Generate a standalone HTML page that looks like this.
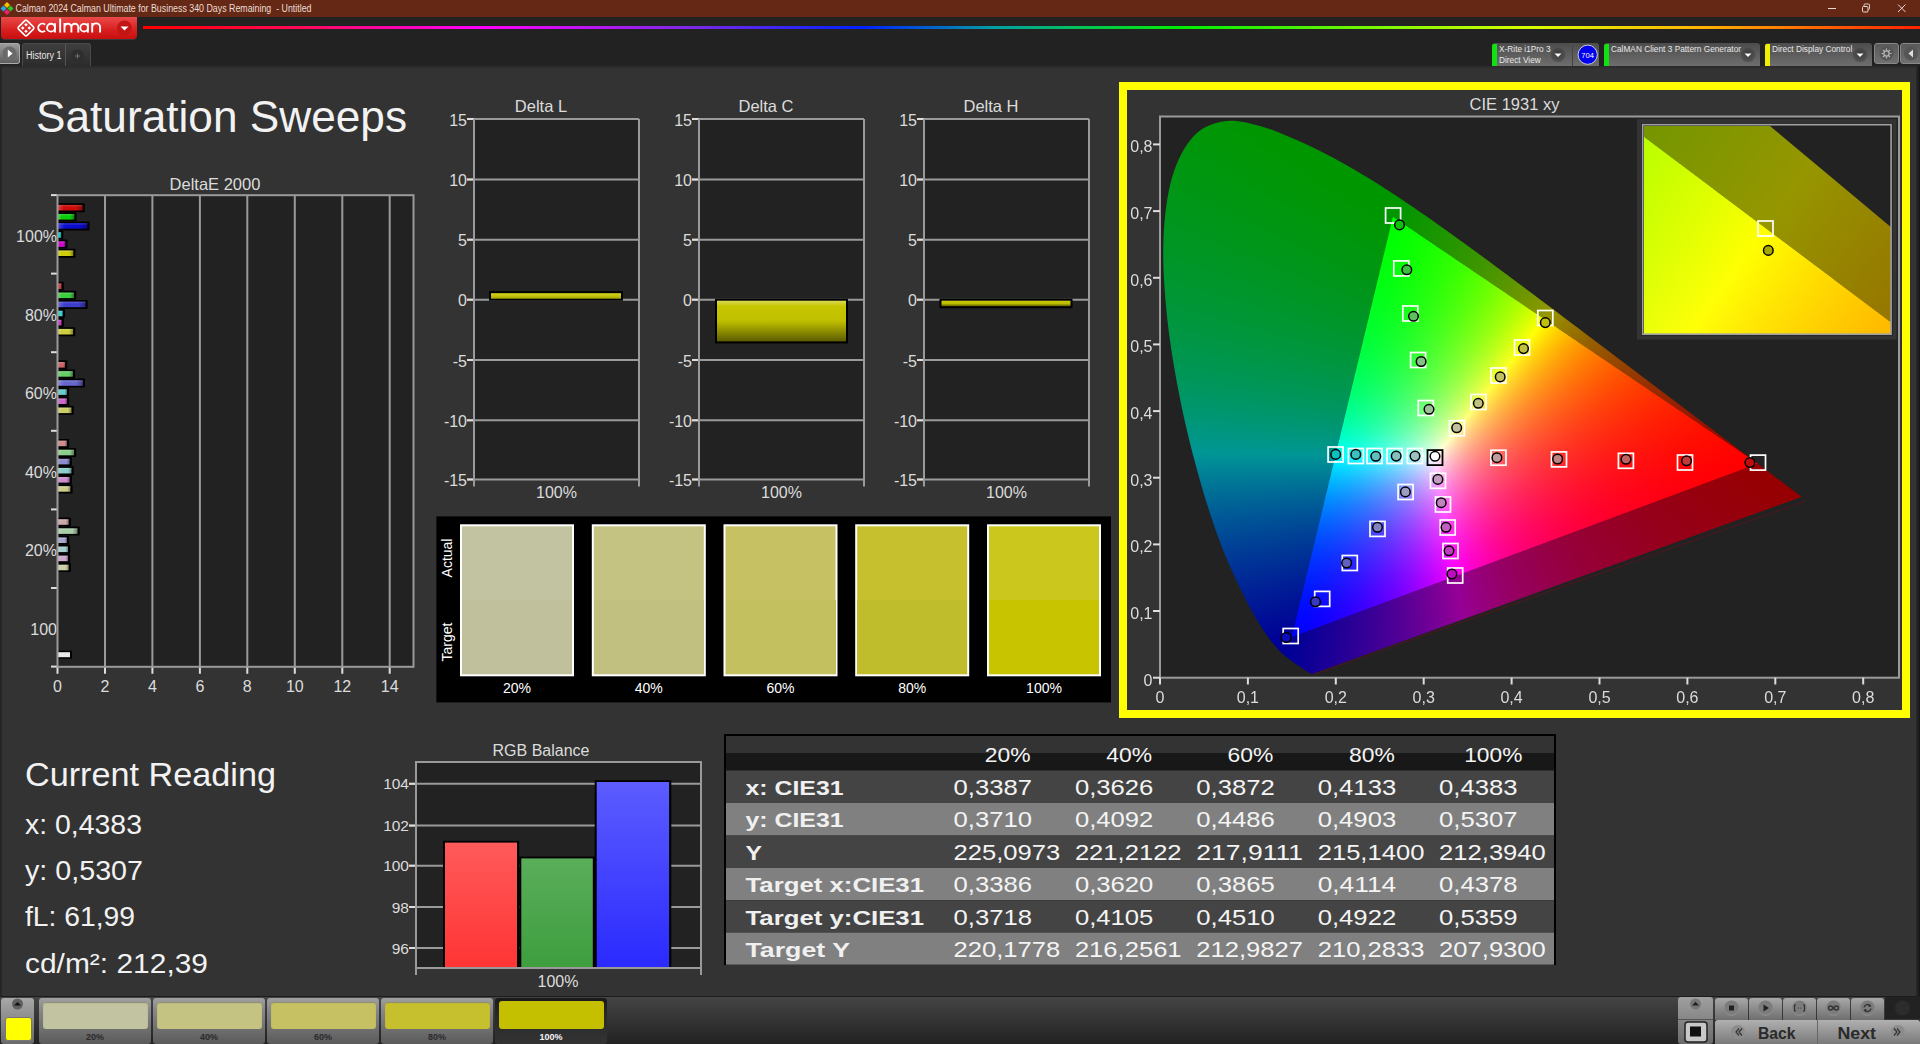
<!DOCTYPE html>
<html><head><meta charset="utf-8"><title>Calman</title>
<style>
html,body{margin:0;padding:0;width:1920px;height:1044px;overflow:hidden;background:#333;font-family:"Liberation Sans", sans-serif;}
.a{position:absolute;box-sizing:border-box;}
svg text{font-family:"Liberation Sans", sans-serif;}
</style></head><body>

<div class="a" style="left:0;top:0;width:1920px;height:17px;background:#652814;"></div>
<svg class="a" style="left:0;top:0" width="16" height="17" viewBox="0 0 16 17">
<g transform="translate(7,8.5) rotate(45)">
<rect x="-4.6" y="-4.6" width="4.2" height="4.2" fill="#f5c400"/>
<rect x="0.4" y="-4.6" width="4.2" height="4.2" fill="#22cc22"/>
<rect x="-4.6" y="0.4" width="4.2" height="4.2" fill="#22aaee"/>
<rect x="0.4" y="0.4" width="4.2" height="4.2" fill="#ee2266"/>
</g></svg>
<svg class="a" style="left:0;top:0" width="400" height="17"><text x="15.5" y="12.2" font-size="10.2" fill="#eadcd6" text-anchor="start" font-weight="normal" textLength="296" lengthAdjust="spacingAndGlyphs" >Calman 2024 Calman Ultimate for Business 340 Days Remaining &#160;- Untitled</text></svg>
<svg class="a" style="left:1800px;top:0" width="120" height="17">
<line x1="1828" y1="8.5" x2="1836" y2="8.5" stroke="#e8d8d0" stroke-width="1" transform="translate(-1800,0)"/>
<rect x="62.5" y="6.5" width="5.5" height="5.5" rx="1" fill="none" stroke="#e8d8d0" stroke-width="1"/>
<path d="M64 6.5 V5 Q64 4 65 4 H68.5 Q69.5 4 69.5 5 V8.5 Q69.5 9.5 68.5 9.5" fill="none" stroke="#e8d8d0" stroke-width="0.9"/>
<path d="M98 4.5 L105.5 12 M105.5 4.5 L98 12" stroke="#e8d8d0" stroke-width="1"/>
</svg>
<div class="a" style="left:0;top:17px;width:1920px;height:49px;background:#222;"></div>
<div class="a" style="left:1px;top:17px;width:136px;height:22px;border-radius:0 0 4px 4px;background:linear-gradient(#ea4a4a,#d81e1e 60%,#c80f0f);box-shadow:0 1px 0 #3a3a3a;"></div>
<svg class="a" style="left:0;top:17px" width="140" height="23">
<g transform="translate(26,11) rotate(45)" fill="none" stroke="#fff" stroke-width="1.6">
<rect x="-6" y="-6" width="12" height="12" rx="1.5"/>
</g>
<g transform="translate(26,11) rotate(45)" fill="#fff">
<rect x="-3.6" y="-3.6" width="2.6" height="2.6"/><rect x="1" y="-3.6" width="2.6" height="2.6"/>
<rect x="-3.6" y="1" width="2.6" height="2.6"/><rect x="1" y="1" width="2.6" height="2.6"/>
</g>
<g fill="none" stroke="#fff" stroke-width="1.9" stroke-linecap="butt" transform="translate(0,-17)">
<path d="M45.1 24.7 A4.05 4.05 0 1 0 45.1 30.6"/>
<circle cx="51.0" cy="27.65" r="3.95"/><path d="M54.95 23.2 V32.6"/>
<path d="M60.15 18.6 V32.6"/>
<path d="M64.5 32.6 V27.2 A3.45 3.45 0 0 1 71.4 27.2 V32.6 M71.4 27.2 A3.45 3.45 0 0 1 78.3 27.2 V32.6 M64.5 27.5 V23"/>
<circle cx="84.1" cy="27.65" r="3.8"/><path d="M87.9 23.2 V32.6"/>
<path d="M92.2 32.6 V27.3 A3.95 3.95 0 0 1 100.1 27.3 V32.6 M92.2 27.5 V23"/>
</g>
<circle cx="124.5" cy="11" r="7.5" fill="#c41515"/>
<path d="M120.5 9.5 L128.5 9.5 L124.5 13.5 Z" fill="#fff"/>
</svg>
<div class="a" style="left:143px;top:26px;width:1777px;height:3px;background:linear-gradient(90deg,#ff0000 0%,#ff0a5a 9%,#ff00ff 19%,#7a2ae6 31%,#0022ff 40.5%,#00a0a0 48%,#00ee00 58.5%,#d8ff00 78%,#ffb000 88%,#ff2200 100%);"></div>
<div class="a" style="left:0;top:43px;width:20px;height:21px;border-radius:0 3px 3px 0;background:linear-gradient(#9a9a9a,#5e5e5e);border:1px solid #aaa;border-left:none;"></div>
<svg class="a" style="left:0;top:43px" width="22" height="22">
<circle cx="9.5" cy="10.5" r="7" fill="#6a6a6a"/>
<path d="M7.8 6.5 L12.5 10.5 L7.8 14.5 Z" fill="#fff"/>
</svg>
<div class="a" style="left:22px;top:43px;width:69px;height:23px;border-radius:3px 3px 0 0;background:linear-gradient(#3e3e3e,#2c2c2c);border:1px solid #4a4a4a;border-bottom:none;"></div>
<div class="a" style="left:65px;top:44px;width:1px;height:22px;background:#555;"></div>
<svg class="a" style="left:0;top:43px" width="70" height="23"><text x="26" y="16.2" font-size="10" fill="#e6e6e6" text-anchor="start" font-weight="normal" textLength="35.5" lengthAdjust="spacingAndGlyphs" >History 1</text></svg>
<svg class="a" style="left:66px;top:43px" width="26" height="23">
<circle cx="11.5" cy="13" r="6.5" fill="#2e2e2e"/>
<path d="M11.5 10.5 V15.5 M9 13 H14" stroke="#777" stroke-width="0.9"/>
</svg>
<div class="a" style="left:1492px;top:43px;width:107px;height:23px;border-radius:3px 3px 0 0;background:linear-gradient(#4c4c4c,#6e6e6e);"></div><div class="a" style="left:1492px;top:44px;width:5px;height:22px;border-radius:2px 0 0 0;background:#11e011;"></div><div class="a" style="left:1499px;top:44px;font-size:8.3px;line-height:11px;color:#e8e8e8;white-space:pre;">X-Rite i1Pro 3<br>Direct View</div><svg class="a" style="left:1549px;top:44px" width="18" height="22"><defs><radialGradient id="dg1492" cx="50%" cy="40%" r="60%"><stop offset="0" stop-color="#3a3a3a"/><stop offset="0.8" stop-color="#505050"/><stop offset="1" stop-color="#5e5e5e"/></radialGradient></defs>
<circle cx="9" cy="11" r="7.5" fill="url(#dg1492)"/><path d="M5.5 9.5 L12.5 9.5 L9 13 Z" fill="#fff"/></svg>
<div class="a" style="left:1572px;top:45px;width:1px;height:21px;background:#444;"></div>
<svg class="a" style="left:1576px;top:43px" width="24" height="24"><circle cx="11.7" cy="11.7" r="9.6" fill="#0000ee" stroke="#ddd" stroke-width="0.9"/>
<text x="11.7" y="14.6" font-size="7.6" fill="#fff" text-anchor="middle">704</text></svg>
<div class="a" style="left:1604px;top:43px;width:156px;height:23px;border-radius:3px 3px 0 0;background:linear-gradient(#4c4c4c,#6e6e6e);"></div><div class="a" style="left:1604px;top:44px;width:5px;height:22px;border-radius:2px 0 0 0;background:#11e011;"></div><div class="a" style="left:1611px;top:44px;font-size:8.3px;line-height:11px;color:#e8e8e8;white-space:pre;">CalMAN Client 3 Pattern Generator</div><svg class="a" style="left:1739px;top:44px" width="18" height="22"><defs><radialGradient id="dg1604" cx="50%" cy="40%" r="60%"><stop offset="0" stop-color="#3a3a3a"/><stop offset="0.8" stop-color="#505050"/><stop offset="1" stop-color="#5e5e5e"/></radialGradient></defs>
<circle cx="9" cy="11" r="7.5" fill="url(#dg1604)"/><path d="M5.5 9.5 L12.5 9.5 L9 13 Z" fill="#fff"/></svg>
<div class="a" style="left:1765px;top:43px;width:107px;height:23px;border-radius:3px 3px 0 0;background:linear-gradient(#4c4c4c,#6e6e6e);"></div><div class="a" style="left:1765px;top:44px;width:5px;height:22px;border-radius:2px 0 0 0;background:#f0f000;"></div><div class="a" style="left:1772px;top:44px;font-size:8.3px;line-height:11px;color:#e8e8e8;white-space:pre;">Direct Display Control</div><svg class="a" style="left:1851px;top:44px" width="18" height="22"><defs><radialGradient id="dg1765" cx="50%" cy="40%" r="60%"><stop offset="0" stop-color="#3a3a3a"/><stop offset="0.8" stop-color="#505050"/><stop offset="1" stop-color="#5e5e5e"/></radialGradient></defs>
<circle cx="9" cy="11" r="7.5" fill="url(#dg1765)"/><path d="M5.5 9.5 L12.5 9.5 L9 13 Z" fill="#fff"/></svg>
<div class="a" style="left:1874px;top:43px;width:25px;height:21px;border-radius:3px;background:linear-gradient(#5a5a5a,#707070);border:1px solid #888;"></div>
<svg class="a" style="left:1874px;top:43px" width="26" height="22"><circle cx="12.5" cy="10.5" r="7" fill="#555"/>
<g fill="none" stroke="#bbb" stroke-width="1.2"><circle cx="12.5" cy="10.5" r="2.6"/>
<path d="M12.5 5.5 V7.2 M12.5 13.8 V15.5 M7.5 10.5 H9.2 M15.8 10.5 H17.5 M9 7 L10.2 8.2 M14.8 12.8 L16 14 M16 7 L14.8 8.2 M10.2 12.8 L9 14"/></g></svg>
<div class="a" style="left:1900px;top:43px;width:22px;height:21px;border-radius:3px 0 0 3px;background:linear-gradient(#5a5a5a,#707070);border:1px solid #888;"></div>
<svg class="a" style="left:1900px;top:43px" width="20" height="22"><circle cx="11" cy="10.5" r="7" fill="#555"/><path d="M13 6.5 L8.5 10.5 L13 14.5 Z" fill="#ddd"/></svg>
<div class="a" style="left:0;top:66px;width:1920px;height:3px;background:linear-gradient(#2a2a2a,#333);"></div>
<div class="a" style="left:0;top:66px;width:2px;height:930px;background:#262626;"></div>
<div class="a" style="left:1916px;top:66px;width:4px;height:930px;background:linear-gradient(90deg,#2a2a2a,#141414);"></div>
<svg class="a" style="left:0;top:0" width="1920" height="1044"><text x="36" y="131.5" font-size="44" fill="#f2f2f2" text-anchor="start" font-weight="normal" textLength="371" lengthAdjust="spacingAndGlyphs" >Saturation Sweeps</text><text x="215" y="189.5" font-size="16.5" fill="#dcdcdc" text-anchor="middle" font-weight="normal" >DeltaE 2000</text><rect x="57.5" y="195.2" width="356.0" height="471.59999999999997" fill="#222"/><line x1="105.0" y1="195.2" x2="105.0" y2="666.8" stroke="#9a9a9a" stroke-width="2"/><line x1="105.0" y1="666.8" x2="105.0" y2="673.8" stroke="#ddd" stroke-width="2"/><line x1="152.4" y1="195.2" x2="152.4" y2="666.8" stroke="#9a9a9a" stroke-width="2"/><line x1="152.4" y1="666.8" x2="152.4" y2="673.8" stroke="#ddd" stroke-width="2"/><line x1="199.9" y1="195.2" x2="199.9" y2="666.8" stroke="#9a9a9a" stroke-width="2"/><line x1="199.9" y1="666.8" x2="199.9" y2="673.8" stroke="#ddd" stroke-width="2"/><line x1="247.3" y1="195.2" x2="247.3" y2="666.8" stroke="#9a9a9a" stroke-width="2"/><line x1="247.3" y1="666.8" x2="247.3" y2="673.8" stroke="#ddd" stroke-width="2"/><line x1="294.8" y1="195.2" x2="294.8" y2="666.8" stroke="#9a9a9a" stroke-width="2"/><line x1="294.8" y1="666.8" x2="294.8" y2="673.8" stroke="#ddd" stroke-width="2"/><line x1="342.3" y1="195.2" x2="342.3" y2="666.8" stroke="#9a9a9a" stroke-width="2"/><line x1="342.3" y1="666.8" x2="342.3" y2="673.8" stroke="#ddd" stroke-width="2"/><line x1="389.7" y1="195.2" x2="389.7" y2="666.8" stroke="#9a9a9a" stroke-width="2"/><line x1="389.7" y1="666.8" x2="389.7" y2="673.8" stroke="#ddd" stroke-width="2"/><line x1="57.5" y1="666.8" x2="57.5" y2="673.8" stroke="#ddd" stroke-width="2"/><text x="57.5" y="691.5" font-size="16" fill="#dcdcdc" text-anchor="middle" font-weight="normal" >0</text><text x="105.0" y="691.5" font-size="16" fill="#dcdcdc" text-anchor="middle" font-weight="normal" >2</text><text x="152.4" y="691.5" font-size="16" fill="#dcdcdc" text-anchor="middle" font-weight="normal" >4</text><text x="199.9" y="691.5" font-size="16" fill="#dcdcdc" text-anchor="middle" font-weight="normal" >6</text><text x="247.3" y="691.5" font-size="16" fill="#dcdcdc" text-anchor="middle" font-weight="normal" >8</text><text x="294.8" y="691.5" font-size="16" fill="#dcdcdc" text-anchor="middle" font-weight="normal" >10</text><text x="342.3" y="691.5" font-size="16" fill="#dcdcdc" text-anchor="middle" font-weight="normal" >12</text><text x="389.7" y="691.5" font-size="16" fill="#dcdcdc" text-anchor="middle" font-weight="normal" >14</text><line x1="51" y1="195.1" x2="57.5" y2="195.1" stroke="#ddd" stroke-width="2"/><line x1="51" y1="273.6" x2="57.5" y2="273.6" stroke="#ddd" stroke-width="2"/><line x1="51" y1="352.2" x2="57.5" y2="352.2" stroke="#ddd" stroke-width="2"/><line x1="51" y1="430.8" x2="57.5" y2="430.8" stroke="#ddd" stroke-width="2"/><line x1="51" y1="509.4" x2="57.5" y2="509.4" stroke="#ddd" stroke-width="2"/><line x1="51" y1="588.0" x2="57.5" y2="588.0" stroke="#ddd" stroke-width="2"/><line x1="51" y1="666.6" x2="57.5" y2="666.6" stroke="#ddd" stroke-width="2"/><text x="57" y="242.0" font-size="16" fill="#dcdcdc" text-anchor="end" font-weight="normal" >100%</text><text x="57" y="320.5" font-size="16" fill="#dcdcdc" text-anchor="end" font-weight="normal" >80%</text><text x="57" y="399.1" font-size="16" fill="#dcdcdc" text-anchor="end" font-weight="normal" >60%</text><text x="57" y="477.7" font-size="16" fill="#dcdcdc" text-anchor="end" font-weight="normal" >40%</text><text x="57" y="556.3" font-size="16" fill="#dcdcdc" text-anchor="end" font-weight="normal" >20%</text><text x="57" y="634.9" font-size="16" fill="#dcdcdc" text-anchor="end" font-weight="normal" >100</text><rect x="57.5" y="203.2" width="27.3" height="9" rx="1" fill="#000"/><defs><linearGradient id="db00" x1="0" y1="0" x2="1" y2="0"><stop offset="0" stop-color="#d94949"/><stop offset="0.25" stop-color="#cd0c0c"/><stop offset="0.75" stop-color="#cd0c0c"/><stop offset="1" stop-color="#7f0707"/></linearGradient></defs><rect x="57.5" y="204.9" width="25.1" height="5.6" fill="url(#db00)"/><rect x="57.5" y="204.9" width="25.1" height="1.6" fill="#fff" opacity="0.12"/><rect x="57.5" y="212.3" width="19.1" height="9" rx="1" fill="#000"/><defs><linearGradient id="db01" x1="0" y1="0" x2="1" y2="0"><stop offset="0" stop-color="#49d949"/><stop offset="0.25" stop-color="#0ccd0c"/><stop offset="0.75" stop-color="#0ccd0c"/><stop offset="1" stop-color="#077f07"/></linearGradient></defs><rect x="57.5" y="214.0" width="16.9" height="5.6" fill="url(#db01)"/><rect x="57.5" y="214.0" width="16.9" height="1.6" fill="#fff" opacity="0.12"/><rect x="57.5" y="221.4" width="32.1" height="9" rx="1" fill="#000"/><defs><linearGradient id="db02" x1="0" y1="0" x2="1" y2="0"><stop offset="0" stop-color="#4949d9"/><stop offset="0.25" stop-color="#0c0ccd"/><stop offset="0.75" stop-color="#0c0ccd"/><stop offset="1" stop-color="#07077f"/></linearGradient></defs><rect x="57.5" y="223.1" width="29.9" height="5.6" fill="url(#db02)"/><rect x="57.5" y="223.1" width="29.9" height="1.6" fill="#fff" opacity="0.12"/><rect x="57.5" y="230.5" width="5.8" height="9" rx="1" fill="#000"/><defs><linearGradient id="db03" x1="0" y1="0" x2="1" y2="0"><stop offset="0" stop-color="#49d9d9"/><stop offset="0.25" stop-color="#0ccdcd"/><stop offset="0.75" stop-color="#0ccdcd"/><stop offset="1" stop-color="#077f7f"/></linearGradient></defs><rect x="57.5" y="232.2" width="3.6" height="5.6" fill="url(#db03)"/><rect x="57.5" y="232.2" width="3.6" height="1.6" fill="#fff" opacity="0.12"/><rect x="57.5" y="239.6" width="10.0" height="9" rx="1" fill="#000"/><defs><linearGradient id="db04" x1="0" y1="0" x2="1" y2="0"><stop offset="0" stop-color="#d949d9"/><stop offset="0.25" stop-color="#cd0ccd"/><stop offset="0.75" stop-color="#cd0ccd"/><stop offset="1" stop-color="#7f077f"/></linearGradient></defs><rect x="57.5" y="241.3" width="7.8" height="5.6" fill="url(#db04)"/><rect x="57.5" y="241.3" width="7.8" height="1.6" fill="#fff" opacity="0.12"/><rect x="57.5" y="248.7" width="18.0" height="9" rx="1" fill="#000"/><defs><linearGradient id="db05" x1="0" y1="0" x2="1" y2="0"><stop offset="0" stop-color="#d9d949"/><stop offset="0.25" stop-color="#cdcd0c"/><stop offset="0.75" stop-color="#cdcd0c"/><stop offset="1" stop-color="#7f7f07"/></linearGradient></defs><rect x="57.5" y="250.4" width="15.8" height="5.6" fill="url(#db05)"/><rect x="57.5" y="250.4" width="15.8" height="1.6" fill="#fff" opacity="0.12"/><rect x="57.5" y="281.7" width="6.3" height="9" rx="1" fill="#000"/><defs><linearGradient id="db10" x1="0" y1="0" x2="1" y2="0"><stop offset="0" stop-color="#d96e6e"/><stop offset="0.25" stop-color="#cd3e3e"/><stop offset="0.75" stop-color="#cd3e3e"/><stop offset="1" stop-color="#7f2626"/></linearGradient></defs><rect x="57.5" y="283.4" width="4.1" height="5.6" fill="url(#db10)"/><rect x="57.5" y="283.4" width="4.1" height="1.6" fill="#fff" opacity="0.12"/><rect x="57.5" y="290.8" width="18.7" height="9" rx="1" fill="#000"/><defs><linearGradient id="db11" x1="0" y1="0" x2="1" y2="0"><stop offset="0" stop-color="#6ed96e"/><stop offset="0.25" stop-color="#3ecd3e"/><stop offset="0.75" stop-color="#3ecd3e"/><stop offset="1" stop-color="#267f26"/></linearGradient></defs><rect x="57.5" y="292.5" width="16.5" height="5.6" fill="url(#db11)"/><rect x="57.5" y="292.5" width="16.5" height="1.6" fill="#fff" opacity="0.12"/><rect x="57.5" y="299.9" width="30.2" height="9" rx="1" fill="#000"/><defs><linearGradient id="db12" x1="0" y1="0" x2="1" y2="0"><stop offset="0" stop-color="#6e6ed9"/><stop offset="0.25" stop-color="#3e3ecd"/><stop offset="0.75" stop-color="#3e3ecd"/><stop offset="1" stop-color="#26267f"/></linearGradient></defs><rect x="57.5" y="301.6" width="28.0" height="5.6" fill="url(#db12)"/><rect x="57.5" y="301.6" width="28.0" height="1.6" fill="#fff" opacity="0.12"/><rect x="57.5" y="309.0" width="7.5" height="9" rx="1" fill="#000"/><defs><linearGradient id="db13" x1="0" y1="0" x2="1" y2="0"><stop offset="0" stop-color="#6ed9d9"/><stop offset="0.25" stop-color="#3ecdcd"/><stop offset="0.75" stop-color="#3ecdcd"/><stop offset="1" stop-color="#267f7f"/></linearGradient></defs><rect x="57.5" y="310.7" width="5.3" height="5.6" fill="url(#db13)"/><rect x="57.5" y="310.7" width="5.3" height="1.6" fill="#fff" opacity="0.12"/><rect x="57.5" y="318.1" width="6.3" height="9" rx="1" fill="#000"/><defs><linearGradient id="db14" x1="0" y1="0" x2="1" y2="0"><stop offset="0" stop-color="#d96ed9"/><stop offset="0.25" stop-color="#cd3ecd"/><stop offset="0.75" stop-color="#cd3ecd"/><stop offset="1" stop-color="#7f267f"/></linearGradient></defs><rect x="57.5" y="319.8" width="4.1" height="5.6" fill="url(#db14)"/><rect x="57.5" y="319.8" width="4.1" height="1.6" fill="#fff" opacity="0.12"/><rect x="57.5" y="327.2" width="17.8" height="9" rx="1" fill="#000"/><defs><linearGradient id="db15" x1="0" y1="0" x2="1" y2="0"><stop offset="0" stop-color="#d9d96e"/><stop offset="0.25" stop-color="#cdcd3e"/><stop offset="0.75" stop-color="#cdcd3e"/><stop offset="1" stop-color="#7f7f26"/></linearGradient></defs><rect x="57.5" y="328.9" width="15.6" height="5.6" fill="url(#db15)"/><rect x="57.5" y="328.9" width="15.6" height="1.6" fill="#fff" opacity="0.12"/><rect x="57.5" y="360.3" width="9.8" height="9" rx="1" fill="#000"/><defs><linearGradient id="db20" x1="0" y1="0" x2="1" y2="0"><stop offset="0" stop-color="#d98c8c"/><stop offset="0.25" stop-color="#cd6666"/><stop offset="0.75" stop-color="#cd6666"/><stop offset="1" stop-color="#7f3f3f"/></linearGradient></defs><rect x="57.5" y="362.0" width="7.6" height="5.6" fill="url(#db20)"/><rect x="57.5" y="362.0" width="7.6" height="1.6" fill="#fff" opacity="0.12"/><rect x="57.5" y="369.4" width="17.6" height="9" rx="1" fill="#000"/><defs><linearGradient id="db21" x1="0" y1="0" x2="1" y2="0"><stop offset="0" stop-color="#8cd98c"/><stop offset="0.25" stop-color="#66cd66"/><stop offset="0.75" stop-color="#66cd66"/><stop offset="1" stop-color="#3f7f3f"/></linearGradient></defs><rect x="57.5" y="371.1" width="15.4" height="5.6" fill="url(#db21)"/><rect x="57.5" y="371.1" width="15.4" height="1.6" fill="#fff" opacity="0.12"/><rect x="57.5" y="378.5" width="27.5" height="9" rx="1" fill="#000"/><defs><linearGradient id="db22" x1="0" y1="0" x2="1" y2="0"><stop offset="0" stop-color="#8c8cd9"/><stop offset="0.25" stop-color="#6666cd"/><stop offset="0.75" stop-color="#6666cd"/><stop offset="1" stop-color="#3f3f7f"/></linearGradient></defs><rect x="57.5" y="380.2" width="25.3" height="5.6" fill="url(#db22)"/><rect x="57.5" y="380.2" width="25.3" height="1.6" fill="#fff" opacity="0.12"/><rect x="57.5" y="387.6" width="11.6" height="9" rx="1" fill="#000"/><defs><linearGradient id="db23" x1="0" y1="0" x2="1" y2="0"><stop offset="0" stop-color="#8cd9d9"/><stop offset="0.25" stop-color="#66cdcd"/><stop offset="0.75" stop-color="#66cdcd"/><stop offset="1" stop-color="#3f7f7f"/></linearGradient></defs><rect x="57.5" y="389.3" width="9.4" height="5.6" fill="url(#db23)"/><rect x="57.5" y="389.3" width="9.4" height="1.6" fill="#fff" opacity="0.12"/><rect x="57.5" y="396.7" width="11.6" height="9" rx="1" fill="#000"/><defs><linearGradient id="db24" x1="0" y1="0" x2="1" y2="0"><stop offset="0" stop-color="#d98cd9"/><stop offset="0.25" stop-color="#cd66cd"/><stop offset="0.75" stop-color="#cd66cd"/><stop offset="1" stop-color="#7f3f7f"/></linearGradient></defs><rect x="57.5" y="398.4" width="9.4" height="5.6" fill="url(#db24)"/><rect x="57.5" y="398.4" width="9.4" height="1.6" fill="#fff" opacity="0.12"/><rect x="57.5" y="405.8" width="16.2" height="9" rx="1" fill="#000"/><defs><linearGradient id="db25" x1="0" y1="0" x2="1" y2="0"><stop offset="0" stop-color="#d9d98c"/><stop offset="0.25" stop-color="#cdcd66"/><stop offset="0.75" stop-color="#cdcd66"/><stop offset="1" stop-color="#7f7f3f"/></linearGradient></defs><rect x="57.5" y="407.5" width="14.0" height="5.6" fill="url(#db25)"/><rect x="57.5" y="407.5" width="14.0" height="1.6" fill="#fff" opacity="0.12"/><rect x="57.5" y="438.9" width="11.6" height="9" rx="1" fill="#000"/><defs><linearGradient id="db30" x1="0" y1="0" x2="1" y2="0"><stop offset="0" stop-color="#d9a8a8"/><stop offset="0.25" stop-color="#cd8b8b"/><stop offset="0.75" stop-color="#cd8b8b"/><stop offset="1" stop-color="#7f5656"/></linearGradient></defs><rect x="57.5" y="440.6" width="9.4" height="5.6" fill="url(#db30)"/><rect x="57.5" y="440.6" width="9.4" height="1.6" fill="#fff" opacity="0.12"/><rect x="57.5" y="448.0" width="18.7" height="9" rx="1" fill="#000"/><defs><linearGradient id="db31" x1="0" y1="0" x2="1" y2="0"><stop offset="0" stop-color="#a8d9a8"/><stop offset="0.25" stop-color="#8bcd8b"/><stop offset="0.75" stop-color="#8bcd8b"/><stop offset="1" stop-color="#567f56"/></linearGradient></defs><rect x="57.5" y="449.7" width="16.5" height="5.6" fill="url(#db31)"/><rect x="57.5" y="449.7" width="16.5" height="1.6" fill="#fff" opacity="0.12"/><rect x="57.5" y="457.1" width="14.4" height="9" rx="1" fill="#000"/><defs><linearGradient id="db32" x1="0" y1="0" x2="1" y2="0"><stop offset="0" stop-color="#a8a8d9"/><stop offset="0.25" stop-color="#8b8bcd"/><stop offset="0.75" stop-color="#8b8bcd"/><stop offset="1" stop-color="#56567f"/></linearGradient></defs><rect x="57.5" y="458.8" width="12.2" height="5.6" fill="url(#db32)"/><rect x="57.5" y="458.8" width="12.2" height="1.6" fill="#fff" opacity="0.12"/><rect x="57.5" y="466.2" width="16.2" height="9" rx="1" fill="#000"/><defs><linearGradient id="db33" x1="0" y1="0" x2="1" y2="0"><stop offset="0" stop-color="#a8d9d9"/><stop offset="0.25" stop-color="#8bcdcd"/><stop offset="0.75" stop-color="#8bcdcd"/><stop offset="1" stop-color="#567f7f"/></linearGradient></defs><rect x="57.5" y="467.9" width="14.0" height="5.6" fill="url(#db33)"/><rect x="57.5" y="467.9" width="14.0" height="1.6" fill="#fff" opacity="0.12"/><rect x="57.5" y="475.3" width="14.4" height="9" rx="1" fill="#000"/><defs><linearGradient id="db34" x1="0" y1="0" x2="1" y2="0"><stop offset="0" stop-color="#d9a8d9"/><stop offset="0.25" stop-color="#cd8bcd"/><stop offset="0.75" stop-color="#cd8bcd"/><stop offset="1" stop-color="#7f567f"/></linearGradient></defs><rect x="57.5" y="477.0" width="12.2" height="5.6" fill="url(#db34)"/><rect x="57.5" y="477.0" width="12.2" height="1.6" fill="#fff" opacity="0.12"/><rect x="57.5" y="484.4" width="15.1" height="9" rx="1" fill="#000"/><defs><linearGradient id="db35" x1="0" y1="0" x2="1" y2="0"><stop offset="0" stop-color="#d9d9a8"/><stop offset="0.25" stop-color="#cdcd8b"/><stop offset="0.75" stop-color="#cdcd8b"/><stop offset="1" stop-color="#7f7f56"/></linearGradient></defs><rect x="57.5" y="486.1" width="12.9" height="5.6" fill="url(#db35)"/><rect x="57.5" y="486.1" width="12.9" height="1.6" fill="#fff" opacity="0.12"/><rect x="57.5" y="517.5" width="13.4" height="9" rx="1" fill="#000"/><defs><linearGradient id="db40" x1="0" y1="0" x2="1" y2="0"><stop offset="0" stop-color="#d9bebe"/><stop offset="0.25" stop-color="#cda8a8"/><stop offset="0.75" stop-color="#cda8a8"/><stop offset="1" stop-color="#7f6868"/></linearGradient></defs><rect x="57.5" y="519.2" width="11.2" height="5.6" fill="url(#db40)"/><rect x="57.5" y="519.2" width="11.2" height="1.6" fill="#fff" opacity="0.12"/><rect x="57.5" y="526.6" width="22.2" height="9" rx="1" fill="#000"/><defs><linearGradient id="db41" x1="0" y1="0" x2="1" y2="0"><stop offset="0" stop-color="#bed9be"/><stop offset="0.25" stop-color="#a8cda8"/><stop offset="0.75" stop-color="#a8cda8"/><stop offset="1" stop-color="#687f68"/></linearGradient></defs><rect x="57.5" y="528.3" width="20.0" height="5.6" fill="url(#db41)"/><rect x="57.5" y="528.3" width="20.0" height="1.6" fill="#fff" opacity="0.12"/><rect x="57.5" y="535.7" width="11.6" height="9" rx="1" fill="#000"/><defs><linearGradient id="db42" x1="0" y1="0" x2="1" y2="0"><stop offset="0" stop-color="#bebed9"/><stop offset="0.25" stop-color="#a8a8cd"/><stop offset="0.75" stop-color="#a8a8cd"/><stop offset="1" stop-color="#68687f"/></linearGradient></defs><rect x="57.5" y="537.4" width="9.4" height="5.6" fill="url(#db42)"/><rect x="57.5" y="537.4" width="9.4" height="1.6" fill="#fff" opacity="0.12"/><rect x="57.5" y="544.8" width="12.7" height="9" rx="1" fill="#000"/><defs><linearGradient id="db43" x1="0" y1="0" x2="1" y2="0"><stop offset="0" stop-color="#bed9d9"/><stop offset="0.25" stop-color="#a8cdcd"/><stop offset="0.75" stop-color="#a8cdcd"/><stop offset="1" stop-color="#687f7f"/></linearGradient></defs><rect x="57.5" y="546.5" width="10.5" height="5.6" fill="url(#db43)"/><rect x="57.5" y="546.5" width="10.5" height="1.6" fill="#fff" opacity="0.12"/><rect x="57.5" y="553.9" width="12.7" height="9" rx="1" fill="#000"/><defs><linearGradient id="db44" x1="0" y1="0" x2="1" y2="0"><stop offset="0" stop-color="#d9bed9"/><stop offset="0.25" stop-color="#cda8cd"/><stop offset="0.75" stop-color="#cda8cd"/><stop offset="1" stop-color="#7f687f"/></linearGradient></defs><rect x="57.5" y="555.6" width="10.5" height="5.6" fill="url(#db44)"/><rect x="57.5" y="555.6" width="10.5" height="1.6" fill="#fff" opacity="0.12"/><rect x="57.5" y="563.0" width="13.4" height="9" rx="1" fill="#000"/><defs><linearGradient id="db45" x1="0" y1="0" x2="1" y2="0"><stop offset="0" stop-color="#d9d9be"/><stop offset="0.25" stop-color="#cdcda8"/><stop offset="0.75" stop-color="#cdcda8"/><stop offset="1" stop-color="#7f7f68"/></linearGradient></defs><rect x="57.5" y="564.7" width="11.2" height="5.6" fill="url(#db45)"/><rect x="57.5" y="564.7" width="11.2" height="1.6" fill="#fff" opacity="0.12"/><rect x="57.5" y="650.7" width="14.5" height="8" fill="#000"/><rect x="57.5" y="652.2" width="12.5" height="5" fill="#e8e8e8"/><rect x="57.5" y="195.2" width="356.0" height="471.59999999999997" fill="none" stroke="#9a9a9a" stroke-width="2"/><text x="541" y="111.5" font-size="16.5" fill="#dcdcdc" text-anchor="middle" font-weight="normal" >Delta L</text><rect x="474" y="119.0" width="165" height="360.5" fill="#222"/><line x1="467" y1="119.0" x2="639" y2="119.0" stroke="#9a9a9a" stroke-width="2"/><line x1="467" y1="119.0" x2="474" y2="119.0" stroke="#ddd" stroke-width="2"/><text x="467" y="125.5" font-size="16" fill="#dcdcdc" text-anchor="end" font-weight="normal" >15</text><line x1="467" y1="179.5" x2="639" y2="179.5" stroke="#9a9a9a" stroke-width="2"/><line x1="467" y1="179.5" x2="474" y2="179.5" stroke="#ddd" stroke-width="2"/><text x="467" y="186.0" font-size="16" fill="#dcdcdc" text-anchor="end" font-weight="normal" >10</text><line x1="467" y1="239.7" x2="639" y2="239.7" stroke="#9a9a9a" stroke-width="2"/><line x1="467" y1="239.7" x2="474" y2="239.7" stroke="#ddd" stroke-width="2"/><text x="467" y="246.2" font-size="16" fill="#dcdcdc" text-anchor="end" font-weight="normal" >5</text><line x1="467" y1="299.7" x2="639" y2="299.7" stroke="#9a9a9a" stroke-width="2"/><line x1="467" y1="299.7" x2="474" y2="299.7" stroke="#ddd" stroke-width="2"/><text x="467" y="306.2" font-size="16" fill="#dcdcdc" text-anchor="end" font-weight="normal" >0</text><line x1="467" y1="360.0" x2="639" y2="360.0" stroke="#9a9a9a" stroke-width="2"/><line x1="467" y1="360.0" x2="474" y2="360.0" stroke="#ddd" stroke-width="2"/><text x="467" y="366.5" font-size="16" fill="#dcdcdc" text-anchor="end" font-weight="normal" >-5</text><line x1="467" y1="420.3" x2="639" y2="420.3" stroke="#9a9a9a" stroke-width="2"/><line x1="467" y1="420.3" x2="474" y2="420.3" stroke="#ddd" stroke-width="2"/><text x="467" y="426.8" font-size="16" fill="#dcdcdc" text-anchor="end" font-weight="normal" >-10</text><line x1="467" y1="479.5" x2="639" y2="479.5" stroke="#9a9a9a" stroke-width="2"/><line x1="467" y1="479.5" x2="474" y2="479.5" stroke="#ddd" stroke-width="2"/><text x="467" y="486.0" font-size="16" fill="#dcdcdc" text-anchor="end" font-weight="normal" >-15</text><line x1="474" y1="119.0" x2="474" y2="486.5" stroke="#9a9a9a" stroke-width="2"/><line x1="639" y1="119.0" x2="639" y2="486.5" stroke="#9a9a9a" stroke-width="2"/><text x="556.5" y="497.5" font-size="16" fill="#dcdcdc" text-anchor="middle" font-weight="normal" >100%</text><rect x="489" y="291.2" width="134" height="9.5" fill="#000"/><defs><linearGradient id="gL" x1="0" y1="0" x2="0" y2="1"><stop offset="0" stop-color="#d8d820"/><stop offset="1" stop-color="#a8a800"/></linearGradient></defs><rect x="491" y="293.2" width="130" height="5.5" fill="url(#gL)"/><text x="766" y="111.5" font-size="16.5" fill="#dcdcdc" text-anchor="middle" font-weight="normal" >Delta C</text><rect x="699" y="119.0" width="165" height="360.5" fill="#222"/><line x1="692" y1="119.0" x2="864" y2="119.0" stroke="#9a9a9a" stroke-width="2"/><line x1="692" y1="119.0" x2="699" y2="119.0" stroke="#ddd" stroke-width="2"/><text x="692" y="125.5" font-size="16" fill="#dcdcdc" text-anchor="end" font-weight="normal" >15</text><line x1="692" y1="179.5" x2="864" y2="179.5" stroke="#9a9a9a" stroke-width="2"/><line x1="692" y1="179.5" x2="699" y2="179.5" stroke="#ddd" stroke-width="2"/><text x="692" y="186.0" font-size="16" fill="#dcdcdc" text-anchor="end" font-weight="normal" >10</text><line x1="692" y1="239.7" x2="864" y2="239.7" stroke="#9a9a9a" stroke-width="2"/><line x1="692" y1="239.7" x2="699" y2="239.7" stroke="#ddd" stroke-width="2"/><text x="692" y="246.2" font-size="16" fill="#dcdcdc" text-anchor="end" font-weight="normal" >5</text><line x1="692" y1="299.7" x2="864" y2="299.7" stroke="#9a9a9a" stroke-width="2"/><line x1="692" y1="299.7" x2="699" y2="299.7" stroke="#ddd" stroke-width="2"/><text x="692" y="306.2" font-size="16" fill="#dcdcdc" text-anchor="end" font-weight="normal" >0</text><line x1="692" y1="360.0" x2="864" y2="360.0" stroke="#9a9a9a" stroke-width="2"/><line x1="692" y1="360.0" x2="699" y2="360.0" stroke="#ddd" stroke-width="2"/><text x="692" y="366.5" font-size="16" fill="#dcdcdc" text-anchor="end" font-weight="normal" >-5</text><line x1="692" y1="420.3" x2="864" y2="420.3" stroke="#9a9a9a" stroke-width="2"/><line x1="692" y1="420.3" x2="699" y2="420.3" stroke="#ddd" stroke-width="2"/><text x="692" y="426.8" font-size="16" fill="#dcdcdc" text-anchor="end" font-weight="normal" >-10</text><line x1="692" y1="479.5" x2="864" y2="479.5" stroke="#9a9a9a" stroke-width="2"/><line x1="692" y1="479.5" x2="699" y2="479.5" stroke="#ddd" stroke-width="2"/><text x="692" y="486.0" font-size="16" fill="#dcdcdc" text-anchor="end" font-weight="normal" >-15</text><line x1="699" y1="119.0" x2="699" y2="486.5" stroke="#9a9a9a" stroke-width="2"/><line x1="864" y1="119.0" x2="864" y2="486.5" stroke="#9a9a9a" stroke-width="2"/><text x="781.5" y="497.5" font-size="16" fill="#dcdcdc" text-anchor="middle" font-weight="normal" >100%</text><rect x="715" y="298.7" width="133" height="44.7" fill="#000"/><defs><linearGradient id="gC" x1="0" y1="0" x2="0" y2="1"><stop offset="0" stop-color="#dada55"/><stop offset="0.14" stop-color="#c6c600"/><stop offset="0.5" stop-color="#bfbf00"/><stop offset="1" stop-color="#5c5c00"/></linearGradient></defs><rect x="717" y="300.7" width="129" height="40.7" fill="url(#gC)"/><text x="991" y="111.5" font-size="16.5" fill="#dcdcdc" text-anchor="middle" font-weight="normal" >Delta H</text><rect x="924" y="119.0" width="165" height="360.5" fill="#222"/><line x1="917" y1="119.0" x2="1089" y2="119.0" stroke="#9a9a9a" stroke-width="2"/><line x1="917" y1="119.0" x2="924" y2="119.0" stroke="#ddd" stroke-width="2"/><text x="917" y="125.5" font-size="16" fill="#dcdcdc" text-anchor="end" font-weight="normal" >15</text><line x1="917" y1="179.5" x2="1089" y2="179.5" stroke="#9a9a9a" stroke-width="2"/><line x1="917" y1="179.5" x2="924" y2="179.5" stroke="#ddd" stroke-width="2"/><text x="917" y="186.0" font-size="16" fill="#dcdcdc" text-anchor="end" font-weight="normal" >10</text><line x1="917" y1="239.7" x2="1089" y2="239.7" stroke="#9a9a9a" stroke-width="2"/><line x1="917" y1="239.7" x2="924" y2="239.7" stroke="#ddd" stroke-width="2"/><text x="917" y="246.2" font-size="16" fill="#dcdcdc" text-anchor="end" font-weight="normal" >5</text><line x1="917" y1="299.7" x2="1089" y2="299.7" stroke="#9a9a9a" stroke-width="2"/><line x1="917" y1="299.7" x2="924" y2="299.7" stroke="#ddd" stroke-width="2"/><text x="917" y="306.2" font-size="16" fill="#dcdcdc" text-anchor="end" font-weight="normal" >0</text><line x1="917" y1="360.0" x2="1089" y2="360.0" stroke="#9a9a9a" stroke-width="2"/><line x1="917" y1="360.0" x2="924" y2="360.0" stroke="#ddd" stroke-width="2"/><text x="917" y="366.5" font-size="16" fill="#dcdcdc" text-anchor="end" font-weight="normal" >-5</text><line x1="917" y1="420.3" x2="1089" y2="420.3" stroke="#9a9a9a" stroke-width="2"/><line x1="917" y1="420.3" x2="924" y2="420.3" stroke="#ddd" stroke-width="2"/><text x="917" y="426.8" font-size="16" fill="#dcdcdc" text-anchor="end" font-weight="normal" >-10</text><line x1="917" y1="479.5" x2="1089" y2="479.5" stroke="#9a9a9a" stroke-width="2"/><line x1="917" y1="479.5" x2="924" y2="479.5" stroke="#ddd" stroke-width="2"/><text x="917" y="486.0" font-size="16" fill="#dcdcdc" text-anchor="end" font-weight="normal" >-15</text><line x1="924" y1="119.0" x2="924" y2="486.5" stroke="#9a9a9a" stroke-width="2"/><line x1="1089" y1="119.0" x2="1089" y2="486.5" stroke="#9a9a9a" stroke-width="2"/><text x="1006.5" y="497.5" font-size="16" fill="#dcdcdc" text-anchor="middle" font-weight="normal" >100%</text><rect x="939.5" y="298.7" width="133.0" height="9.5" fill="#000"/><defs><linearGradient id="gH" x1="0" y1="0" x2="0" y2="1"><stop offset="0" stop-color="#dada55"/><stop offset="0.14" stop-color="#c6c600"/><stop offset="0.5" stop-color="#bfbf00"/><stop offset="1" stop-color="#5c5c00"/></linearGradient></defs><rect x="941.5" y="300.7" width="129.0" height="5.5" fill="url(#gH)"/><rect x="436.4" y="516.4" width="674.6" height="186" fill="#000"/><text transform="translate(451.5,558) rotate(-90)" x="0" y="0" font-size="14" fill="#fff" text-anchor="middle">Actual</text><text transform="translate(451.5,642) rotate(-90)" x="0" y="0" font-size="14" fill="#fff" text-anchor="middle">Target</text><rect x="460.0" y="524.3" width="114" height="152" fill="#fff"/><rect x="462.0" y="526.3" width="110" height="148" fill="#c2c3a0"/><rect x="462.0" y="600" width="110" height="74.3" fill="#c0c09c" shape-rendering="crispEdges"/><text x="517.0" y="693" font-size="14" fill="#fff" text-anchor="middle" font-weight="normal" >20%</text><rect x="591.8" y="524.3" width="114" height="152" fill="#fff"/><rect x="593.8" y="526.3" width="110" height="148" fill="#c4c382"/><rect x="593.8" y="600" width="110" height="74.3" fill="#c2c080" shape-rendering="crispEdges"/><text x="648.8" y="693" font-size="14" fill="#fff" text-anchor="middle" font-weight="normal" >40%</text><rect x="723.5" y="524.3" width="114" height="152" fill="#fff"/><rect x="725.5" y="526.3" width="110" height="148" fill="#c6c263"/><rect x="725.5" y="600" width="110" height="74.3" fill="#c3c05f" shape-rendering="crispEdges"/><text x="780.5" y="693" font-size="14" fill="#fff" text-anchor="middle" font-weight="normal" >60%</text><rect x="855.2" y="524.3" width="114" height="152" fill="#fff"/><rect x="857.2" y="526.3" width="110" height="148" fill="#c6bf2e"/><rect x="857.2" y="600" width="110" height="74.3" fill="#c0bd2c" shape-rendering="crispEdges"/><text x="912.2" y="693" font-size="14" fill="#fff" text-anchor="middle" font-weight="normal" >80%</text><rect x="987.0" y="524.3" width="114" height="152" fill="#fff"/><rect x="989.0" y="526.3" width="110" height="148" fill="#cbc71c"/><rect x="989.0" y="600" width="110" height="74.3" fill="#c8c400" shape-rendering="crispEdges"/><text x="1044.0" y="693" font-size="14" fill="#fff" text-anchor="middle" font-weight="normal" >100%</text><text x="25" y="786.4" font-size="33.5" fill="#f2f2f2" text-anchor="start" font-weight="normal" textLength="251" lengthAdjust="spacingAndGlyphs" >Current Reading</text><text x="25" y="833.5" font-size="27" fill="#f2f2f2" text-anchor="start" font-weight="normal" textLength="117" lengthAdjust="spacingAndGlyphs" >x: 0,4383</text><text x="25" y="879.9" font-size="27" fill="#f2f2f2" text-anchor="start" font-weight="normal" textLength="118" lengthAdjust="spacingAndGlyphs" >y: 0,5307</text><text x="25" y="926.2" font-size="27" fill="#f2f2f2" text-anchor="start" font-weight="normal" textLength="110" lengthAdjust="spacingAndGlyphs" >fL: 61,99</text><text x="25" y="972.5" font-size="27" fill="#f2f2f2" text-anchor="start" font-weight="normal" textLength="183" lengthAdjust="spacingAndGlyphs" >cd/m²: 212,39</text><text x="541" y="755.5" font-size="16" fill="#dcdcdc" text-anchor="middle" font-weight="normal" >RGB Balance</text><rect x="416" y="762" width="285" height="206" fill="#222"/><line x1="409" y1="783.8" x2="701" y2="783.8" stroke="#9a9a9a" stroke-width="2"/><line x1="409" y1="783.8" x2="416" y2="783.8" stroke="#ddd" stroke-width="2"/><text x="409" y="789.3" font-size="15.5" fill="#dcdcdc" text-anchor="end" font-weight="normal" >104</text><line x1="409" y1="825.6" x2="701" y2="825.6" stroke="#9a9a9a" stroke-width="2"/><line x1="409" y1="825.6" x2="416" y2="825.6" stroke="#ddd" stroke-width="2"/><text x="409" y="831.1" font-size="15.5" fill="#dcdcdc" text-anchor="end" font-weight="normal" >102</text><line x1="409" y1="865.7" x2="701" y2="865.7" stroke="#9a9a9a" stroke-width="2"/><line x1="409" y1="865.7" x2="416" y2="865.7" stroke="#ddd" stroke-width="2"/><text x="409" y="871.2" font-size="15.5" fill="#dcdcdc" text-anchor="end" font-weight="normal" >100</text><line x1="409" y1="907" x2="701" y2="907" stroke="#9a9a9a" stroke-width="2"/><line x1="409" y1="907" x2="416" y2="907" stroke="#ddd" stroke-width="2"/><text x="409" y="912.5" font-size="15.5" fill="#dcdcdc" text-anchor="end" font-weight="normal" >98</text><line x1="409" y1="948" x2="701" y2="948" stroke="#9a9a9a" stroke-width="2"/><line x1="409" y1="948" x2="416" y2="948" stroke="#ddd" stroke-width="2"/><text x="409" y="953.5" font-size="15.5" fill="#dcdcdc" text-anchor="end" font-weight="normal" >96</text><defs><linearGradient id="rgR" x1="0" y1="0" x2="0" y2="1"><stop offset="0" stop-color="#ff5a5a"/><stop offset="1" stop-color="#ff3434"/></linearGradient><linearGradient id="rgG" x1="0" y1="0" x2="0" y2="1"><stop offset="0" stop-color="#5aae5a"/><stop offset="1" stop-color="#3e9e3e"/></linearGradient><linearGradient id="rgB" x1="0" y1="0" x2="0" y2="1"><stop offset="0" stop-color="#5c5cff"/><stop offset="1" stop-color="#2a2aff"/></linearGradient></defs><rect x="443.0" y="840.8" width="76.2" height="127.2" fill="#000"/><rect x="445.0" y="842.6" width="72.0" height="125.4" fill="url(#rgR)"/><rect x="519.3" y="856.6" width="75.7" height="111.4" fill="#000"/><rect x="521.3" y="858.4" width="71.5" height="109.6" fill="url(#rgG)"/><rect x="594.7" y="780.2" width="76.6" height="187.8" fill="#000"/><rect x="596.7" y="782.0" width="72.4" height="186.0" fill="url(#rgB)"/><rect x="416" y="762" width="285" height="206" fill="none" stroke="#9a9a9a" stroke-width="2"/><line x1="416" y1="968" x2="416" y2="975" stroke="#9a9a9a" stroke-width="2"/><line x1="701" y1="968" x2="701" y2="975" stroke="#9a9a9a" stroke-width="2"/><text x="558" y="986.5" font-size="16" fill="#dcdcdc" text-anchor="middle" font-weight="normal" >100%</text></svg>
<div class="a" style="left:724px;top:734px;width:832px;height:231px;background:#000;"></div>
<div class="a" style="left:726px;top:736px;width:828px;height:17px;background:#333;"></div>
<div class="a" style="left:726px;top:753px;width:828px;height:17.5px;background:#181818;"></div>
<svg class="a" style="left:0;top:0" width="1920" height="1044"><rect x="726" y="770.5" width="828" height="32.5" fill="#444"/><text x="745.5" y="794.7" font-size="21" fill="#f0f0f0" text-anchor="start" font-weight="bold" textLength="98" lengthAdjust="spacingAndGlyphs" >x: CIE31</text><text x="953.5" y="794.7" font-size="21.2" fill="#f4f4f4" text-anchor="start" font-weight="normal" textLength="78.5" lengthAdjust="spacingAndGlyphs" >0,3387</text><text x="1074.9" y="794.7" font-size="21.2" fill="#f4f4f4" text-anchor="start" font-weight="normal" textLength="78.5" lengthAdjust="spacingAndGlyphs" >0,3626</text><text x="1196.3" y="794.7" font-size="21.2" fill="#f4f4f4" text-anchor="start" font-weight="normal" textLength="78.5" lengthAdjust="spacingAndGlyphs" >0,3872</text><text x="1317.7" y="794.7" font-size="21.2" fill="#f4f4f4" text-anchor="start" font-weight="normal" textLength="78.5" lengthAdjust="spacingAndGlyphs" >0,4133</text><text x="1439.1" y="794.7" font-size="21.2" fill="#f4f4f4" text-anchor="start" font-weight="normal" textLength="78.5" lengthAdjust="spacingAndGlyphs" >0,4383</text><rect x="726" y="803.0" width="828" height="32.6" fill="#808080"/><text x="745.5" y="827.2" font-size="21" fill="#f0f0f0" text-anchor="start" font-weight="bold" textLength="98" lengthAdjust="spacingAndGlyphs" >y: CIE31</text><text x="953.5" y="827.2" font-size="21.2" fill="#f4f4f4" text-anchor="start" font-weight="normal" textLength="78.5" lengthAdjust="spacingAndGlyphs" >0,3710</text><text x="1074.9" y="827.2" font-size="21.2" fill="#f4f4f4" text-anchor="start" font-weight="normal" textLength="78.5" lengthAdjust="spacingAndGlyphs" >0,4092</text><text x="1196.3" y="827.2" font-size="21.2" fill="#f4f4f4" text-anchor="start" font-weight="normal" textLength="78.5" lengthAdjust="spacingAndGlyphs" >0,4486</text><text x="1317.7" y="827.2" font-size="21.2" fill="#f4f4f4" text-anchor="start" font-weight="normal" textLength="78.5" lengthAdjust="spacingAndGlyphs" >0,4903</text><text x="1439.1" y="827.2" font-size="21.2" fill="#f4f4f4" text-anchor="start" font-weight="normal" textLength="78.5" lengthAdjust="spacingAndGlyphs" >0,5307</text><rect x="726" y="835.6" width="828" height="32.4" fill="#444"/><text x="745.5" y="859.8" font-size="21" fill="#f0f0f0" text-anchor="start" font-weight="bold" textLength="16.5" lengthAdjust="spacingAndGlyphs" >Y</text><text x="953.5" y="859.8" font-size="21.2" fill="#f4f4f4" text-anchor="start" font-weight="normal" textLength="106.7" lengthAdjust="spacingAndGlyphs" >225,0973</text><text x="1074.9" y="859.8" font-size="21.2" fill="#f4f4f4" text-anchor="start" font-weight="normal" textLength="106.7" lengthAdjust="spacingAndGlyphs" >221,2122</text><text x="1196.3" y="859.8" font-size="21.2" fill="#f4f4f4" text-anchor="start" font-weight="normal" textLength="106.7" lengthAdjust="spacingAndGlyphs" >217,9111</text><text x="1317.7" y="859.8" font-size="21.2" fill="#f4f4f4" text-anchor="start" font-weight="normal" textLength="106.7" lengthAdjust="spacingAndGlyphs" >215,1400</text><text x="1439.1" y="859.8" font-size="21.2" fill="#f4f4f4" text-anchor="start" font-weight="normal" textLength="106.7" lengthAdjust="spacingAndGlyphs" >212,3940</text><rect x="726" y="868.0" width="828" height="32.3" fill="#808080"/><text x="745.5" y="892.2" font-size="21" fill="#f0f0f0" text-anchor="start" font-weight="bold" textLength="178.5" lengthAdjust="spacingAndGlyphs" >Target x:CIE31</text><text x="953.5" y="892.2" font-size="21.2" fill="#f4f4f4" text-anchor="start" font-weight="normal" textLength="78.5" lengthAdjust="spacingAndGlyphs" >0,3386</text><text x="1074.9" y="892.2" font-size="21.2" fill="#f4f4f4" text-anchor="start" font-weight="normal" textLength="78.5" lengthAdjust="spacingAndGlyphs" >0,3620</text><text x="1196.3" y="892.2" font-size="21.2" fill="#f4f4f4" text-anchor="start" font-weight="normal" textLength="78.5" lengthAdjust="spacingAndGlyphs" >0,3865</text><text x="1317.7" y="892.2" font-size="21.2" fill="#f4f4f4" text-anchor="start" font-weight="normal" textLength="78.5" lengthAdjust="spacingAndGlyphs" >0,4114</text><text x="1439.1" y="892.2" font-size="21.2" fill="#f4f4f4" text-anchor="start" font-weight="normal" textLength="78.5" lengthAdjust="spacingAndGlyphs" >0,4378</text><rect x="726" y="900.3" width="828" height="32.2" fill="#444"/><text x="745.5" y="924.5" font-size="21" fill="#f0f0f0" text-anchor="start" font-weight="bold" textLength="178.5" lengthAdjust="spacingAndGlyphs" >Target y:CIE31</text><text x="953.5" y="924.5" font-size="21.2" fill="#f4f4f4" text-anchor="start" font-weight="normal" textLength="78.5" lengthAdjust="spacingAndGlyphs" >0,3718</text><text x="1074.9" y="924.5" font-size="21.2" fill="#f4f4f4" text-anchor="start" font-weight="normal" textLength="78.5" lengthAdjust="spacingAndGlyphs" >0,4105</text><text x="1196.3" y="924.5" font-size="21.2" fill="#f4f4f4" text-anchor="start" font-weight="normal" textLength="78.5" lengthAdjust="spacingAndGlyphs" >0,4510</text><text x="1317.7" y="924.5" font-size="21.2" fill="#f4f4f4" text-anchor="start" font-weight="normal" textLength="78.5" lengthAdjust="spacingAndGlyphs" >0,4922</text><text x="1439.1" y="924.5" font-size="21.2" fill="#f4f4f4" text-anchor="start" font-weight="normal" textLength="78.5" lengthAdjust="spacingAndGlyphs" >0,5359</text><rect x="726" y="932.5" width="828" height="32.2" fill="#808080"/><text x="745.5" y="956.7" font-size="21" fill="#f0f0f0" text-anchor="start" font-weight="bold" textLength="104.5" lengthAdjust="spacingAndGlyphs" >Target Y</text><text x="953.5" y="956.7" font-size="21.2" fill="#f4f4f4" text-anchor="start" font-weight="normal" textLength="106.7" lengthAdjust="spacingAndGlyphs" >220,1778</text><text x="1074.9" y="956.7" font-size="21.2" fill="#f4f4f4" text-anchor="start" font-weight="normal" textLength="106.7" lengthAdjust="spacingAndGlyphs" >216,2561</text><text x="1196.3" y="956.7" font-size="21.2" fill="#f4f4f4" text-anchor="start" font-weight="normal" textLength="106.7" lengthAdjust="spacingAndGlyphs" >212,9827</text><text x="1317.7" y="956.7" font-size="21.2" fill="#f4f4f4" text-anchor="start" font-weight="normal" textLength="106.7" lengthAdjust="spacingAndGlyphs" >210,2833</text><text x="1439.1" y="956.7" font-size="21.2" fill="#f4f4f4" text-anchor="start" font-weight="normal" textLength="106.7" lengthAdjust="spacingAndGlyphs" >207,9300</text><text x="1007.7" y="761.6" font-size="19.3" fill="#f4f4f4" text-anchor="middle" font-weight="normal" textLength="45.8" lengthAdjust="spacingAndGlyphs" >20%</text><text x="1129.1" y="761.6" font-size="19.3" fill="#f4f4f4" text-anchor="middle" font-weight="normal" textLength="45.8" lengthAdjust="spacingAndGlyphs" >40%</text><text x="1250.5" y="761.6" font-size="19.3" fill="#f4f4f4" text-anchor="middle" font-weight="normal" textLength="45.8" lengthAdjust="spacingAndGlyphs" >60%</text><text x="1371.9" y="761.6" font-size="19.3" fill="#f4f4f4" text-anchor="middle" font-weight="normal" textLength="45.8" lengthAdjust="spacingAndGlyphs" >80%</text><text x="1493.3" y="761.6" font-size="19.3" fill="#f4f4f4" text-anchor="middle" font-weight="normal" textLength="58.2" lengthAdjust="spacingAndGlyphs" >100%</text></svg>
<div class="a" style="left:0;top:996px;width:1920px;height:48px;background:linear-gradient(#454545,#222 100%);"></div>
<div class="a" style="left:0;top:996px;width:1920px;height:1px;background:#1c1c1c;"></div>
<div class="a" style="left:1px;top:997.5px;width:33px;height:46px;border-radius:3px;background:linear-gradient(#a8a8a8,#6a6a6a);"></div>
<svg class="a" style="left:1px;top:997px" width="34" height="47"><circle cx="16.5" cy="7" r="5.5" fill="#606060"/>
<path d="M13 8.5 L16.5 5 L20 8.5 Z" fill="#111"/></svg>
<div class="a" style="left:4.5px;top:1017px;width:27px;height:24px;border-radius:3px;background:#ffff00;border:1px solid #777;"></div>
<div class="a" style="left:39px;top:997.5px;width:112px;height:46px;border-radius:3px;background:linear-gradient(#a0a0a0,#888 25%,#6e6e6e 70%,#5a5a5a);"></div>
<div class="a" style="left:43px;top:1001.5px;width:105px;height:27px;border-radius:3px;background:#c2c3a0;box-shadow:inset 0 1px 1px #8a8a70;"></div>
<div class="a" style="left:39px;top:1031px;width:112px;text-align:center;font-size:9px;font-weight:bold;color:#2a2a2a;line-height:12px;">20%</div>
<div class="a" style="left:153px;top:997.5px;width:112px;height:46px;border-radius:3px;background:linear-gradient(#a0a0a0,#888 25%,#6e6e6e 70%,#5a5a5a);"></div>
<div class="a" style="left:157px;top:1001.5px;width:105px;height:27px;border-radius:3px;background:#c4c382;box-shadow:inset 0 1px 1px #8a8a70;"></div>
<div class="a" style="left:153px;top:1031px;width:112px;text-align:center;font-size:9px;font-weight:bold;color:#2a2a2a;line-height:12px;">40%</div>
<div class="a" style="left:267px;top:997.5px;width:112px;height:46px;border-radius:3px;background:linear-gradient(#a0a0a0,#888 25%,#6e6e6e 70%,#5a5a5a);"></div>
<div class="a" style="left:271px;top:1001.5px;width:105px;height:27px;border-radius:3px;background:#c6c263;box-shadow:inset 0 1px 1px #8a8a70;"></div>
<div class="a" style="left:267px;top:1031px;width:112px;text-align:center;font-size:9px;font-weight:bold;color:#2a2a2a;line-height:12px;">60%</div>
<div class="a" style="left:381px;top:997.5px;width:112px;height:46px;border-radius:3px;background:linear-gradient(#a0a0a0,#888 25%,#6e6e6e 70%,#5a5a5a);"></div>
<div class="a" style="left:385px;top:1001.5px;width:105px;height:27px;border-radius:3px;background:#c6bf2e;box-shadow:inset 0 1px 1px #8a8a70;"></div>
<div class="a" style="left:381px;top:1031px;width:112px;text-align:center;font-size:9px;font-weight:bold;color:#2a2a2a;line-height:12px;">80%</div>
<div class="a" style="left:495px;top:997.5px;width:112px;height:46px;border-radius:3px;background:linear-gradient(#1a1a1a,#2a2a2a 40%,#333);"></div>
<div class="a" style="left:499px;top:1001px;width:105px;height:27.5px;border-radius:3px;background:#c4c000;"></div>
<div class="a" style="left:495px;top:1031px;width:112px;text-align:center;font-size:9px;font-weight:bold;color:#f4f4f4;line-height:12px;">100%</div>
<div class="a" style="left:1678px;top:997px;width:35px;height:47px;border-radius:3px;background:linear-gradient(#a0a0a0,#6a6a6a);"></div>
<div class="a" style="left:1678px;top:1018.5px;width:35px;height:1px;background:#555;"></div>
<svg class="a" style="left:1678px;top:997px" width="36" height="47"><circle cx="17.5" cy="7" r="5.5" fill="#777"/>
<path d="M14 8.5 L17.5 4.8 L21 8.5 Z" fill="#222"/>
<rect x="7" y="25" width="22" height="20" rx="3" fill="#c8c8c8" stroke="#222" stroke-width="1.5"/>
<rect x="12" y="29.5" width="11" height="10" fill="#111"/></svg>
<div class="a" style="left:1715px;top:997.5px;width:33px;height:22px;border-radius:3px 3px 0 0;background:linear-gradient(#a8a8a8,#6e6e6e);"></div>
<div class="a" style="left:1749px;top:997.5px;width:33px;height:22px;border-radius:3px 3px 0 0;background:linear-gradient(#a8a8a8,#6e6e6e);"></div>
<div class="a" style="left:1783px;top:997.5px;width:33px;height:22px;border-radius:3px 3px 0 0;background:linear-gradient(#a8a8a8,#6e6e6e);"></div>
<div class="a" style="left:1817px;top:997.5px;width:33px;height:22px;border-radius:3px 3px 0 0;background:linear-gradient(#a8a8a8,#6e6e6e);"></div>
<div class="a" style="left:1851px;top:997.5px;width:33px;height:22px;border-radius:3px 3px 0 0;background:linear-gradient(#a8a8a8,#6e6e6e);"></div>
<svg class="a" style="left:1715px;top:997px" width="170" height="24"><circle cx="16.5" cy="11.5" r="7.5" fill="#8a8a8a"/><circle cx="16.5" cy="10.5" r="7" fill="#7c7c7c"/><g transform="translate(16.5,11)"><rect x="-2.5" y="-2.5" width="5" height="5" fill="#222"/></g><circle cx="50.5" cy="11.5" r="7.5" fill="#8a8a8a"/><circle cx="50.5" cy="10.5" r="7" fill="#7c7c7c"/><g transform="translate(50.5,11)"><path d="M-2 -3.5 L3.5 0 L-2 3.5 Z" fill="#222"/></g><circle cx="84.5" cy="11.5" r="7.5" fill="#8a8a8a"/><circle cx="84.5" cy="10.5" r="7" fill="#7c7c7c"/><g transform="translate(84.5,11)"><path d="M-3.5 -3 H-5 V3 H-3.5 M3.5 -3 H5 V3 H3.5" fill="none" stroke="#333" stroke-width="1.2"/><circle cx="-1.3" cy="0" r="0.6" fill="#333"/><circle cx="1.3" cy="0" r="0.6" fill="#333"/></g><circle cx="118.5" cy="11.5" r="7.5" fill="#8a8a8a"/><circle cx="118.5" cy="10.5" r="7" fill="#7c7c7c"/><g transform="translate(118.5,11)"><path d="M0 0 C-2 -3 -5 -2.5 -5 0 C-5 2.5 -2 3 0 0 C2 -3 5 -2.5 5 0 C5 2.5 2 3 0 0" fill="none" stroke="#333" stroke-width="1.4"/></g><circle cx="152.5" cy="11.5" r="7.5" fill="#8a8a8a"/><circle cx="152.5" cy="10.5" r="7" fill="#7c7c7c"/><g transform="translate(152.5,11)"><path d="M-3.5 -0.5 A3.6 3.6 0 0 1 3 -2 M3.5 0.5 A3.6 3.6 0 0 1 -3 2" fill="none" stroke="#333" stroke-width="1.4"/><path d="M1.5 -4 L4 -1.5 L1 -1 Z M-1.5 4 L-4 1.5 L-1 1 Z" fill="#333"/></g></svg>
<div class="a" style="left:1885px;top:997px;width:35px;height:22px;background:#222;"></div>
<svg class="a" style="left:1885px;top:997px" width="35" height="22"><circle cx="17.5" cy="11" r="7.5" fill="#2c2c2c"/></svg>
<div class="a" style="left:1715px;top:1020px;width:102px;height:24px;border-radius:3px 0 0 0;background:linear-gradient(#b0b0b0,#7a7a7a);"></div>
<div class="a" style="left:1817px;top:1020px;width:103px;height:24px;border-radius:0 3px 0 0;background:linear-gradient(#b0b0b0,#7a7a7a);border-left:1px solid #666;"></div>
<svg class="a" style="left:1715px;top:1020px" width="205" height="24">
<circle cx="23" cy="12" r="7" fill="#8c8c8c"/><path d="M24 8.5 L21 12 L24 15.5 M27 8.5 L24 12 L27 15.5" fill="none" stroke="#333" stroke-width="1.2"/>
<text x="43" y="18.6" font-size="16" font-weight="bold" fill="#2a2a2a" textLength="37.5" lengthAdjust="spacingAndGlyphs">Back</text>
<text x="122.5" y="18.6" font-size="16" font-weight="bold" fill="#2a2a2a" textLength="38.5" lengthAdjust="spacingAndGlyphs">Next</text>
<circle cx="183" cy="12" r="7" fill="#8c8c8c"/><path d="M179 8.5 L182 12 L179 15.5 M182 8.5 L185 12 L182 15.5" fill="none" stroke="#333" stroke-width="1.2"/>
</svg>
<div class="a" style="left:1119px;top:82px;width:791.4px;height:635.7px;border:8px solid #ffff00;background:#333;"></div>
<svg class="a" style="left:0;top:0" width="1920" height="1044"><text x="1514.5" y="110" font-size="16.5" fill="#dcdcdc" text-anchor="middle" font-weight="normal" >CIE 1931 xy</text><rect x="1160" y="116.5" width="739" height="561.2" fill="#222"/></svg>
<svg id="fallback" class="a" style="left:0;top:0" width="1920" height="1044"><defs><clipPath id="lc"><path d="M1313.0 673.6 L1313.0 673.6 L1312.9 673.6 L1312.9 673.6 L1312.8 673.6 L1312.7 673.6 L1312.6 673.7 L1312.5 673.7 L1312.4 673.7 L1312.2 673.7 L1312.1 673.7 L1311.9 673.7 L1311.7 673.7 L1311.5 673.7 L1311.2 673.6 L1310.9 673.6 L1310.7 673.5 L1310.4 673.4 L1310.2 673.3 L1310.0 673.2 L1309.7 673.0 L1309.4 672.9 L1309.1 672.7 L1308.8 672.5 L1308.4 672.3 L1308.1 672.1 L1307.6 671.8 L1307.2 671.5 L1306.7 671.2 L1306.2 670.9 L1305.7 670.5 L1305.1 670.1 L1304.5 669.7 L1303.9 669.2 L1303.2 668.8 L1302.4 668.3 L1301.6 667.7 L1300.7 667.1 L1299.8 666.5 L1298.8 665.8 L1297.7 665.1 L1296.5 664.3 L1295.3 663.5 L1294.1 662.7 L1292.7 661.7 L1291.3 660.7 L1289.8 659.6 L1288.2 658.4 L1286.5 657.1 L1284.8 655.7 L1283.1 654.2 L1281.2 652.4 L1279.1 650.3 L1276.8 647.9 L1274.4 645.1 L1271.9 642.0 L1269.1 638.4 L1266.2 634.3 L1263.1 629.9 L1259.8 624.8 L1256.3 619.0 L1252.6 612.5 L1248.7 605.4 L1244.6 597.4 L1240.2 588.4 L1235.6 578.6 L1230.6 567.8 L1225.5 556.0 L1220.4 543.1 L1215.3 529.0 L1210.1 513.8 L1205.0 497.5 L1199.9 480.3 L1194.9 461.9 L1189.8 442.4 L1185.0 422.2 L1180.6 401.8 L1176.6 381.1 L1172.9 359.9 L1169.7 338.6 L1167.2 318.0 L1165.3 297.8 L1163.9 277.9 L1163.2 258.7 L1163.4 240.4 L1164.4 223.0 L1166.2 206.4 L1168.8 190.8 L1172.2 176.8 L1176.5 164.3 L1181.8 153.2 L1187.7 143.5 L1194.1 135.6 L1201.2 129.7 L1208.9 125.5 L1217.0 122.7 L1225.3 121.1 L1233.8 120.8 L1242.5 121.9 L1251.5 123.9 L1260.3 126.2 L1269.3 128.9 L1278.3 132.3 L1287.2 136.0 L1296.0 139.7 L1304.6 143.5 L1313.0 147.5 L1321.3 151.6 L1329.5 155.9 L1337.7 160.3 L1345.8 164.7 L1353.8 169.4 L1361.8 174.1 L1369.8 178.9 L1377.8 183.9 L1385.7 189.0 L1393.6 194.1 L1401.5 199.3 L1409.4 204.6 L1417.2 210.0 L1425.1 215.4 L1433.0 220.9 L1440.8 226.5 L1448.7 232.1 L1456.5 237.7 L1464.4 243.4 L1472.3 249.1 L1480.1 254.9 L1488.0 260.7 L1495.8 266.4 L1503.6 272.3 L1511.5 278.1 L1519.3 283.9 L1527.1 289.7 L1534.9 295.5 L1542.6 301.3 L1550.3 307.1 L1558.0 312.9 L1565.7 318.7 L1573.3 324.4 L1580.8 330.2 L1588.3 335.8 L1595.8 341.4 L1603.2 347.0 L1610.5 352.6 L1617.7 358.0 L1624.9 363.4 L1631.9 368.7 L1638.9 374.0 L1645.7 379.2 L1652.5 384.2 L1659.1 389.2 L1665.6 394.1 L1671.9 398.9 L1678.1 403.6 L1684.2 408.2 L1690.0 412.6 L1695.6 416.8 L1700.9 420.9 L1706.1 424.8 L1711.2 428.6 L1716.1 432.3 L1720.8 435.9 L1725.4 439.4 L1729.8 442.7 L1733.9 445.8 L1737.9 448.8 L1741.6 451.6 L1745.2 454.3 L1748.6 456.8 L1751.8 459.3 L1754.9 461.6 L1757.8 463.8 L1760.5 465.8 L1763.1 467.8 L1765.5 469.6 L1767.8 471.4 L1770.0 473.0 L1772.1 474.6 L1774.0 476.0 L1775.8 477.4 L1777.6 478.7 L1779.2 479.9 L1780.8 481.1 L1782.3 482.2 L1783.7 483.3 L1785.1 484.4 L1786.4 485.4 L1787.6 486.3 L1788.8 487.2 L1789.9 488.1 L1791.0 488.9 L1792.0 489.6 L1793.0 490.4 L1793.9 491.1 L1794.7 491.7 L1795.5 492.3 L1796.3 492.8 L1796.9 493.3 L1797.6 493.8 L1798.1 494.3 L1798.7 494.7 L1799.2 495.1 L1799.7 495.4 L1800.1 495.8 L1800.6 496.1 L1801.0 496.4 L1801.4 496.7 L1801.6 496.9Z"/></clipPath><clipPath id="tc"><path d="M1757.7 463.6 L1392.9 217.0 L1291.8 636.9Z"/></clipPath><clipPath id="bx"><rect x="1643.5" y="125.5" width="246.8" height="207.9"/></clipPath><clipPath id="ilc"><path d="M437.4 2481.1 L437.1 2481.1 L436.7 2481.2 L436.3 2481.2 L435.8 2481.3 L435.3 2481.4 L434.8 2481.5 L434.2 2481.7 L433.5 2481.8 L432.7 2481.8 L431.8 2481.9 L430.8 2481.9 L429.7 2481.8 L428.3 2481.6 L426.8 2481.3 L425.3 2481.0 L423.8 2480.5 L422.4 2479.9 L421.0 2479.3 L419.7 2478.5 L418.2 2477.6 L416.6 2476.6 L414.9 2475.5 L413.0 2474.3 L411.0 2472.9 L408.8 2471.3 L406.4 2469.7 L403.8 2467.8 L401.0 2465.8 L398.2 2463.6 L395.2 2461.3 L392.0 2458.8 L388.5 2456.1 L384.8 2453.2 L380.8 2450.3 L376.5 2447.1 L371.8 2443.6 L366.8 2439.9 L361.3 2435.9 L355.5 2431.6 L349.4 2427.0 L342.8 2422.2 L336.0 2417.2 L328.7 2411.7 L320.9 2405.7 L312.7 2399.2 L304.1 2392.3 L295.0 2384.7 L285.5 2376.1 L275.7 2367.1 L265.6 2357.4 L254.8 2346.4 L242.9 2332.9 L230.0 2317.3 L216.1 2299.9 L201.4 2280.0 L185.6 2256.9 L168.8 2231.1 L151.2 2202.7 L132.4 2170.6 L112.4 2133.7 L91.2 2092.3 L68.8 2046.7 L45.2 1996.0 L20.2 1939.1 L-6.6 1876.2 L-35.1 1807.7 L-64.3 1732.7 L-93.5 1650.5 L-122.8 1560.7 L-152.4 1463.7 L-182.0 1360.2 L-211.0 1250.6 L-239.9 1133.5 L-268.7 1009.2 L-296.3 880.7 L-321.4 751.1 L-344.3 619.2 L-365.5 484.1 L-383.9 349.1 L-398.4 217.7 L-409.4 89.4 L-417.3 -37.3 L-421.1 -159.9 L-420.1 -276.2 L-414.4 -386.9 L-404.2 -493.0 L-389.3 -591.7 L-369.7 -680.8 L-344.8 -760.4 L-314.8 -831.5 L-280.8 -892.8 L-243.9 -943.1 L-203.5 -981.1 L-159.3 -1007.8 L-112.8 -1025.2 L-65.4 -1035.5 L-16.8 -1037.5 L33.4 -1030.6 L84.5 -1018.1 L135.4 -1003.3 L186.5 -986.0 L238.1 -964.6 L289.4 -941.0 L339.7 -917.0 L388.8 -892.8 L437.0 -867.4 L484.6 -841.2 L531.9 -814.2 L578.7 -786.4 L625.1 -757.8 L671.1 -728.4 L717.0 -698.4 L762.7 -667.5 L808.3 -636.0 L853.7 -603.7 L899.1 -571.0 L944.3 -537.8 L989.4 -504.0 L1034.5 -469.8 L1079.5 -435.2 L1124.5 -400.3 L1169.6 -364.9 L1214.6 -329.2 L1259.6 -293.3 L1304.6 -257.1 L1349.7 -220.6 L1394.7 -184.0 L1439.6 -147.3 L1484.6 -110.5 L1529.5 -73.5 L1574.4 -36.5 L1619.1 0.5 L1663.8 37.6 L1708.4 74.6 L1752.8 111.7 L1797.0 148.6 L1841.1 185.4 L1884.9 222.1 L1928.6 258.7 L1971.9 295.0 L2014.8 331.1 L2057.5 366.9 L2099.9 402.5 L2141.7 437.6 L2183.1 472.4 L2224.1 506.7 L2264.6 540.7 L2304.4 574.1 L2343.6 606.9 L2382.3 639.3 L2420.2 671.1 L2457.3 702.2 L2493.6 732.7 L2529.2 762.7 L2563.8 791.8 L2597.2 819.9 L2629.2 846.7 L2660.0 872.5 L2689.8 897.5 L2718.7 921.7 L2746.8 945.3 L2774.1 968.2 L2800.3 990.3 L2825.4 1011.2 L2849.1 1031.1 L2871.7 1049.9 L2893.2 1067.9 L2913.7 1085.0 L2933.2 1101.3 L2951.7 1116.8 L2969.2 1131.5 L2985.8 1145.5 L3001.5 1158.7 L3016.2 1171.1 L3030.1 1182.8 L3043.3 1193.9 L3055.8 1204.4 L3067.6 1214.2 L3078.6 1223.4 L3089.2 1232.3 L3099.2 1240.6 L3108.6 1248.5 L3117.5 1255.9 L3126.0 1263.1 L3134.3 1270.0 L3142.1 1276.6 L3149.6 1283.0 L3156.8 1289.0 L3163.6 1294.7 L3170.1 1300.2 L3176.2 1305.3 L3182.0 1310.2 L3187.5 1314.8 L3192.7 1319.2 L3197.6 1323.3 L3202.1 1327.1 L3206.3 1330.6 L3210.1 1333.8 L3213.7 1336.7 L3217.0 1339.6 L3220.2 1342.2 L3223.2 1344.7 L3225.9 1347.1 L3228.5 1349.2 L3231.1 1351.4 L3233.5 1353.4 L3235.6 1355.2 L3237.1 1356.4Z"/></clipPath><clipPath id="itc"><path d="M2985.4 1144.4 L895.2 -425.4 L315.9 2247.6Z"/></clipPath><linearGradient id="fb0" gradientUnits="userSpaceOnUse" x1="1200.8" y1="0" x2="1263.9" y2="0"><stop offset="0.000" stop-color="#009606"/><stop offset="1.000" stop-color="#009600"/></linearGradient><linearGradient id="fb1" gradientUnits="userSpaceOnUse" x1="1186.2" y1="0" x2="1287.5" y2="0"><stop offset="0.000" stop-color="#009609"/><stop offset="0.500" stop-color="#009603"/><stop offset="1.000" stop-color="#009600"/></linearGradient><linearGradient id="fb2" gradientUnits="userSpaceOnUse" x1="1178.6" y1="0" x2="1304.8" y2="0"><stop offset="0.000" stop-color="#00960b"/><stop offset="0.500" stop-color="#009604"/><stop offset="1.000" stop-color="#009600"/></linearGradient><linearGradient id="fb3" gradientUnits="userSpaceOnUse" x1="1173.1" y1="0" x2="1320.6" y2="0"><stop offset="0.000" stop-color="#00960d"/><stop offset="0.500" stop-color="#009605"/><stop offset="1.000" stop-color="#009600"/></linearGradient><linearGradient id="fb4" gradientUnits="userSpaceOnUse" x1="1168.8" y1="0" x2="1335.0" y2="0"><stop offset="0.000" stop-color="#00960e"/><stop offset="0.333" stop-color="#009608"/><stop offset="0.667" stop-color="#009602"/><stop offset="1.000" stop-color="#009600"/></linearGradient><linearGradient id="fb5" gradientUnits="userSpaceOnUse" x1="1165.3" y1="0" x2="1348.4" y2="0"><stop offset="0.000" stop-color="#009610"/><stop offset="0.333" stop-color="#00960a"/><stop offset="0.667" stop-color="#009602"/><stop offset="1.000" stop-color="#009600"/></linearGradient><linearGradient id="fb6" gradientUnits="userSpaceOnUse" x1="1162.1" y1="0" x2="1361.1" y2="0"><stop offset="0.000" stop-color="#009612"/><stop offset="0.333" stop-color="#00960b"/><stop offset="0.667" stop-color="#009603"/><stop offset="1.000" stop-color="#009600"/></linearGradient><linearGradient id="fb7" gradientUnits="userSpaceOnUse" x1="1159.7" y1="0" x2="1373.1" y2="0"><stop offset="0.000" stop-color="#009614"/><stop offset="0.250" stop-color="#00960e"/><stop offset="0.500" stop-color="#009608"/><stop offset="0.750" stop-color="#009601"/><stop offset="1.000" stop-color="#009600"/></linearGradient><linearGradient id="fb8" gradientUnits="userSpaceOnUse" x1="1157.5" y1="0" x2="1384.7" y2="0"><stop offset="0.000" stop-color="#009615"/><stop offset="0.250" stop-color="#00960f"/><stop offset="0.500" stop-color="#009609"/><stop offset="0.750" stop-color="#009601"/><stop offset="1.000" stop-color="#009600"/></linearGradient><linearGradient id="fb9" gradientUnits="userSpaceOnUse" x1="1155.8" y1="0" x2="1395.9" y2="0"><stop offset="0.000" stop-color="#009617"/><stop offset="0.250" stop-color="#009611"/><stop offset="0.500" stop-color="#00960a"/><stop offset="0.750" stop-color="#009602"/><stop offset="1.000" stop-color="#009600"/></linearGradient><linearGradient id="fb10" gradientUnits="userSpaceOnUse" x1="1154.3" y1="0" x2="1406.7" y2="0"><stop offset="0.000" stop-color="#009619"/><stop offset="0.250" stop-color="#009612"/><stop offset="0.500" stop-color="#00960a"/><stop offset="0.750" stop-color="#009602"/><stop offset="1.000" stop-color="#049600"/></linearGradient><linearGradient id="fb11" gradientUnits="userSpaceOnUse" x1="1153.2" y1="0" x2="1417.3" y2="0"><stop offset="0.000" stop-color="#00961b"/><stop offset="0.250" stop-color="#009613"/><stop offset="0.500" stop-color="#00960b"/><stop offset="0.750" stop-color="#009603"/><stop offset="1.000" stop-color="#0a9600"/></linearGradient><linearGradient id="fb12" gradientUnits="userSpaceOnUse" x1="1152.1" y1="0" x2="1427.6" y2="0"><stop offset="0.000" stop-color="#00961c"/><stop offset="0.200" stop-color="#009616"/><stop offset="0.400" stop-color="#009610"/><stop offset="0.600" stop-color="#009609"/><stop offset="0.800" stop-color="#009601"/><stop offset="1.000" stop-color="#109600"/></linearGradient><linearGradient id="fb13" gradientUnits="userSpaceOnUse" x1="1151.3" y1="0" x2="1437.8" y2="0"><stop offset="0.000" stop-color="#00961e"/><stop offset="0.200" stop-color="#009618"/><stop offset="0.400" stop-color="#009611"/><stop offset="0.600" stop-color="#00960a"/><stop offset="0.800" stop-color="#009601"/><stop offset="1.000" stop-color="#179600"/></linearGradient><linearGradient id="fb14" gradientUnits="userSpaceOnUse" x1="1150.6" y1="0" x2="1447.8" y2="0"><stop offset="0.000" stop-color="#009620"/><stop offset="0.200" stop-color="#00961a"/><stop offset="0.400" stop-color="#009613"/><stop offset="0.600" stop-color="#00960b"/><stop offset="0.800" stop-color="#009602"/><stop offset="1.000" stop-color="#1e9600"/></linearGradient><linearGradient id="fb15" gradientUnits="userSpaceOnUse" x1="1150.1" y1="0" x2="1457.7" y2="0"><stop offset="0.000" stop-color="#009622"/><stop offset="0.200" stop-color="#00961b"/><stop offset="0.400" stop-color="#009614"/><stop offset="0.600" stop-color="#00960c"/><stop offset="0.800" stop-color="#039602"/><stop offset="1.000" stop-color="#259600"/></linearGradient><linearGradient id="fb16" gradientUnits="userSpaceOnUse" x1="1149.7" y1="0" x2="1467.4" y2="0"><stop offset="0.000" stop-color="#009624"/><stop offset="0.200" stop-color="#00961d"/><stop offset="0.400" stop-color="#009615"/><stop offset="0.600" stop-color="#00960d"/><stop offset="0.800" stop-color="#089603"/><stop offset="1.000" stop-color="#2d9600"/></linearGradient><linearGradient id="fb17" gradientUnits="userSpaceOnUse" x1="1149.4" y1="0" x2="1477.1" y2="0"><stop offset="0.000" stop-color="#009626"/><stop offset="0.200" stop-color="#00961f"/><stop offset="0.400" stop-color="#009617"/><stop offset="0.600" stop-color="#00960e"/><stop offset="0.800" stop-color="#0d9603"/><stop offset="1.000" stop-color="#359600"/></linearGradient><linearGradient id="fb18" gradientUnits="userSpaceOnUse" x1="1149.3" y1="0" x2="1486.7" y2="0"><stop offset="0.000" stop-color="#009628"/><stop offset="0.167" stop-color="#009622"/><stop offset="0.333" stop-color="#00961b"/><stop offset="0.500" stop-color="#009614"/><stop offset="0.667" stop-color="#00960b"/><stop offset="0.833" stop-color="#1a9602"/><stop offset="1.000" stop-color="#3d9600"/></linearGradient><linearGradient id="fb19" gradientUnits="userSpaceOnUse" x1="1149.2" y1="0" x2="1496.3" y2="0"><stop offset="0.000" stop-color="#00962a"/><stop offset="0.167" stop-color="#009624"/><stop offset="0.333" stop-color="#00961d"/><stop offset="0.500" stop-color="#009615"/><stop offset="0.667" stop-color="#00960c"/><stop offset="0.833" stop-color="#209602"/><stop offset="1.000" stop-color="#469600"/></linearGradient><linearGradient id="fb20" gradientUnits="userSpaceOnUse" x1="1149.4" y1="0" x2="1505.8" y2="0"><stop offset="0.000" stop-color="#00962c"/><stop offset="0.167" stop-color="#009626"/><stop offset="0.333" stop-color="#00961f"/><stop offset="0.500" stop-color="#009616"/><stop offset="0.667" stop-color="#03960d"/><stop offset="0.833" stop-color="#279603"/><stop offset="1.000" stop-color="#509600"/></linearGradient><linearGradient id="fb21" gradientUnits="userSpaceOnUse" x1="1149.6" y1="0" x2="1515.3" y2="0"><stop offset="0.000" stop-color="#00962e"/><stop offset="0.167" stop-color="#009628"/><stop offset="0.333" stop-color="#009620"/><stop offset="0.500" stop-color="#009618"/><stop offset="0.667" stop-color="#08960e"/><stop offset="0.833" stop-color="#2e9604"/><stop offset="1.000" stop-color="#5a9600"/></linearGradient><linearGradient id="fb22" gradientUnits="userSpaceOnUse" x1="1149.9" y1="0" x2="1524.7" y2="0"><stop offset="0.000" stop-color="#009631"/><stop offset="0.167" stop-color="#00962a"/><stop offset="0.333" stop-color="#009622"/><stop offset="0.500" stop-color="#00961a"/><stop offset="0.667" stop-color="#0d9610"/><stop offset="0.833" stop-color="#369604"/><stop offset="1.000" stop-color="#669600"/></linearGradient><linearGradient id="fb23" gradientUnits="userSpaceOnUse" x1="1150.3" y1="0" x2="1534.1" y2="0"><stop offset="0.000" stop-color="#009633"/><stop offset="0.167" stop-color="#00962c"/><stop offset="0.333" stop-color="#009624"/><stop offset="0.500" stop-color="#00961b"/><stop offset="0.667" stop-color="#129611"/><stop offset="0.833" stop-color="#3e9605"/><stop offset="1.000" stop-color="#729600"/></linearGradient><linearGradient id="fb24" gradientUnits="userSpaceOnUse" x1="1150.8" y1="0" x2="1543.5" y2="0"><stop offset="0.000" stop-color="#009635"/><stop offset="0.143" stop-color="#00962f"/><stop offset="0.286" stop-color="#009629"/><stop offset="0.429" stop-color="#009621"/><stop offset="0.571" stop-color="#009619"/><stop offset="0.714" stop-color="#24960f"/><stop offset="0.857" stop-color="#4e9603"/><stop offset="1.000" stop-color="#7f9600"/></linearGradient><linearGradient id="fb25" gradientUnits="userSpaceOnUse" x1="1151.3" y1="0" x2="1552.8" y2="0"><stop offset="0.000" stop-color="#009638"/><stop offset="0.143" stop-color="#009632"/><stop offset="0.286" stop-color="#00962b"/><stop offset="0.429" stop-color="#009623"/><stop offset="0.571" stop-color="#05961a"/><stop offset="0.714" stop-color="#2b9610"/><stop offset="0.857" stop-color="#589604"/><stop offset="1.000" stop-color="#8d9600"/></linearGradient><linearGradient id="fb26" gradientUnits="userSpaceOnUse" x1="1152.0" y1="0" x2="1562.1" y2="0"><stop offset="0.000" stop-color="#00963a"/><stop offset="0.143" stop-color="#009634"/><stop offset="0.286" stop-color="#00962d"/><stop offset="0.429" stop-color="#009625"/><stop offset="0.571" stop-color="#09961c"/><stop offset="0.714" stop-color="#339611"/><stop offset="0.857" stop-color="#639605"/><stop offset="1.000" stop-color="#969000"/></linearGradient><linearGradient id="fb27" gradientUnits="userSpaceOnUse" x1="1152.7" y1="0" x2="1571.4" y2="0"><stop offset="0.000" stop-color="#00963d"/><stop offset="0.143" stop-color="#009637"/><stop offset="0.286" stop-color="#009630"/><stop offset="0.429" stop-color="#009627"/><stop offset="0.571" stop-color="#0f961e"/><stop offset="0.714" stop-color="#3b9613"/><stop offset="0.857" stop-color="#6f9606"/><stop offset="1.000" stop-color="#968200"/></linearGradient><linearGradient id="fb28" gradientUnits="userSpaceOnUse" x1="1153.4" y1="0" x2="1580.7" y2="0"><stop offset="0.000" stop-color="#009640"/><stop offset="0.143" stop-color="#009639"/><stop offset="0.286" stop-color="#009632"/><stop offset="0.429" stop-color="#00962a"/><stop offset="0.571" stop-color="#149620"/><stop offset="0.714" stop-color="#439614"/><stop offset="0.857" stop-color="#7b9606"/><stop offset="1.000" stop-color="#967500"/></linearGradient><linearGradient id="fb29" gradientUnits="userSpaceOnUse" x1="1154.2" y1="0" x2="1590.0" y2="0"><stop offset="0.000" stop-color="#009643"/><stop offset="0.143" stop-color="#00963c"/><stop offset="0.286" stop-color="#009635"/><stop offset="0.429" stop-color="#00962c"/><stop offset="0.571" stop-color="#1a9622"/><stop offset="0.714" stop-color="#4c9616"/><stop offset="0.857" stop-color="#899607"/><stop offset="1.000" stop-color="#966a00"/></linearGradient><linearGradient id="fb30" gradientUnits="userSpaceOnUse" x1="1155.1" y1="0" x2="1599.3" y2="0"><stop offset="0.000" stop-color="#009646"/><stop offset="0.143" stop-color="#00963f"/><stop offset="0.286" stop-color="#009638"/><stop offset="0.429" stop-color="#00962f"/><stop offset="0.571" stop-color="#209624"/><stop offset="0.714" stop-color="#569618"/><stop offset="0.857" stop-color="#969408"/><stop offset="1.000" stop-color="#966000"/></linearGradient><linearGradient id="fb31" gradientUnits="userSpaceOnUse" x1="1156.0" y1="0" x2="1608.5" y2="0"><stop offset="0.000" stop-color="#009649"/><stop offset="0.125" stop-color="#009643"/><stop offset="0.250" stop-color="#00963d"/><stop offset="0.375" stop-color="#009635"/><stop offset="0.500" stop-color="#0e962c"/><stop offset="0.625" stop-color="#3b9622"/><stop offset="0.750" stop-color="#719616"/><stop offset="0.875" stop-color="#967e06"/><stop offset="1.000" stop-color="#965600"/></linearGradient><linearGradient id="fb32" gradientUnits="userSpaceOnUse" x1="1157.1" y1="0" x2="1617.8" y2="0"><stop offset="0.000" stop-color="#00964c"/><stop offset="0.125" stop-color="#009646"/><stop offset="0.250" stop-color="#009640"/><stop offset="0.375" stop-color="#009638"/><stop offset="0.500" stop-color="#13962f"/><stop offset="0.625" stop-color="#449625"/><stop offset="0.750" stop-color="#7f9618"/><stop offset="0.875" stop-color="#967106"/><stop offset="1.000" stop-color="#964e00"/></linearGradient><linearGradient id="fb33" gradientUnits="userSpaceOnUse" x1="1158.1" y1="0" x2="1627.1" y2="0"><stop offset="0.000" stop-color="#00964f"/><stop offset="0.125" stop-color="#00964a"/><stop offset="0.250" stop-color="#009643"/><stop offset="0.375" stop-color="#00963b"/><stop offset="0.500" stop-color="#199632"/><stop offset="0.625" stop-color="#4e9627"/><stop offset="0.750" stop-color="#8d961a"/><stop offset="0.875" stop-color="#966606"/><stop offset="1.000" stop-color="#964600"/></linearGradient><linearGradient id="fb34" gradientUnits="userSpaceOnUse" x1="1159.2" y1="0" x2="1636.3" y2="0"><stop offset="0.000" stop-color="#009653"/><stop offset="0.125" stop-color="#00964d"/><stop offset="0.250" stop-color="#009647"/><stop offset="0.375" stop-color="#00963f"/><stop offset="0.500" stop-color="#209635"/><stop offset="0.625" stop-color="#58962a"/><stop offset="0.750" stop-color="#968f1b"/><stop offset="0.875" stop-color="#965c07"/><stop offset="1.000" stop-color="#963f00"/></linearGradient><linearGradient id="fb35" gradientUnits="userSpaceOnUse" x1="1160.4" y1="0" x2="1645.6" y2="0"><stop offset="0.000" stop-color="#009657"/><stop offset="0.125" stop-color="#009651"/><stop offset="0.250" stop-color="#00964a"/><stop offset="0.375" stop-color="#009642"/><stop offset="0.500" stop-color="#279639"/><stop offset="0.625" stop-color="#63962d"/><stop offset="0.750" stop-color="#96811a"/><stop offset="0.875" stop-color="#965307"/><stop offset="1.000" stop-color="#963800"/></linearGradient><linearGradient id="fb36" gradientUnits="userSpaceOnUse" x1="1161.7" y1="0" x2="1654.9" y2="0"><stop offset="0.000" stop-color="#00965b"/><stop offset="0.125" stop-color="#009655"/><stop offset="0.250" stop-color="#00964e"/><stop offset="0.375" stop-color="#009646"/><stop offset="0.500" stop-color="#2e963d"/><stop offset="0.625" stop-color="#709631"/><stop offset="0.750" stop-color="#96741a"/><stop offset="0.875" stop-color="#964a07"/><stop offset="1.000" stop-color="#963200"/></linearGradient><linearGradient id="fb37" gradientUnits="userSpaceOnUse" x1="1162.9" y1="0" x2="1664.2" y2="0"><stop offset="0.000" stop-color="#00965f"/><stop offset="0.125" stop-color="#009659"/><stop offset="0.250" stop-color="#009652"/><stop offset="0.375" stop-color="#00964a"/><stop offset="0.500" stop-color="#379641"/><stop offset="0.625" stop-color="#7d9634"/><stop offset="0.750" stop-color="#966819"/><stop offset="0.875" stop-color="#964307"/><stop offset="1.000" stop-color="#962c00"/></linearGradient><linearGradient id="fb38" gradientUnits="userSpaceOnUse" x1="1164.2" y1="0" x2="1673.4" y2="0"><stop offset="0.000" stop-color="#009663"/><stop offset="0.125" stop-color="#00965d"/><stop offset="0.250" stop-color="#009657"/><stop offset="0.375" stop-color="#03964f"/><stop offset="0.500" stop-color="#409645"/><stop offset="0.625" stop-color="#8d9639"/><stop offset="0.750" stop-color="#965d19"/><stop offset="0.875" stop-color="#963b07"/><stop offset="1.000" stop-color="#962700"/></linearGradient><linearGradient id="fb39" gradientUnits="userSpaceOnUse" x1="1165.6" y1="0" x2="1682.7" y2="0"><stop offset="0.000" stop-color="#009667"/><stop offset="0.111" stop-color="#009663"/><stop offset="0.222" stop-color="#00965d"/><stop offset="0.333" stop-color="#009656"/><stop offset="0.444" stop-color="#2b964f"/><stop offset="0.556" stop-color="#6c9645"/><stop offset="0.667" stop-color="#96762c"/><stop offset="0.778" stop-color="#964b14"/><stop offset="0.889" stop-color="#963206"/><stop offset="1.000" stop-color="#962200"/></linearGradient><linearGradient id="fb40" gradientUnits="userSpaceOnUse" x1="1167.0" y1="0" x2="1691.9" y2="0"><stop offset="0.000" stop-color="#00966c"/><stop offset="0.111" stop-color="#009668"/><stop offset="0.222" stop-color="#009662"/><stop offset="0.333" stop-color="#00965c"/><stop offset="0.444" stop-color="#339654"/><stop offset="0.556" stop-color="#7a964a"/><stop offset="0.667" stop-color="#96692b"/><stop offset="0.778" stop-color="#964314"/><stop offset="0.889" stop-color="#962c06"/><stop offset="1.000" stop-color="#961d00"/></linearGradient><linearGradient id="fb41" gradientUnits="userSpaceOnUse" x1="1168.5" y1="0" x2="1701.2" y2="0"><stop offset="0.000" stop-color="#009671"/><stop offset="0.111" stop-color="#00966d"/><stop offset="0.222" stop-color="#009668"/><stop offset="0.333" stop-color="#009661"/><stop offset="0.444" stop-color="#3d965a"/><stop offset="0.556" stop-color="#8a9650"/><stop offset="0.667" stop-color="#965e2a"/><stop offset="0.778" stop-color="#963b13"/><stop offset="0.889" stop-color="#962706"/><stop offset="1.000" stop-color="#961900"/></linearGradient><linearGradient id="fb42" gradientUnits="userSpaceOnUse" x1="1170.0" y1="0" x2="1710.5" y2="0"><stop offset="0.000" stop-color="#009676"/><stop offset="0.111" stop-color="#009672"/><stop offset="0.222" stop-color="#00966d"/><stop offset="0.333" stop-color="#059667"/><stop offset="0.444" stop-color="#479660"/><stop offset="0.556" stop-color="#969153"/><stop offset="0.667" stop-color="#965429"/><stop offset="0.778" stop-color="#963413"/><stop offset="0.889" stop-color="#962106"/><stop offset="1.000" stop-color="#961500"/></linearGradient><linearGradient id="fb43" gradientUnits="userSpaceOnUse" x1="1171.6" y1="0" x2="1719.7" y2="0"><stop offset="0.000" stop-color="#00967c"/><stop offset="0.111" stop-color="#009678"/><stop offset="0.222" stop-color="#009674"/><stop offset="0.333" stop-color="#0b966e"/><stop offset="0.444" stop-color="#529667"/><stop offset="0.556" stop-color="#968050"/><stop offset="0.667" stop-color="#964a28"/><stop offset="0.778" stop-color="#962e13"/><stop offset="0.889" stop-color="#961d06"/><stop offset="1.000" stop-color="#961100"/></linearGradient><linearGradient id="fb44" gradientUnits="userSpaceOnUse" x1="1173.2" y1="0" x2="1729.0" y2="0"><stop offset="0.000" stop-color="#009682"/><stop offset="0.111" stop-color="#00967e"/><stop offset="0.222" stop-color="#00967a"/><stop offset="0.333" stop-color="#129675"/><stop offset="0.444" stop-color="#5f966f"/><stop offset="0.556" stop-color="#96724d"/><stop offset="0.667" stop-color="#964227"/><stop offset="0.778" stop-color="#962813"/><stop offset="0.889" stop-color="#961806"/><stop offset="1.000" stop-color="#960d00"/></linearGradient><linearGradient id="fb45" gradientUnits="userSpaceOnUse" x1="1174.9" y1="0" x2="1738.3" y2="0"><stop offset="0.000" stop-color="#009688"/><stop offset="0.111" stop-color="#009685"/><stop offset="0.222" stop-color="#009682"/><stop offset="0.333" stop-color="#19967d"/><stop offset="0.444" stop-color="#6d9678"/><stop offset="0.556" stop-color="#96654b"/><stop offset="0.667" stop-color="#963a26"/><stop offset="0.778" stop-color="#962213"/><stop offset="0.889" stop-color="#961406"/><stop offset="1.000" stop-color="#960a00"/></linearGradient><linearGradient id="fb46" gradientUnits="userSpaceOnUse" x1="1176.6" y1="0" x2="1747.5" y2="0"><stop offset="0.000" stop-color="#00968f"/><stop offset="0.100" stop-color="#00968d"/><stop offset="0.200" stop-color="#00968a"/><stop offset="0.300" stop-color="#0b9687"/><stop offset="0.400" stop-color="#559684"/><stop offset="0.500" stop-color="#967b67"/><stop offset="0.600" stop-color="#964638"/><stop offset="0.700" stop-color="#962b1f"/><stop offset="0.800" stop-color="#961a10"/><stop offset="0.900" stop-color="#960f05"/><stop offset="1.000" stop-color="#960600"/></linearGradient><linearGradient id="fb47" gradientUnits="userSpaceOnUse" x1="1178.4" y1="0" x2="1756.9" y2="0"><stop offset="0.000" stop-color="#009696"/><stop offset="0.100" stop-color="#009694"/><stop offset="0.200" stop-color="#009693"/><stop offset="0.300" stop-color="#129691"/><stop offset="0.400" stop-color="#63968e"/><stop offset="0.500" stop-color="#966c63"/><stop offset="0.600" stop-color="#963d36"/><stop offset="0.700" stop-color="#96251e"/><stop offset="0.800" stop-color="#961510"/><stop offset="0.900" stop-color="#960b06"/><stop offset="1.000" stop-color="#960300"/></linearGradient><linearGradient id="fb48" gradientUnits="userSpaceOnUse" x1="1180.2" y1="0" x2="1766.1" y2="0"><stop offset="0.000" stop-color="#008f96"/><stop offset="0.100" stop-color="#009096"/><stop offset="0.200" stop-color="#009096"/><stop offset="0.300" stop-color="#1a9196"/><stop offset="0.400" stop-color="#709296"/><stop offset="0.500" stop-color="#965e60"/><stop offset="0.600" stop-color="#963535"/><stop offset="0.700" stop-color="#961f1e"/><stop offset="0.800" stop-color="#961110"/><stop offset="0.900" stop-color="#960706"/><stop offset="1.000" stop-color="#960000"/></linearGradient><linearGradient id="fb49" gradientUnits="userSpaceOnUse" x1="1182.1" y1="0" x2="1775.4" y2="0"><stop offset="0.000" stop-color="#008896"/><stop offset="0.100" stop-color="#008896"/><stop offset="0.200" stop-color="#008796"/><stop offset="0.300" stop-color="#208796"/><stop offset="0.400" stop-color="#778696"/><stop offset="0.500" stop-color="#96525d"/><stop offset="0.600" stop-color="#962e34"/><stop offset="0.700" stop-color="#96191e"/><stop offset="0.800" stop-color="#960d10"/><stop offset="0.900" stop-color="#960406"/><stop offset="1.000" stop-color="#960000"/></linearGradient><linearGradient id="fb50" gradientUnits="userSpaceOnUse" x1="1184.0" y1="0" x2="1784.7" y2="0"><stop offset="0.000" stop-color="#008196"/><stop offset="0.100" stop-color="#008096"/><stop offset="0.200" stop-color="#007f96"/><stop offset="0.300" stop-color="#267d96"/><stop offset="0.400" stop-color="#7e7a96"/><stop offset="0.500" stop-color="#96475a"/><stop offset="0.600" stop-color="#962733"/><stop offset="0.700" stop-color="#96141d"/><stop offset="0.800" stop-color="#96090f"/><stop offset="0.900" stop-color="#960106"/><stop offset="1.000" stop-color="#960000"/></linearGradient><linearGradient id="fb51" gradientUnits="userSpaceOnUse" x1="1186.0" y1="0" x2="1794.0" y2="0"><stop offset="0.000" stop-color="#007b96"/><stop offset="0.100" stop-color="#007996"/><stop offset="0.200" stop-color="#007696"/><stop offset="0.300" stop-color="#2c7396"/><stop offset="0.400" stop-color="#856f96"/><stop offset="0.500" stop-color="#963d57"/><stop offset="0.600" stop-color="#962032"/><stop offset="0.700" stop-color="#96101d"/><stop offset="0.800" stop-color="#96050f"/><stop offset="0.900" stop-color="#960006"/><stop offset="1.000" stop-color="#960000"/></linearGradient><linearGradient id="fb52" gradientUnits="userSpaceOnUse" x1="1188.0" y1="0" x2="1803.2" y2="0"><stop offset="0.000" stop-color="#007496"/><stop offset="0.100" stop-color="#007196"/><stop offset="0.200" stop-color="#006e96"/><stop offset="0.300" stop-color="#326a96"/><stop offset="0.400" stop-color="#8c6496"/><stop offset="0.500" stop-color="#963455"/><stop offset="0.600" stop-color="#961a31"/><stop offset="0.700" stop-color="#960b1d"/><stop offset="0.800" stop-color="#96020f"/><stop offset="0.900" stop-color="#960006"/><stop offset="1.000" stop-color="#960000"/></linearGradient><linearGradient id="fb53" gradientUnits="userSpaceOnUse" x1="1190.1" y1="0" x2="1812.5" y2="0"><stop offset="0.000" stop-color="#006e96"/><stop offset="0.100" stop-color="#006a96"/><stop offset="0.200" stop-color="#006696"/><stop offset="0.300" stop-color="#386196"/><stop offset="0.400" stop-color="#925a96"/><stop offset="0.500" stop-color="#962c52"/><stop offset="0.600" stop-color="#961530"/><stop offset="0.700" stop-color="#96071c"/><stop offset="0.800" stop-color="#96000f"/><stop offset="0.900" stop-color="#960006"/><stop offset="1.000" stop-color="#960000"/></linearGradient><linearGradient id="fb54" gradientUnits="userSpaceOnUse" x1="1192.2" y1="0" x2="1802.9" y2="0"><stop offset="0.000" stop-color="#006896"/><stop offset="0.100" stop-color="#006496"/><stop offset="0.200" stop-color="#005f96"/><stop offset="0.300" stop-color="#375996"/><stop offset="0.400" stop-color="#8c5196"/><stop offset="0.500" stop-color="#962857"/><stop offset="0.600" stop-color="#961234"/><stop offset="0.700" stop-color="#96051f"/><stop offset="0.800" stop-color="#960012"/><stop offset="0.900" stop-color="#960008"/><stop offset="1.000" stop-color="#960001"/></linearGradient><linearGradient id="fb55" gradientUnits="userSpaceOnUse" x1="1194.4" y1="0" x2="1783.6" y2="0"><stop offset="0.000" stop-color="#006296"/><stop offset="0.100" stop-color="#005d96"/><stop offset="0.200" stop-color="#005896"/><stop offset="0.300" stop-color="#325296"/><stop offset="0.400" stop-color="#804996"/><stop offset="0.500" stop-color="#962760"/><stop offset="0.600" stop-color="#96113b"/><stop offset="0.700" stop-color="#960524"/><stop offset="0.800" stop-color="#960016"/><stop offset="0.900" stop-color="#96000c"/><stop offset="1.000" stop-color="#960004"/></linearGradient><linearGradient id="fb56" gradientUnits="userSpaceOnUse" x1="1196.7" y1="0" x2="1764.2" y2="0"><stop offset="0.000" stop-color="#005c96"/><stop offset="0.111" stop-color="#005796"/><stop offset="0.222" stop-color="#025096"/><stop offset="0.333" stop-color="#444896"/><stop offset="0.444" stop-color="#963a90"/><stop offset="0.556" stop-color="#961951"/><stop offset="0.667" stop-color="#960831"/><stop offset="0.778" stop-color="#96001e"/><stop offset="0.889" stop-color="#960011"/><stop offset="1.000" stop-color="#960008"/></linearGradient><linearGradient id="fb57" gradientUnits="userSpaceOnUse" x1="1199.1" y1="0" x2="1744.9" y2="0"><stop offset="0.000" stop-color="#005696"/><stop offset="0.111" stop-color="#005196"/><stop offset="0.222" stop-color="#014a96"/><stop offset="0.333" stop-color="#3f4196"/><stop offset="0.444" stop-color="#8f3696"/><stop offset="0.556" stop-color="#961759"/><stop offset="0.667" stop-color="#960737"/><stop offset="0.778" stop-color="#960023"/><stop offset="0.889" stop-color="#960015"/><stop offset="1.000" stop-color="#96000b"/></linearGradient><linearGradient id="fb58" gradientUnits="userSpaceOnUse" x1="1201.5" y1="0" x2="1725.5" y2="0"><stop offset="0.000" stop-color="#005196"/><stop offset="0.111" stop-color="#004b96"/><stop offset="0.222" stop-color="#004496"/><stop offset="0.333" stop-color="#3a3b96"/><stop offset="0.444" stop-color="#833096"/><stop offset="0.556" stop-color="#961663"/><stop offset="0.667" stop-color="#96063e"/><stop offset="0.778" stop-color="#960028"/><stop offset="0.889" stop-color="#96001a"/><stop offset="1.000" stop-color="#96000f"/></linearGradient><linearGradient id="fb59" gradientUnits="userSpaceOnUse" x1="1204.0" y1="0" x2="1706.2" y2="0"><stop offset="0.000" stop-color="#004b96"/><stop offset="0.125" stop-color="#004496"/><stop offset="0.250" stop-color="#0c3c96"/><stop offset="0.375" stop-color="#4c3296"/><stop offset="0.500" stop-color="#96228d"/><stop offset="0.625" stop-color="#960a52"/><stop offset="0.750" stop-color="#960033"/><stop offset="0.875" stop-color="#960020"/><stop offset="1.000" stop-color="#960013"/></linearGradient><linearGradient id="fb60" gradientUnits="userSpaceOnUse" x1="1206.6" y1="0" x2="1686.8" y2="0"><stop offset="0.000" stop-color="#004696"/><stop offset="0.125" stop-color="#003f96"/><stop offset="0.250" stop-color="#0b3796"/><stop offset="0.375" stop-color="#462c96"/><stop offset="0.500" stop-color="#911f96"/><stop offset="0.625" stop-color="#96085c"/><stop offset="0.750" stop-color="#96003a"/><stop offset="0.875" stop-color="#960026"/><stop offset="1.000" stop-color="#960018"/></linearGradient><linearGradient id="fb61" gradientUnits="userSpaceOnUse" x1="1209.3" y1="0" x2="1667.4" y2="0"><stop offset="0.000" stop-color="#004196"/><stop offset="0.125" stop-color="#003a96"/><stop offset="0.250" stop-color="#093196"/><stop offset="0.375" stop-color="#402796"/><stop offset="0.500" stop-color="#841b96"/><stop offset="0.625" stop-color="#960766"/><stop offset="0.750" stop-color="#960042"/><stop offset="0.875" stop-color="#96002c"/><stop offset="1.000" stop-color="#96001d"/></linearGradient><linearGradient id="fb62" gradientUnits="userSpaceOnUse" x1="1212.1" y1="0" x2="1648.1" y2="0"><stop offset="0.000" stop-color="#003c96"/><stop offset="0.143" stop-color="#003496"/><stop offset="0.286" stop-color="#162a96"/><stop offset="0.429" stop-color="#531e96"/><stop offset="0.571" stop-color="#960d8a"/><stop offset="0.714" stop-color="#960054"/><stop offset="0.857" stop-color="#960036"/><stop offset="1.000" stop-color="#960023"/></linearGradient><linearGradient id="fb63" gradientUnits="userSpaceOnUse" x1="1215.2" y1="0" x2="1628.7" y2="0"><stop offset="0.000" stop-color="#003696"/><stop offset="0.143" stop-color="#002f96"/><stop offset="0.286" stop-color="#142596"/><stop offset="0.429" stop-color="#4c1996"/><stop offset="0.571" stop-color="#930b96"/><stop offset="0.714" stop-color="#96005e"/><stop offset="0.857" stop-color="#96003e"/><stop offset="1.000" stop-color="#96002a"/></linearGradient><linearGradient id="fb64" gradientUnits="userSpaceOnUse" x1="1218.3" y1="0" x2="1609.4" y2="0"><stop offset="0.000" stop-color="#003296"/><stop offset="0.143" stop-color="#002a96"/><stop offset="0.286" stop-color="#122196"/><stop offset="0.429" stop-color="#461596"/><stop offset="0.571" stop-color="#850896"/><stop offset="0.714" stop-color="#960069"/><stop offset="0.857" stop-color="#960047"/><stop offset="1.000" stop-color="#960031"/></linearGradient><linearGradient id="fb65" gradientUnits="userSpaceOnUse" x1="1221.5" y1="0" x2="1590.0" y2="0"><stop offset="0.000" stop-color="#002d96"/><stop offset="0.167" stop-color="#002496"/><stop offset="0.333" stop-color="#1f1996"/><stop offset="0.500" stop-color="#5a0b96"/><stop offset="0.667" stop-color="#960088"/><stop offset="0.833" stop-color="#960055"/><stop offset="1.000" stop-color="#960039"/></linearGradient><linearGradient id="fb66" gradientUnits="userSpaceOnUse" x1="1224.8" y1="0" x2="1570.7" y2="0"><stop offset="0.000" stop-color="#002896"/><stop offset="0.167" stop-color="#001f96"/><stop offset="0.333" stop-color="#1c1596"/><stop offset="0.500" stop-color="#520896"/><stop offset="0.667" stop-color="#940096"/><stop offset="0.833" stop-color="#960061"/><stop offset="1.000" stop-color="#960042"/></linearGradient><linearGradient id="fb67" gradientUnits="userSpaceOnUse" x1="1228.2" y1="0" x2="1551.3" y2="0"><stop offset="0.000" stop-color="#002396"/><stop offset="0.200" stop-color="#001996"/><stop offset="0.400" stop-color="#2c0d96"/><stop offset="0.600" stop-color="#6b0096"/><stop offset="0.800" stop-color="#960078"/><stop offset="1.000" stop-color="#96004c"/></linearGradient><linearGradient id="fb68" gradientUnits="userSpaceOnUse" x1="1231.7" y1="0" x2="1531.9" y2="0"><stop offset="0.000" stop-color="#001f96"/><stop offset="0.200" stop-color="#001596"/><stop offset="0.400" stop-color="#280996"/><stop offset="0.600" stop-color="#600096"/><stop offset="0.800" stop-color="#960088"/><stop offset="1.000" stop-color="#960058"/></linearGradient><linearGradient id="fb69" gradientUnits="userSpaceOnUse" x1="1235.4" y1="0" x2="1512.6" y2="0"><stop offset="0.000" stop-color="#001a96"/><stop offset="0.200" stop-color="#001196"/><stop offset="0.400" stop-color="#240696"/><stop offset="0.600" stop-color="#550096"/><stop offset="0.800" stop-color="#920096"/><stop offset="1.000" stop-color="#960066"/></linearGradient><linearGradient id="fb70" gradientUnits="userSpaceOnUse" x1="1239.2" y1="0" x2="1493.2" y2="0"><stop offset="0.000" stop-color="#001696"/><stop offset="0.250" stop-color="#040b96"/><stop offset="0.500" stop-color="#350096"/><stop offset="0.750" stop-color="#710096"/><stop offset="1.000" stop-color="#960076"/></linearGradient><linearGradient id="fb71" gradientUnits="userSpaceOnUse" x1="1243.2" y1="0" x2="1473.9" y2="0"><stop offset="0.000" stop-color="#001196"/><stop offset="0.250" stop-color="#030796"/><stop offset="0.500" stop-color="#2f0096"/><stop offset="0.750" stop-color="#630096"/><stop offset="1.000" stop-color="#96008a"/></linearGradient><linearGradient id="fb72" gradientUnits="userSpaceOnUse" x1="1247.6" y1="0" x2="1454.5" y2="0"><stop offset="0.000" stop-color="#000d96"/><stop offset="0.333" stop-color="#0f0096"/><stop offset="0.667" stop-color="#460096"/><stop offset="1.000" stop-color="#8b0096"/></linearGradient><linearGradient id="fb73" gradientUnits="userSpaceOnUse" x1="1252.3" y1="0" x2="1435.2" y2="0"><stop offset="0.000" stop-color="#000896"/><stop offset="0.333" stop-color="#0e0096"/><stop offset="0.667" stop-color="#3d0096"/><stop offset="1.000" stop-color="#750096"/></linearGradient><linearGradient id="fb74" gradientUnits="userSpaceOnUse" x1="1257.5" y1="0" x2="1415.8" y2="0"><stop offset="0.000" stop-color="#000496"/><stop offset="0.333" stop-color="#0d0096"/><stop offset="0.667" stop-color="#340096"/><stop offset="1.000" stop-color="#610096"/></linearGradient><linearGradient id="fb75" gradientUnits="userSpaceOnUse" x1="1263.4" y1="0" x2="1396.4" y2="0"><stop offset="0.000" stop-color="#000096"/><stop offset="0.500" stop-color="#1b0096"/><stop offset="1.000" stop-color="#500096"/></linearGradient><linearGradient id="fb76" gradientUnits="userSpaceOnUse" x1="1270.6" y1="0" x2="1377.1" y2="0"><stop offset="0.000" stop-color="#000096"/><stop offset="0.500" stop-color="#180096"/><stop offset="1.000" stop-color="#400096"/></linearGradient><linearGradient id="fb77" gradientUnits="userSpaceOnUse" x1="1279.8" y1="0" x2="1357.7" y2="0"><stop offset="0.000" stop-color="#000096"/><stop offset="1.000" stop-color="#310096"/></linearGradient><linearGradient id="fb78" gradientUnits="userSpaceOnUse" x1="1290.3" y1="0" x2="1338.4" y2="0"><stop offset="0.000" stop-color="#040096"/><stop offset="1.000" stop-color="#230096"/></linearGradient><linearGradient id="fb79" gradientUnits="userSpaceOnUse" x1="1296.4" y1="0" x2="1327.5" y2="0"><stop offset="0.000" stop-color="#090096"/><stop offset="1.000" stop-color="#1d0096"/></linearGradient><linearGradient id="fb80" gradientUnits="userSpaceOnUse" x1="1378.2" y1="0" x2="1411.4" y2="0"><stop offset="0.000" stop-color="#00ff02"/><stop offset="1.000" stop-color="#07ff00"/></linearGradient><linearGradient id="fb81" gradientUnits="userSpaceOnUse" x1="1376.3" y1="0" x2="1423.3" y2="0"><stop offset="0.000" stop-color="#00ff03"/><stop offset="0.500" stop-color="#03ff01"/><stop offset="1.000" stop-color="#0fff00"/></linearGradient><linearGradient id="fb82" gradientUnits="userSpaceOnUse" x1="1374.4" y1="0" x2="1435.1" y2="0"><stop offset="0.000" stop-color="#00ff05"/><stop offset="0.333" stop-color="#02ff03"/><stop offset="0.667" stop-color="#0cff00"/><stop offset="1.000" stop-color="#19ff00"/></linearGradient><linearGradient id="fb83" gradientUnits="userSpaceOnUse" x1="1372.4" y1="0" x2="1446.9" y2="0"><stop offset="0.000" stop-color="#00ff08"/><stop offset="0.333" stop-color="#04ff04"/><stop offset="0.667" stop-color="#12ff01"/><stop offset="1.000" stop-color="#25ff00"/></linearGradient><linearGradient id="fb84" gradientUnits="userSpaceOnUse" x1="1370.5" y1="0" x2="1458.8" y2="0"><stop offset="0.000" stop-color="#00ff0a"/><stop offset="0.250" stop-color="#03ff07"/><stop offset="0.500" stop-color="#0fff03"/><stop offset="0.750" stop-color="#1fff01"/><stop offset="1.000" stop-color="#33ff00"/></linearGradient><linearGradient id="fb85" gradientUnits="userSpaceOnUse" x1="1368.6" y1="0" x2="1470.6" y2="0"><stop offset="0.000" stop-color="#00ff0d"/><stop offset="0.250" stop-color="#04ff09"/><stop offset="0.500" stop-color="#14ff05"/><stop offset="0.750" stop-color="#29ff01"/><stop offset="1.000" stop-color="#43ff00"/></linearGradient><linearGradient id="fb86" gradientUnits="userSpaceOnUse" x1="1366.7" y1="0" x2="1482.4" y2="0"><stop offset="0.000" stop-color="#00ff10"/><stop offset="0.200" stop-color="#03ff0c"/><stop offset="0.400" stop-color="#11ff08"/><stop offset="0.600" stop-color="#24ff04"/><stop offset="0.800" stop-color="#3bff01"/><stop offset="1.000" stop-color="#55ff00"/></linearGradient><linearGradient id="fb87" gradientUnits="userSpaceOnUse" x1="1364.7" y1="0" x2="1494.2" y2="0"><stop offset="0.000" stop-color="#00ff14"/><stop offset="0.200" stop-color="#05ff0f"/><stop offset="0.400" stop-color="#16ff0a"/><stop offset="0.600" stop-color="#2dff05"/><stop offset="0.800" stop-color="#49ff01"/><stop offset="1.000" stop-color="#6aff00"/></linearGradient><linearGradient id="fb88" gradientUnits="userSpaceOnUse" x1="1362.8" y1="0" x2="1506.1" y2="0"><stop offset="0.000" stop-color="#00ff17"/><stop offset="0.167" stop-color="#04ff13"/><stop offset="0.333" stop-color="#13ff0e"/><stop offset="0.500" stop-color="#28ff09"/><stop offset="0.667" stop-color="#42ff05"/><stop offset="0.833" stop-color="#60ff01"/><stop offset="1.000" stop-color="#83ff00"/></linearGradient><linearGradient id="fb89" gradientUnits="userSpaceOnUse" x1="1360.9" y1="0" x2="1517.9" y2="0"><stop offset="0.000" stop-color="#00ff1b"/><stop offset="0.143" stop-color="#03ff17"/><stop offset="0.286" stop-color="#12ff12"/><stop offset="0.429" stop-color="#25ff0d"/><stop offset="0.571" stop-color="#3dff09"/><stop offset="0.714" stop-color="#59ff04"/><stop offset="0.857" stop-color="#7aff01"/><stop offset="1.000" stop-color="#9eff00"/></linearGradient><linearGradient id="fb90" gradientUnits="userSpaceOnUse" x1="1358.9" y1="0" x2="1529.7" y2="0"><stop offset="0.000" stop-color="#00ff20"/><stop offset="0.143" stop-color="#04ff1b"/><stop offset="0.286" stop-color="#16ff15"/><stop offset="0.429" stop-color="#2dff10"/><stop offset="0.571" stop-color="#49ff0b"/><stop offset="0.714" stop-color="#6bff06"/><stop offset="0.857" stop-color="#91ff01"/><stop offset="1.000" stop-color="#beff00"/></linearGradient><linearGradient id="fb91" gradientUnits="userSpaceOnUse" x1="1357.0" y1="0" x2="1541.6" y2="0"><stop offset="0.000" stop-color="#00ff25"/><stop offset="0.125" stop-color="#04ff1f"/><stop offset="0.250" stop-color="#14ff1a"/><stop offset="0.375" stop-color="#2aff15"/><stop offset="0.500" stop-color="#45ff10"/><stop offset="0.625" stop-color="#65ff0a"/><stop offset="0.750" stop-color="#89ff05"/><stop offset="0.875" stop-color="#b3ff01"/><stop offset="1.000" stop-color="#e2ff00"/></linearGradient><linearGradient id="fb92" gradientUnits="userSpaceOnUse" x1="1355.1" y1="0" x2="1553.4" y2="0"><stop offset="0.000" stop-color="#00ff2a"/><stop offset="0.125" stop-color="#05ff24"/><stop offset="0.250" stop-color="#18ff1e"/><stop offset="0.375" stop-color="#31ff18"/><stop offset="0.500" stop-color="#51ff12"/><stop offset="0.625" stop-color="#76ff0c"/><stop offset="0.750" stop-color="#a1ff06"/><stop offset="0.875" stop-color="#d3ff01"/><stop offset="1.000" stop-color="#fff200"/></linearGradient><linearGradient id="fb93" gradientUnits="userSpaceOnUse" x1="1353.2" y1="0" x2="1565.2" y2="0"><stop offset="0.000" stop-color="#00ff2f"/><stop offset="0.111" stop-color="#04ff2a"/><stop offset="0.222" stop-color="#16ff24"/><stop offset="0.333" stop-color="#2fff1e"/><stop offset="0.444" stop-color="#4dff18"/><stop offset="0.556" stop-color="#70ff12"/><stop offset="0.667" stop-color="#9aff0c"/><stop offset="0.778" stop-color="#c9ff06"/><stop offset="0.889" stop-color="#fffe01"/><stop offset="1.000" stop-color="#ffcd00"/></linearGradient><linearGradient id="fb94" gradientUnits="userSpaceOnUse" x1="1351.2" y1="0" x2="1577.1" y2="0"><stop offset="0.000" stop-color="#00ff36"/><stop offset="0.111" stop-color="#05ff2f"/><stop offset="0.222" stop-color="#1aff29"/><stop offset="0.333" stop-color="#36ff23"/><stop offset="0.444" stop-color="#59ff1c"/><stop offset="0.556" stop-color="#82ff15"/><stop offset="0.667" stop-color="#b3ff0e"/><stop offset="0.778" stop-color="#ebff08"/><stop offset="0.889" stop-color="#ffd901"/><stop offset="1.000" stop-color="#ffad00"/></linearGradient><linearGradient id="fb95" gradientUnits="userSpaceOnUse" x1="1349.3" y1="0" x2="1588.9" y2="0"><stop offset="0.000" stop-color="#00ff3c"/><stop offset="0.100" stop-color="#05ff36"/><stop offset="0.200" stop-color="#19ff30"/><stop offset="0.300" stop-color="#34ff2a"/><stop offset="0.400" stop-color="#55ff23"/><stop offset="0.500" stop-color="#7dff1c"/><stop offset="0.600" stop-color="#acff15"/><stop offset="0.700" stop-color="#e2ff0e"/><stop offset="0.800" stop-color="#ffe207"/><stop offset="0.900" stop-color="#ffb501"/><stop offset="1.000" stop-color="#ff9300"/></linearGradient><linearGradient id="fb96" gradientUnits="userSpaceOnUse" x1="1347.4" y1="0" x2="1600.7" y2="0"><stop offset="0.000" stop-color="#00ff43"/><stop offset="0.091" stop-color="#04ff3d"/><stop offset="0.182" stop-color="#18ff37"/><stop offset="0.273" stop-color="#32ff31"/><stop offset="0.364" stop-color="#53ff2b"/><stop offset="0.455" stop-color="#7aff24"/><stop offset="0.545" stop-color="#a7ff1d"/><stop offset="0.636" stop-color="#dcff16"/><stop offset="0.727" stop-color="#ffe80d"/><stop offset="0.818" stop-color="#ffba06"/><stop offset="0.909" stop-color="#ff9701"/><stop offset="1.000" stop-color="#ff7c00"/></linearGradient><linearGradient id="fb97" gradientUnits="userSpaceOnUse" x1="1345.5" y1="0" x2="1612.6" y2="0"><stop offset="0.000" stop-color="#00ff4b"/><stop offset="0.091" stop-color="#05ff45"/><stop offset="0.182" stop-color="#1bff3e"/><stop offset="0.273" stop-color="#39ff38"/><stop offset="0.364" stop-color="#5fff30"/><stop offset="0.455" stop-color="#8bff29"/><stop offset="0.545" stop-color="#c0ff21"/><stop offset="0.636" stop-color="#feff19"/><stop offset="0.727" stop-color="#ffc80d"/><stop offset="0.818" stop-color="#ff9f06"/><stop offset="0.909" stop-color="#ff8101"/><stop offset="1.000" stop-color="#ff6900"/></linearGradient><linearGradient id="fb98" gradientUnits="userSpaceOnUse" x1="1343.5" y1="0" x2="1624.4" y2="0"><stop offset="0.000" stop-color="#00ff53"/><stop offset="0.083" stop-color="#05ff4d"/><stop offset="0.167" stop-color="#1bff47"/><stop offset="0.250" stop-color="#38ff40"/><stop offset="0.333" stop-color="#5dff39"/><stop offset="0.417" stop-color="#89ff32"/><stop offset="0.500" stop-color="#bdff2b"/><stop offset="0.583" stop-color="#f9ff23"/><stop offset="0.667" stop-color="#ffcc15"/><stop offset="0.750" stop-color="#ffa20b"/><stop offset="0.833" stop-color="#ff8305"/><stop offset="0.917" stop-color="#ff6b01"/><stop offset="1.000" stop-color="#ff5800"/></linearGradient><linearGradient id="fb99" gradientUnits="userSpaceOnUse" x1="1341.6" y1="0" x2="1636.2" y2="0"><stop offset="0.000" stop-color="#00ff5c"/><stop offset="0.083" stop-color="#06ff56"/><stop offset="0.167" stop-color="#1eff4f"/><stop offset="0.250" stop-color="#40ff48"/><stop offset="0.333" stop-color="#69ff41"/><stop offset="0.417" stop-color="#9cff39"/><stop offset="0.500" stop-color="#d8ff31"/><stop offset="0.583" stop-color="#ffe323"/><stop offset="0.667" stop-color="#ffb015"/><stop offset="0.750" stop-color="#ff8b0b"/><stop offset="0.833" stop-color="#ff7005"/><stop offset="0.917" stop-color="#ff5b01"/><stop offset="1.000" stop-color="#ff4a00"/></linearGradient><linearGradient id="fb100" gradientUnits="userSpaceOnUse" x1="1339.7" y1="0" x2="1648.1" y2="0"><stop offset="0.000" stop-color="#00ff66"/><stop offset="0.077" stop-color="#06ff60"/><stop offset="0.154" stop-color="#1eff5a"/><stop offset="0.231" stop-color="#3fff53"/><stop offset="0.308" stop-color="#68ff4c"/><stop offset="0.385" stop-color="#9aff44"/><stop offset="0.462" stop-color="#d5ff3c"/><stop offset="0.538" stop-color="#ffe62e"/><stop offset="0.615" stop-color="#ffb21d"/><stop offset="0.692" stop-color="#ff8d12"/><stop offset="0.769" stop-color="#ff710a"/><stop offset="0.846" stop-color="#ff5c04"/><stop offset="0.923" stop-color="#ff4b01"/><stop offset="1.000" stop-color="#ff3d00"/></linearGradient><linearGradient id="fb101" gradientUnits="userSpaceOnUse" x1="1337.8" y1="0" x2="1659.9" y2="0"><stop offset="0.000" stop-color="#00ff71"/><stop offset="0.077" stop-color="#07ff6b"/><stop offset="0.154" stop-color="#22ff64"/><stop offset="0.231" stop-color="#47ff5d"/><stop offset="0.308" stop-color="#76ff55"/><stop offset="0.385" stop-color="#afff4d"/><stop offset="0.462" stop-color="#f3ff44"/><stop offset="0.538" stop-color="#ffc82e"/><stop offset="0.615" stop-color="#ff9a1d"/><stop offset="0.692" stop-color="#ff7912"/><stop offset="0.769" stop-color="#ff600a"/><stop offset="0.846" stop-color="#ff4d04"/><stop offset="0.923" stop-color="#ff3e01"/><stop offset="1.000" stop-color="#ff3200"/></linearGradient><linearGradient id="fb102" gradientUnits="userSpaceOnUse" x1="1335.8" y1="0" x2="1671.7" y2="0"><stop offset="0.000" stop-color="#00ff7c"/><stop offset="0.071" stop-color="#06ff77"/><stop offset="0.143" stop-color="#21ff70"/><stop offset="0.214" stop-color="#46ff6a"/><stop offset="0.286" stop-color="#75ff62"/><stop offset="0.357" stop-color="#aeff5b"/><stop offset="0.429" stop-color="#f2ff52"/><stop offset="0.500" stop-color="#ffc93a"/><stop offset="0.571" stop-color="#ff9b26"/><stop offset="0.643" stop-color="#ff7a19"/><stop offset="0.714" stop-color="#ff610f"/><stop offset="0.786" stop-color="#ff4e09"/><stop offset="0.857" stop-color="#ff3f04"/><stop offset="0.929" stop-color="#ff3301"/><stop offset="1.000" stop-color="#ff2900"/></linearGradient><linearGradient id="fb103" gradientUnits="userSpaceOnUse" x1="1333.9" y1="0" x2="1683.6" y2="0"><stop offset="0.000" stop-color="#00ff89"/><stop offset="0.067" stop-color="#06ff84"/><stop offset="0.133" stop-color="#21ff7e"/><stop offset="0.200" stop-color="#46ff77"/><stop offset="0.267" stop-color="#75ff71"/><stop offset="0.333" stop-color="#aeff69"/><stop offset="0.400" stop-color="#f2ff61"/><stop offset="0.467" stop-color="#ffc845"/><stop offset="0.533" stop-color="#ff9a30"/><stop offset="0.600" stop-color="#ff7920"/><stop offset="0.667" stop-color="#ff6015"/><stop offset="0.733" stop-color="#ff4d0d"/><stop offset="0.800" stop-color="#ff3e08"/><stop offset="0.867" stop-color="#ff3203"/><stop offset="0.933" stop-color="#ff2901"/><stop offset="1.000" stop-color="#ff2100"/></linearGradient><linearGradient id="fb104" gradientUnits="userSpaceOnUse" x1="1332.0" y1="0" x2="1695.4" y2="0"><stop offset="0.000" stop-color="#00ff97"/><stop offset="0.067" stop-color="#07ff92"/><stop offset="0.133" stop-color="#25ff8c"/><stop offset="0.200" stop-color="#4fff85"/><stop offset="0.267" stop-color="#84ff7e"/><stop offset="0.333" stop-color="#c5ff77"/><stop offset="0.400" stop-color="#ffeb66"/><stop offset="0.467" stop-color="#ffaf45"/><stop offset="0.533" stop-color="#ff8530"/><stop offset="0.600" stop-color="#ff6820"/><stop offset="0.667" stop-color="#ff5116"/><stop offset="0.733" stop-color="#ff410e"/><stop offset="0.800" stop-color="#ff3308"/><stop offset="0.867" stop-color="#ff2903"/><stop offset="0.933" stop-color="#ff2001"/><stop offset="1.000" stop-color="#ff1900"/></linearGradient><linearGradient id="fb105" gradientUnits="userSpaceOnUse" x1="1330.1" y1="0" x2="1707.2" y2="0"><stop offset="0.000" stop-color="#00ffa6"/><stop offset="0.062" stop-color="#07ffa1"/><stop offset="0.125" stop-color="#25ff9c"/><stop offset="0.188" stop-color="#4fff96"/><stop offset="0.250" stop-color="#85ff90"/><stop offset="0.312" stop-color="#c7ff89"/><stop offset="0.375" stop-color="#ffe976"/><stop offset="0.438" stop-color="#ffad52"/><stop offset="0.500" stop-color="#ff843a"/><stop offset="0.562" stop-color="#ff6628"/><stop offset="0.625" stop-color="#ff501c"/><stop offset="0.688" stop-color="#ff3f13"/><stop offset="0.750" stop-color="#ff320c"/><stop offset="0.812" stop-color="#ff2807"/><stop offset="0.875" stop-color="#ff2003"/><stop offset="0.938" stop-color="#ff1901"/><stop offset="1.000" stop-color="#ff1300"/></linearGradient><linearGradient id="fb106" gradientUnits="userSpaceOnUse" x1="1328.1" y1="0" x2="1719.1" y2="0"><stop offset="0.000" stop-color="#00ffb7"/><stop offset="0.062" stop-color="#08ffb2"/><stop offset="0.125" stop-color="#2affad"/><stop offset="0.188" stop-color="#59ffa8"/><stop offset="0.250" stop-color="#96ffa2"/><stop offset="0.312" stop-color="#e2ff9b"/><stop offset="0.375" stop-color="#ffcc76"/><stop offset="0.438" stop-color="#ff9652"/><stop offset="0.500" stop-color="#ff713a"/><stop offset="0.562" stop-color="#ff5728"/><stop offset="0.625" stop-color="#ff431c"/><stop offset="0.688" stop-color="#ff3513"/><stop offset="0.750" stop-color="#ff290c"/><stop offset="0.812" stop-color="#ff2007"/><stop offset="0.875" stop-color="#ff1803"/><stop offset="0.938" stop-color="#ff1201"/><stop offset="1.000" stop-color="#ff0e00"/></linearGradient><linearGradient id="fb107" gradientUnits="userSpaceOnUse" x1="1326.2" y1="0" x2="1730.9" y2="0"><stop offset="0.000" stop-color="#00ffc9"/><stop offset="0.059" stop-color="#08ffc6"/><stop offset="0.118" stop-color="#2affc1"/><stop offset="0.176" stop-color="#5affbd"/><stop offset="0.235" stop-color="#98ffb8"/><stop offset="0.294" stop-color="#e5ffb2"/><stop offset="0.353" stop-color="#ffc887"/><stop offset="0.412" stop-color="#ff935f"/><stop offset="0.471" stop-color="#ff6f44"/><stop offset="0.529" stop-color="#ff5531"/><stop offset="0.588" stop-color="#ff4223"/><stop offset="0.647" stop-color="#ff3319"/><stop offset="0.706" stop-color="#ff2811"/><stop offset="0.765" stop-color="#ff1f0b"/><stop offset="0.824" stop-color="#ff1706"/><stop offset="0.882" stop-color="#ff1203"/><stop offset="0.941" stop-color="#ff0d01"/><stop offset="1.000" stop-color="#ff0900"/></linearGradient><linearGradient id="fb108" gradientUnits="userSpaceOnUse" x1="1324.3" y1="0" x2="1742.7" y2="0"><stop offset="0.000" stop-color="#00ffde"/><stop offset="0.059" stop-color="#09ffdb"/><stop offset="0.118" stop-color="#2fffd7"/><stop offset="0.176" stop-color="#66ffd3"/><stop offset="0.235" stop-color="#acffcf"/><stop offset="0.294" stop-color="#fff9c5"/><stop offset="0.353" stop-color="#ffae86"/><stop offset="0.412" stop-color="#ff7f5f"/><stop offset="0.471" stop-color="#ff5e44"/><stop offset="0.529" stop-color="#ff4731"/><stop offset="0.588" stop-color="#ff3623"/><stop offset="0.647" stop-color="#ff2919"/><stop offset="0.706" stop-color="#ff1f11"/><stop offset="0.765" stop-color="#ff180b"/><stop offset="0.824" stop-color="#ff1106"/><stop offset="0.882" stop-color="#ff0c03"/><stop offset="0.941" stop-color="#ff0801"/><stop offset="1.000" stop-color="#ff0500"/></linearGradient><linearGradient id="fb109" gradientUnits="userSpaceOnUse" x1="1322.4" y1="0" x2="1754.6" y2="0"><stop offset="0.000" stop-color="#00fff4"/><stop offset="0.056" stop-color="#09fff2"/><stop offset="0.111" stop-color="#30fff0"/><stop offset="0.167" stop-color="#67ffee"/><stop offset="0.222" stop-color="#b0ffeb"/><stop offset="0.278" stop-color="#fff3dc"/><stop offset="0.333" stop-color="#ffa998"/><stop offset="0.389" stop-color="#ff7b6c"/><stop offset="0.444" stop-color="#ff5b4e"/><stop offset="0.500" stop-color="#ff453a"/><stop offset="0.556" stop-color="#ff342a"/><stop offset="0.611" stop-color="#ff281f"/><stop offset="0.667" stop-color="#ff1e16"/><stop offset="0.722" stop-color="#ff160f"/><stop offset="0.778" stop-color="#ff100a"/><stop offset="0.833" stop-color="#ff0b06"/><stop offset="0.889" stop-color="#ff0703"/><stop offset="0.944" stop-color="#ff0400"/><stop offset="1.000" stop-color="#ff0200"/></linearGradient><linearGradient id="fb110" gradientUnits="userSpaceOnUse" x1="1320.4" y1="0" x2="1766.4" y2="0"><stop offset="0.000" stop-color="#00f1ff"/><stop offset="0.053" stop-color="#08f2ff"/><stop offset="0.105" stop-color="#2ef3ff"/><stop offset="0.158" stop-color="#65f3ff"/><stop offset="0.211" stop-color="#adf4ff"/><stop offset="0.263" stop-color="#ffebf4"/><stop offset="0.316" stop-color="#ffa4a9"/><stop offset="0.368" stop-color="#ff767a"/><stop offset="0.421" stop-color="#ff5859"/><stop offset="0.474" stop-color="#ff4243"/><stop offset="0.526" stop-color="#ff3132"/><stop offset="0.579" stop-color="#ff2525"/><stop offset="0.632" stop-color="#ff1c1b"/><stop offset="0.684" stop-color="#ff1414"/><stop offset="0.737" stop-color="#ff0f0e"/><stop offset="0.789" stop-color="#ff0a09"/><stop offset="0.842" stop-color="#ff0605"/><stop offset="0.895" stop-color="#ff0302"/><stop offset="0.947" stop-color="#ff0100"/><stop offset="1.000" stop-color="#ff0000"/></linearGradient><linearGradient id="fb111" gradientUnits="userSpaceOnUse" x1="1318.5" y1="0" x2="1759.9" y2="0"><stop offset="0.000" stop-color="#00dbff"/><stop offset="0.056" stop-color="#09daff"/><stop offset="0.111" stop-color="#30d9ff"/><stop offset="0.167" stop-color="#68d8ff"/><stop offset="0.222" stop-color="#b3d7ff"/><stop offset="0.278" stop-color="#ffc7ed"/><stop offset="0.333" stop-color="#ff89a4"/><stop offset="0.389" stop-color="#ff6276"/><stop offset="0.444" stop-color="#ff4757"/><stop offset="0.500" stop-color="#ff3440"/><stop offset="0.556" stop-color="#ff2630"/><stop offset="0.611" stop-color="#ff1c23"/><stop offset="0.667" stop-color="#ff141a"/><stop offset="0.722" stop-color="#ff0e12"/><stop offset="0.778" stop-color="#ff090d"/><stop offset="0.833" stop-color="#ff0508"/><stop offset="0.889" stop-color="#ff0205"/><stop offset="0.944" stop-color="#ff0002"/><stop offset="1.000" stop-color="#ff0000"/></linearGradient><linearGradient id="fb112" gradientUnits="userSpaceOnUse" x1="1316.6" y1="0" x2="1738.4" y2="0"><stop offset="0.000" stop-color="#00c6ff"/><stop offset="0.056" stop-color="#08c4ff"/><stop offset="0.111" stop-color="#2ac2ff"/><stop offset="0.167" stop-color="#5cc0ff"/><stop offset="0.222" stop-color="#9cbdff"/><stop offset="0.278" stop-color="#eebbff"/><stop offset="0.333" stop-color="#ff89bf"/><stop offset="0.389" stop-color="#ff628b"/><stop offset="0.444" stop-color="#ff4767"/><stop offset="0.500" stop-color="#ff344e"/><stop offset="0.556" stop-color="#ff263b"/><stop offset="0.611" stop-color="#ff1c2d"/><stop offset="0.667" stop-color="#ff1422"/><stop offset="0.722" stop-color="#ff0e19"/><stop offset="0.778" stop-color="#ff0913"/><stop offset="0.833" stop-color="#ff050d"/><stop offset="0.889" stop-color="#ff0209"/><stop offset="0.944" stop-color="#ff0005"/><stop offset="1.000" stop-color="#ff0003"/></linearGradient><linearGradient id="fb113" gradientUnits="userSpaceOnUse" x1="1314.7" y1="0" x2="1716.9" y2="0"><stop offset="0.000" stop-color="#00b2ff"/><stop offset="0.059" stop-color="#08b0ff"/><stop offset="0.118" stop-color="#29adff"/><stop offset="0.176" stop-color="#59aaff"/><stop offset="0.235" stop-color="#97a6ff"/><stop offset="0.294" stop-color="#e6a2ff"/><stop offset="0.353" stop-color="#ff7ac6"/><stop offset="0.412" stop-color="#ff5690"/><stop offset="0.471" stop-color="#ff3d6c"/><stop offset="0.529" stop-color="#ff2c52"/><stop offset="0.588" stop-color="#ff203e"/><stop offset="0.647" stop-color="#ff1630"/><stop offset="0.706" stop-color="#ff0f24"/><stop offset="0.765" stop-color="#ff0a1b"/><stop offset="0.824" stop-color="#ff0614"/><stop offset="0.882" stop-color="#ff030f"/><stop offset="0.941" stop-color="#ff000a"/><stop offset="1.000" stop-color="#ff0006"/></linearGradient><linearGradient id="fb114" gradientUnits="userSpaceOnUse" x1="1312.7" y1="0" x2="1695.4" y2="0"><stop offset="0.000" stop-color="#00a1ff"/><stop offset="0.062" stop-color="#089dff"/><stop offset="0.125" stop-color="#2899ff"/><stop offset="0.188" stop-color="#5795ff"/><stop offset="0.250" stop-color="#9391ff"/><stop offset="0.312" stop-color="#df8bff"/><stop offset="0.375" stop-color="#ff6bcc"/><stop offset="0.438" stop-color="#ff4a95"/><stop offset="0.500" stop-color="#ff3470"/><stop offset="0.562" stop-color="#ff2555"/><stop offset="0.625" stop-color="#ff1941"/><stop offset="0.688" stop-color="#ff1132"/><stop offset="0.750" stop-color="#ff0b26"/><stop offset="0.812" stop-color="#ff061d"/><stop offset="0.875" stop-color="#ff0316"/><stop offset="0.938" stop-color="#ff0110"/><stop offset="1.000" stop-color="#ff000b"/></linearGradient><linearGradient id="fb115" gradientUnits="userSpaceOnUse" x1="1310.8" y1="0" x2="1673.9" y2="0"><stop offset="0.000" stop-color="#0090ff"/><stop offset="0.067" stop-color="#088cff"/><stop offset="0.133" stop-color="#2888ff"/><stop offset="0.200" stop-color="#5583ff"/><stop offset="0.267" stop-color="#907dff"/><stop offset="0.333" stop-color="#da77ff"/><stop offset="0.400" stop-color="#ff5cd2"/><stop offset="0.467" stop-color="#ff3f9a"/><stop offset="0.533" stop-color="#ff2b73"/><stop offset="0.600" stop-color="#ff1d58"/><stop offset="0.667" stop-color="#ff1344"/><stop offset="0.733" stop-color="#ff0c34"/><stop offset="0.800" stop-color="#ff0728"/><stop offset="0.867" stop-color="#ff031f"/><stop offset="0.933" stop-color="#ff0117"/><stop offset="1.000" stop-color="#ff0011"/></linearGradient><linearGradient id="fb116" gradientUnits="userSpaceOnUse" x1="1308.9" y1="0" x2="1652.4" y2="0"><stop offset="0.000" stop-color="#0081ff"/><stop offset="0.071" stop-color="#087dff"/><stop offset="0.143" stop-color="#2777ff"/><stop offset="0.214" stop-color="#5472ff"/><stop offset="0.286" stop-color="#8d6cff"/><stop offset="0.357" stop-color="#d565ff"/><stop offset="0.429" stop-color="#ff4ed7"/><stop offset="0.500" stop-color="#ff349e"/><stop offset="0.571" stop-color="#ff2377"/><stop offset="0.643" stop-color="#ff175b"/><stop offset="0.714" stop-color="#ff0e46"/><stop offset="0.786" stop-color="#ff0836"/><stop offset="0.857" stop-color="#ff032a"/><stop offset="0.929" stop-color="#ff0120"/><stop offset="1.000" stop-color="#ff0019"/></linearGradient><linearGradient id="fb117" gradientUnits="userSpaceOnUse" x1="1307.0" y1="0" x2="1630.9" y2="0"><stop offset="0.000" stop-color="#0073ff"/><stop offset="0.077" stop-color="#086eff"/><stop offset="0.154" stop-color="#2769ff"/><stop offset="0.231" stop-color="#5362ff"/><stop offset="0.308" stop-color="#8b5bff"/><stop offset="0.385" stop-color="#d254ff"/><stop offset="0.462" stop-color="#ff41db"/><stop offset="0.538" stop-color="#ff2aa1"/><stop offset="0.615" stop-color="#ff1b79"/><stop offset="0.692" stop-color="#ff105d"/><stop offset="0.769" stop-color="#ff0948"/><stop offset="0.846" stop-color="#ff0438"/><stop offset="0.923" stop-color="#ff012b"/><stop offset="1.000" stop-color="#ff0021"/></linearGradient><linearGradient id="fb118" gradientUnits="userSpaceOnUse" x1="1305.0" y1="0" x2="1609.4" y2="0"><stop offset="0.000" stop-color="#0067ff"/><stop offset="0.077" stop-color="#0661ff"/><stop offset="0.154" stop-color="#215cff"/><stop offset="0.231" stop-color="#4756ff"/><stop offset="0.308" stop-color="#784fff"/><stop offset="0.385" stop-color="#b348ff"/><stop offset="0.462" stop-color="#fc40ff"/><stop offset="0.538" stop-color="#ff2ac0"/><stop offset="0.615" stop-color="#ff1a92"/><stop offset="0.692" stop-color="#ff1071"/><stop offset="0.769" stop-color="#ff0959"/><stop offset="0.846" stop-color="#ff0446"/><stop offset="0.923" stop-color="#ff0138"/><stop offset="1.000" stop-color="#ff002c"/></linearGradient><linearGradient id="fb119" gradientUnits="userSpaceOnUse" x1="1303.1" y1="0" x2="1587.8" y2="0"><stop offset="0.000" stop-color="#005bff"/><stop offset="0.083" stop-color="#0655ff"/><stop offset="0.167" stop-color="#214fff"/><stop offset="0.250" stop-color="#4649ff"/><stop offset="0.333" stop-color="#7642ff"/><stop offset="0.417" stop-color="#b03bff"/><stop offset="0.500" stop-color="#f732ff"/><stop offset="0.583" stop-color="#ff20c3"/><stop offset="0.667" stop-color="#ff1395"/><stop offset="0.750" stop-color="#ff0a74"/><stop offset="0.833" stop-color="#ff045b"/><stop offset="0.917" stop-color="#ff0148"/><stop offset="1.000" stop-color="#ff003a"/></linearGradient><linearGradient id="fb120" gradientUnits="userSpaceOnUse" x1="1301.2" y1="0" x2="1566.3" y2="0"><stop offset="0.000" stop-color="#0050ff"/><stop offset="0.091" stop-color="#064aff"/><stop offset="0.182" stop-color="#2144ff"/><stop offset="0.273" stop-color="#463dff"/><stop offset="0.364" stop-color="#7536ff"/><stop offset="0.455" stop-color="#ae2eff"/><stop offset="0.545" stop-color="#f426ff"/><stop offset="0.636" stop-color="#ff17c6"/><stop offset="0.727" stop-color="#ff0c97"/><stop offset="0.818" stop-color="#ff0576"/><stop offset="0.909" stop-color="#ff015d"/><stop offset="1.000" stop-color="#ff004a"/></linearGradient><linearGradient id="fb121" gradientUnits="userSpaceOnUse" x1="1299.3" y1="0" x2="1544.8" y2="0"><stop offset="0.000" stop-color="#0045ff"/><stop offset="0.100" stop-color="#063fff"/><stop offset="0.200" stop-color="#2139ff"/><stop offset="0.300" stop-color="#4632ff"/><stop offset="0.400" stop-color="#742bff"/><stop offset="0.500" stop-color="#ad23ff"/><stop offset="0.600" stop-color="#f21bff"/><stop offset="0.700" stop-color="#ff0fc8"/><stop offset="0.800" stop-color="#ff0699"/><stop offset="0.900" stop-color="#ff0177"/><stop offset="1.000" stop-color="#ff005e"/></linearGradient><linearGradient id="fb122" gradientUnits="userSpaceOnUse" x1="1297.3" y1="0" x2="1523.3" y2="0"><stop offset="0.000" stop-color="#003cff"/><stop offset="0.111" stop-color="#0736ff"/><stop offset="0.222" stop-color="#212fff"/><stop offset="0.333" stop-color="#4628ff"/><stop offset="0.444" stop-color="#7421ff"/><stop offset="0.556" stop-color="#ae19ff"/><stop offset="0.667" stop-color="#f311ff"/><stop offset="0.778" stop-color="#ff07c8"/><stop offset="0.889" stop-color="#ff0199"/><stop offset="1.000" stop-color="#ff0077"/></linearGradient><linearGradient id="fb123" gradientUnits="userSpaceOnUse" x1="1295.4" y1="0" x2="1501.8" y2="0"><stop offset="0.000" stop-color="#0033ff"/><stop offset="0.111" stop-color="#052eff"/><stop offset="0.222" stop-color="#1b28ff"/><stop offset="0.333" stop-color="#3922ff"/><stop offset="0.444" stop-color="#601bff"/><stop offset="0.556" stop-color="#8e15ff"/><stop offset="0.667" stop-color="#c50eff"/><stop offset="0.778" stop-color="#ff07f7"/><stop offset="0.889" stop-color="#ff01bf"/><stop offset="1.000" stop-color="#ff0097"/></linearGradient><linearGradient id="fb124" gradientUnits="userSpaceOnUse" x1="1293.5" y1="0" x2="1480.3" y2="0"><stop offset="0.000" stop-color="#002bff"/><stop offset="0.125" stop-color="#0526ff"/><stop offset="0.250" stop-color="#1b20ff"/><stop offset="0.375" stop-color="#391aff"/><stop offset="0.500" stop-color="#6014ff"/><stop offset="0.625" stop-color="#8e0dff"/><stop offset="0.750" stop-color="#c507ff"/><stop offset="0.875" stop-color="#ff01f9"/><stop offset="1.000" stop-color="#ff00c0"/></linearGradient><linearGradient id="fb125" gradientUnits="userSpaceOnUse" x1="1291.5" y1="0" x2="1458.8" y2="0"><stop offset="0.000" stop-color="#0024ff"/><stop offset="0.143" stop-color="#051eff"/><stop offset="0.286" stop-color="#1b19ff"/><stop offset="0.429" stop-color="#3a13ff"/><stop offset="0.571" stop-color="#600dff"/><stop offset="0.714" stop-color="#8f07ff"/><stop offset="0.857" stop-color="#c601ff"/><stop offset="1.000" stop-color="#ff00f8"/></linearGradient><linearGradient id="fb126" gradientUnits="userSpaceOnUse" x1="1289.6" y1="0" x2="1437.3" y2="0"><stop offset="0.000" stop-color="#001dff"/><stop offset="0.167" stop-color="#0618ff"/><stop offset="0.333" stop-color="#1c12ff"/><stop offset="0.500" stop-color="#3b0cff"/><stop offset="0.667" stop-color="#6206ff"/><stop offset="0.833" stop-color="#9101ff"/><stop offset="1.000" stop-color="#c900ff"/></linearGradient><linearGradient id="fb127" gradientUnits="userSpaceOnUse" x1="1287.7" y1="0" x2="1415.8" y2="0"><stop offset="0.000" stop-color="#0017ff"/><stop offset="0.200" stop-color="#0612ff"/><stop offset="0.400" stop-color="#1e0cff"/><stop offset="0.600" stop-color="#3e06ff"/><stop offset="0.800" stop-color="#6601ff"/><stop offset="1.000" stop-color="#9700ff"/></linearGradient><linearGradient id="fb128" gradientUnits="userSpaceOnUse" x1="1285.8" y1="0" x2="1394.3" y2="0"><stop offset="0.000" stop-color="#0012ff"/><stop offset="0.200" stop-color="#030dff"/><stop offset="0.400" stop-color="#1509ff"/><stop offset="0.600" stop-color="#2d04ff"/><stop offset="0.800" stop-color="#4a01ff"/><stop offset="1.000" stop-color="#6d00ff"/></linearGradient><linearGradient id="fb129" gradientUnits="userSpaceOnUse" x1="1283.8" y1="0" x2="1372.8" y2="0"><stop offset="0.000" stop-color="#000dff"/><stop offset="0.250" stop-color="#0408ff"/><stop offset="0.500" stop-color="#1504ff"/><stop offset="0.750" stop-color="#2d01ff"/><stop offset="1.000" stop-color="#4b00ff"/></linearGradient><linearGradient id="fb130" gradientUnits="userSpaceOnUse" x1="1281.9" y1="0" x2="1351.3" y2="0"><stop offset="0.000" stop-color="#0008ff"/><stop offset="0.333" stop-color="#0404ff"/><stop offset="0.667" stop-color="#1601ff"/><stop offset="1.000" stop-color="#2f00ff"/></linearGradient><linearGradient id="fb131" gradientUnits="userSpaceOnUse" x1="1280.0" y1="0" x2="1329.8" y2="0"><stop offset="0.000" stop-color="#0005ff"/><stop offset="0.500" stop-color="#0501ff"/><stop offset="1.000" stop-color="#1900ff"/></linearGradient><linearGradient id="fb132" gradientUnits="userSpaceOnUse" x1="1278.1" y1="0" x2="1308.3" y2="0"><stop offset="0.000" stop-color="#0002ff"/><stop offset="1.000" stop-color="#0800ff"/></linearGradient><linearGradient id="fb133" gradientUnits="userSpaceOnUse" x1="1643.5" y1="0" x2="1788.8" y2="0"><stop offset="0.000" stop-color="#759600"/><stop offset="0.250" stop-color="#7b9600"/><stop offset="0.500" stop-color="#819600"/><stop offset="0.750" stop-color="#879600"/><stop offset="1.000" stop-color="#8d9600"/></linearGradient><linearGradient id="fb134" gradientUnits="userSpaceOnUse" x1="1643.5" y1="0" x2="1800.7" y2="0"><stop offset="0.000" stop-color="#769600"/><stop offset="0.250" stop-color="#7c9600"/><stop offset="0.500" stop-color="#839600"/><stop offset="0.750" stop-color="#8a9600"/><stop offset="1.000" stop-color="#919600"/></linearGradient><linearGradient id="fb135" gradientUnits="userSpaceOnUse" x1="1643.5" y1="0" x2="1812.7" y2="0"><stop offset="0.000" stop-color="#779601"/><stop offset="0.250" stop-color="#7e9600"/><stop offset="0.500" stop-color="#859600"/><stop offset="0.750" stop-color="#8d9600"/><stop offset="1.000" stop-color="#949600"/></linearGradient><linearGradient id="fb136" gradientUnits="userSpaceOnUse" x1="1643.5" y1="0" x2="1824.7" y2="0"><stop offset="0.000" stop-color="#789601"/><stop offset="0.200" stop-color="#7e9600"/><stop offset="0.400" stop-color="#849600"/><stop offset="0.600" stop-color="#8b9600"/><stop offset="0.800" stop-color="#919600"/><stop offset="1.000" stop-color="#969400"/></linearGradient><linearGradient id="fb137" gradientUnits="userSpaceOnUse" x1="1643.5" y1="0" x2="1836.6" y2="0"><stop offset="0.000" stop-color="#799602"/><stop offset="0.200" stop-color="#7f9600"/><stop offset="0.400" stop-color="#869600"/><stop offset="0.600" stop-color="#8d9600"/><stop offset="0.800" stop-color="#949600"/><stop offset="1.000" stop-color="#969100"/></linearGradient><linearGradient id="fb138" gradientUnits="userSpaceOnUse" x1="1643.5" y1="0" x2="1848.6" y2="0"><stop offset="0.000" stop-color="#7a9603"/><stop offset="0.200" stop-color="#819601"/><stop offset="0.400" stop-color="#889600"/><stop offset="0.600" stop-color="#909600"/><stop offset="0.800" stop-color="#969500"/><stop offset="1.000" stop-color="#968d00"/></linearGradient><linearGradient id="fb139" gradientUnits="userSpaceOnUse" x1="1643.5" y1="0" x2="1860.6" y2="0"><stop offset="0.000" stop-color="#7b9603"/><stop offset="0.200" stop-color="#839601"/><stop offset="0.400" stop-color="#8a9600"/><stop offset="0.600" stop-color="#929600"/><stop offset="0.800" stop-color="#969200"/><stop offset="1.000" stop-color="#968a00"/></linearGradient><linearGradient id="fb140" gradientUnits="userSpaceOnUse" x1="1643.5" y1="0" x2="1872.5" y2="0"><stop offset="0.000" stop-color="#7c9604"/><stop offset="0.167" stop-color="#839602"/><stop offset="0.333" stop-color="#8a9600"/><stop offset="0.500" stop-color="#919600"/><stop offset="0.667" stop-color="#969400"/><stop offset="0.833" stop-color="#968d00"/><stop offset="1.000" stop-color="#968700"/></linearGradient><linearGradient id="fb141" gradientUnits="userSpaceOnUse" x1="1643.5" y1="0" x2="1884.4" y2="0"><stop offset="0.000" stop-color="#7d9604"/><stop offset="0.167" stop-color="#849603"/><stop offset="0.333" stop-color="#8c9601"/><stop offset="0.500" stop-color="#939600"/><stop offset="0.667" stop-color="#969100"/><stop offset="0.833" stop-color="#968a00"/><stop offset="1.000" stop-color="#968400"/></linearGradient><linearGradient id="fb142" gradientUnits="userSpaceOnUse" x1="1643.5" y1="0" x2="1890.3" y2="0"><stop offset="0.000" stop-color="#7e9605"/><stop offset="0.167" stop-color="#869603"/><stop offset="0.333" stop-color="#8d9601"/><stop offset="0.500" stop-color="#959600"/><stop offset="0.667" stop-color="#968f00"/><stop offset="0.833" stop-color="#968800"/><stop offset="1.000" stop-color="#968200"/></linearGradient><linearGradient id="fb143" gradientUnits="userSpaceOnUse" x1="1643.5" y1="0" x2="1890.3" y2="0"><stop offset="0.000" stop-color="#809606"/><stop offset="0.167" stop-color="#879604"/><stop offset="0.333" stop-color="#8f9602"/><stop offset="0.500" stop-color="#969600"/><stop offset="0.667" stop-color="#968e00"/><stop offset="0.833" stop-color="#968700"/><stop offset="1.000" stop-color="#968100"/></linearGradient><linearGradient id="fb144" gradientUnits="userSpaceOnUse" x1="1643.5" y1="0" x2="1890.3" y2="0"><stop offset="0.000" stop-color="#819606"/><stop offset="0.167" stop-color="#889604"/><stop offset="0.333" stop-color="#909603"/><stop offset="0.500" stop-color="#969401"/><stop offset="0.667" stop-color="#968d00"/><stop offset="0.833" stop-color="#968600"/><stop offset="1.000" stop-color="#967f00"/></linearGradient><linearGradient id="fb145" gradientUnits="userSpaceOnUse" x1="1643.5" y1="0" x2="1890.3" y2="0"><stop offset="0.000" stop-color="#829607"/><stop offset="0.167" stop-color="#8a9605"/><stop offset="0.333" stop-color="#919603"/><stop offset="0.500" stop-color="#969301"/><stop offset="0.667" stop-color="#968b00"/><stop offset="0.833" stop-color="#968500"/><stop offset="1.000" stop-color="#967e00"/></linearGradient><linearGradient id="fb146" gradientUnits="userSpaceOnUse" x1="1643.5" y1="0" x2="1890.3" y2="0"><stop offset="0.000" stop-color="#839608"/><stop offset="0.167" stop-color="#8b9606"/><stop offset="0.333" stop-color="#939604"/><stop offset="0.500" stop-color="#969102"/><stop offset="0.667" stop-color="#968a00"/><stop offset="0.833" stop-color="#968300"/><stop offset="1.000" stop-color="#967d00"/></linearGradient><linearGradient id="fb147" gradientUnits="userSpaceOnUse" x1="1643.5" y1="0" x2="1890.3" y2="0"><stop offset="0.000" stop-color="#849608"/><stop offset="0.167" stop-color="#8c9606"/><stop offset="0.333" stop-color="#949605"/><stop offset="0.500" stop-color="#969003"/><stop offset="0.667" stop-color="#968901"/><stop offset="0.833" stop-color="#968200"/><stop offset="1.000" stop-color="#967c00"/></linearGradient><linearGradient id="fb148" gradientUnits="userSpaceOnUse" x1="1643.5" y1="0" x2="1890.3" y2="0"><stop offset="0.000" stop-color="#869609"/><stop offset="0.167" stop-color="#8d9607"/><stop offset="0.333" stop-color="#959605"/><stop offset="0.500" stop-color="#968f03"/><stop offset="0.667" stop-color="#968801"/><stop offset="0.833" stop-color="#968100"/><stop offset="1.000" stop-color="#967b00"/></linearGradient><linearGradient id="fb149" gradientUnits="userSpaceOnUse" x1="1643.5" y1="0" x2="1890.3" y2="0"><stop offset="0.000" stop-color="#87960a"/><stop offset="0.167" stop-color="#8f9608"/><stop offset="0.333" stop-color="#969506"/><stop offset="0.500" stop-color="#968d04"/><stop offset="0.667" stop-color="#968602"/><stop offset="0.833" stop-color="#968000"/><stop offset="1.000" stop-color="#967900"/></linearGradient><linearGradient id="fb150" gradientUnits="userSpaceOnUse" x1="1643.5" y1="0" x2="1890.3" y2="0"><stop offset="0.000" stop-color="#88960a"/><stop offset="0.167" stop-color="#909609"/><stop offset="0.333" stop-color="#969407"/><stop offset="0.500" stop-color="#968c04"/><stop offset="0.667" stop-color="#968502"/><stop offset="0.833" stop-color="#967e01"/><stop offset="1.000" stop-color="#967800"/></linearGradient><linearGradient id="fb151" gradientUnits="userSpaceOnUse" x1="1643.5" y1="0" x2="1890.3" y2="0"><stop offset="0.000" stop-color="#8a960b"/><stop offset="0.167" stop-color="#929609"/><stop offset="0.333" stop-color="#969207"/><stop offset="0.500" stop-color="#968b05"/><stop offset="0.667" stop-color="#968403"/><stop offset="0.833" stop-color="#967d01"/><stop offset="1.000" stop-color="#967700"/></linearGradient><linearGradient id="fb152" gradientUnits="userSpaceOnUse" x1="1643.5" y1="0" x2="1890.3" y2="0"><stop offset="0.000" stop-color="#8b960c"/><stop offset="0.167" stop-color="#93960a"/><stop offset="0.333" stop-color="#969108"/><stop offset="0.500" stop-color="#968906"/><stop offset="0.667" stop-color="#968204"/><stop offset="0.833" stop-color="#967c02"/><stop offset="1.000" stop-color="#967600"/></linearGradient><linearGradient id="fb153" gradientUnits="userSpaceOnUse" x1="1643.5" y1="0" x2="1890.3" y2="0"><stop offset="0.000" stop-color="#8c960d"/><stop offset="0.167" stop-color="#94960b"/><stop offset="0.333" stop-color="#969008"/><stop offset="0.500" stop-color="#968806"/><stop offset="0.667" stop-color="#968104"/><stop offset="0.833" stop-color="#967b02"/><stop offset="1.000" stop-color="#967500"/></linearGradient><linearGradient id="fb154" gradientUnits="userSpaceOnUse" x1="1643.5" y1="0" x2="1648.7" y2="0"><stop offset="0.000" stop-color="#b8ff00"/><stop offset="1.000" stop-color="#b9ff00"/></linearGradient><linearGradient id="fb155" gradientUnits="userSpaceOnUse" x1="1643.5" y1="0" x2="1662.0" y2="0"><stop offset="0.000" stop-color="#baff00"/><stop offset="1.000" stop-color="#c0ff00"/></linearGradient><linearGradient id="fb156" gradientUnits="userSpaceOnUse" x1="1643.5" y1="0" x2="1675.3" y2="0"><stop offset="0.000" stop-color="#bcff00"/><stop offset="1.000" stop-color="#c7ff00"/></linearGradient><linearGradient id="fb157" gradientUnits="userSpaceOnUse" x1="1643.5" y1="0" x2="1688.6" y2="0"><stop offset="0.000" stop-color="#beff01"/><stop offset="1.000" stop-color="#ceff00"/></linearGradient><linearGradient id="fb158" gradientUnits="userSpaceOnUse" x1="1643.5" y1="0" x2="1702.0" y2="0"><stop offset="0.000" stop-color="#c0ff01"/><stop offset="1.000" stop-color="#d6ff00"/></linearGradient><linearGradient id="fb159" gradientUnits="userSpaceOnUse" x1="1643.5" y1="0" x2="1715.3" y2="0"><stop offset="0.000" stop-color="#c3ff01"/><stop offset="0.500" stop-color="#d0ff00"/><stop offset="1.000" stop-color="#ddff00"/></linearGradient><linearGradient id="fb160" gradientUnits="userSpaceOnUse" x1="1643.5" y1="0" x2="1728.6" y2="0"><stop offset="0.000" stop-color="#c5ff02"/><stop offset="0.500" stop-color="#d5ff01"/><stop offset="1.000" stop-color="#e5ff00"/></linearGradient><linearGradient id="fb161" gradientUnits="userSpaceOnUse" x1="1643.5" y1="0" x2="1741.9" y2="0"><stop offset="0.000" stop-color="#c7ff02"/><stop offset="0.500" stop-color="#daff01"/><stop offset="1.000" stop-color="#edff00"/></linearGradient><linearGradient id="fb162" gradientUnits="userSpaceOnUse" x1="1643.5" y1="0" x2="1755.2" y2="0"><stop offset="0.000" stop-color="#caff03"/><stop offset="0.333" stop-color="#d8ff01"/><stop offset="0.667" stop-color="#e6ff00"/><stop offset="1.000" stop-color="#f5ff00"/></linearGradient><linearGradient id="fb163" gradientUnits="userSpaceOnUse" x1="1643.5" y1="0" x2="1768.5" y2="0"><stop offset="0.000" stop-color="#ccff03"/><stop offset="0.333" stop-color="#dcff02"/><stop offset="0.667" stop-color="#ecff01"/><stop offset="1.000" stop-color="#feff00"/></linearGradient><linearGradient id="fb164" gradientUnits="userSpaceOnUse" x1="1643.5" y1="0" x2="1781.8" y2="0"><stop offset="0.000" stop-color="#cfff04"/><stop offset="0.333" stop-color="#e0ff02"/><stop offset="0.667" stop-color="#f3ff01"/><stop offset="1.000" stop-color="#fff800"/></linearGradient><linearGradient id="fb165" gradientUnits="userSpaceOnUse" x1="1643.5" y1="0" x2="1795.2" y2="0"><stop offset="0.000" stop-color="#d1ff04"/><stop offset="0.250" stop-color="#e0ff03"/><stop offset="0.500" stop-color="#efff02"/><stop offset="0.750" stop-color="#ffff00"/><stop offset="1.000" stop-color="#fff000"/></linearGradient><linearGradient id="fb166" gradientUnits="userSpaceOnUse" x1="1643.5" y1="0" x2="1808.5" y2="0"><stop offset="0.000" stop-color="#d4ff05"/><stop offset="0.250" stop-color="#e4ff03"/><stop offset="0.500" stop-color="#f5ff02"/><stop offset="0.750" stop-color="#fff801"/><stop offset="1.000" stop-color="#ffe800"/></linearGradient><linearGradient id="fb167" gradientUnits="userSpaceOnUse" x1="1643.5" y1="0" x2="1821.8" y2="0"><stop offset="0.000" stop-color="#d6ff05"/><stop offset="0.250" stop-color="#e8ff04"/><stop offset="0.500" stop-color="#fbff02"/><stop offset="0.750" stop-color="#fff101"/><stop offset="1.000" stop-color="#ffe000"/></linearGradient><linearGradient id="fb168" gradientUnits="userSpaceOnUse" x1="1643.5" y1="0" x2="1835.1" y2="0"><stop offset="0.000" stop-color="#d9ff06"/><stop offset="0.200" stop-color="#e8ff04"/><stop offset="0.400" stop-color="#f8ff03"/><stop offset="0.600" stop-color="#fff502"/><stop offset="0.800" stop-color="#ffe600"/><stop offset="1.000" stop-color="#ffd900"/></linearGradient><linearGradient id="fb169" gradientUnits="userSpaceOnUse" x1="1643.5" y1="0" x2="1848.4" y2="0"><stop offset="0.000" stop-color="#dbff07"/><stop offset="0.200" stop-color="#ecff05"/><stop offset="0.400" stop-color="#feff03"/><stop offset="0.600" stop-color="#ffef02"/><stop offset="0.800" stop-color="#ffe000"/><stop offset="1.000" stop-color="#ffd200"/></linearGradient><linearGradient id="fb170" gradientUnits="userSpaceOnUse" x1="1643.5" y1="0" x2="1861.7" y2="0"><stop offset="0.000" stop-color="#deff07"/><stop offset="0.200" stop-color="#f0ff05"/><stop offset="0.400" stop-color="#fffb04"/><stop offset="0.600" stop-color="#ffe902"/><stop offset="0.800" stop-color="#ffd901"/><stop offset="1.000" stop-color="#ffcb00"/></linearGradient><linearGradient id="fb171" gradientUnits="userSpaceOnUse" x1="1643.5" y1="0" x2="1875.0" y2="0"><stop offset="0.000" stop-color="#e1ff08"/><stop offset="0.167" stop-color="#f1ff06"/><stop offset="0.333" stop-color="#fffc05"/><stop offset="0.500" stop-color="#ffec03"/><stop offset="0.667" stop-color="#ffde01"/><stop offset="0.833" stop-color="#ffd000"/><stop offset="1.000" stop-color="#ffc400"/></linearGradient><linearGradient id="fb172" gradientUnits="userSpaceOnUse" x1="1643.5" y1="0" x2="1888.4" y2="0"><stop offset="0.000" stop-color="#e4ff09"/><stop offset="0.167" stop-color="#f5ff07"/><stop offset="0.333" stop-color="#fff705"/><stop offset="0.500" stop-color="#ffe703"/><stop offset="0.667" stop-color="#ffd802"/><stop offset="0.833" stop-color="#ffca00"/><stop offset="1.000" stop-color="#ffbe00"/></linearGradient><linearGradient id="fb173" gradientUnits="userSpaceOnUse" x1="1643.5" y1="0" x2="1890.3" y2="0"><stop offset="0.000" stop-color="#e7ff09"/><stop offset="0.167" stop-color="#f8ff08"/><stop offset="0.333" stop-color="#fff405"/><stop offset="0.500" stop-color="#ffe404"/><stop offset="0.667" stop-color="#ffd502"/><stop offset="0.833" stop-color="#ffc701"/><stop offset="1.000" stop-color="#ffbb00"/></linearGradient><linearGradient id="fb174" gradientUnits="userSpaceOnUse" x1="1643.5" y1="0" x2="1890.3" y2="0"><stop offset="0.000" stop-color="#eaff0a"/><stop offset="0.167" stop-color="#fbff08"/><stop offset="0.333" stop-color="#fff106"/><stop offset="0.500" stop-color="#ffe104"/><stop offset="0.667" stop-color="#ffd202"/><stop offset="0.833" stop-color="#ffc501"/><stop offset="1.000" stop-color="#ffb800"/></linearGradient></defs><g clip-path="url(#lc)"><rect x="1200.8" y="120" width="63.1" height="7" fill="url(#fb0)"/><rect x="1186.2" y="127" width="101.3" height="7" fill="url(#fb1)"/><rect x="1178.6" y="134" width="126.2" height="7" fill="url(#fb2)"/><rect x="1173.1" y="141" width="147.5" height="7" fill="url(#fb3)"/><rect x="1168.8" y="148" width="166.2" height="7" fill="url(#fb4)"/><rect x="1165.3" y="155" width="183.2" height="7" fill="url(#fb5)"/><rect x="1162.1" y="162" width="199.0" height="7" fill="url(#fb6)"/><rect x="1159.7" y="169" width="213.4" height="7" fill="url(#fb7)"/><rect x="1157.5" y="176" width="227.2" height="7" fill="url(#fb8)"/><rect x="1155.8" y="183" width="240.0" height="7" fill="url(#fb9)"/><rect x="1154.3" y="190" width="252.4" height="7" fill="url(#fb10)"/><rect x="1153.2" y="197" width="264.1" height="7" fill="url(#fb11)"/><rect x="1152.1" y="204" width="275.5" height="7" fill="url(#fb12)"/><rect x="1151.3" y="211" width="286.5" height="7" fill="url(#fb13)"/><rect x="1150.6" y="218" width="297.2" height="7" fill="url(#fb14)"/><rect x="1150.1" y="225" width="307.6" height="7" fill="url(#fb15)"/><rect x="1149.7" y="232" width="317.8" height="7" fill="url(#fb16)"/><rect x="1149.4" y="239" width="327.8" height="7" fill="url(#fb17)"/><rect x="1149.3" y="246" width="337.4" height="7" fill="url(#fb18)"/><rect x="1149.2" y="253" width="347.0" height="7" fill="url(#fb19)"/><rect x="1149.4" y="260" width="356.4" height="7" fill="url(#fb20)"/><rect x="1149.6" y="267" width="365.6" height="7" fill="url(#fb21)"/><rect x="1149.9" y="274" width="374.8" height="7" fill="url(#fb22)"/><rect x="1150.3" y="281" width="383.8" height="7" fill="url(#fb23)"/><rect x="1150.8" y="288" width="392.7" height="7" fill="url(#fb24)"/><rect x="1151.3" y="295" width="401.5" height="7" fill="url(#fb25)"/><rect x="1152.0" y="302" width="410.1" height="7" fill="url(#fb26)"/><rect x="1152.7" y="309" width="418.8" height="7" fill="url(#fb27)"/><rect x="1153.4" y="316" width="427.4" height="7" fill="url(#fb28)"/><rect x="1154.2" y="323" width="435.8" height="7" fill="url(#fb29)"/><rect x="1155.1" y="330" width="444.2" height="7" fill="url(#fb30)"/><rect x="1156.0" y="337" width="452.5" height="7" fill="url(#fb31)"/><rect x="1157.1" y="344" width="460.7" height="7" fill="url(#fb32)"/><rect x="1158.1" y="351" width="468.9" height="7" fill="url(#fb33)"/><rect x="1159.2" y="358" width="477.1" height="7" fill="url(#fb34)"/><rect x="1160.4" y="365" width="485.2" height="7" fill="url(#fb35)"/><rect x="1161.7" y="372" width="493.2" height="7" fill="url(#fb36)"/><rect x="1162.9" y="379" width="501.3" height="7" fill="url(#fb37)"/><rect x="1164.2" y="386" width="509.2" height="7" fill="url(#fb38)"/><rect x="1165.6" y="393" width="517.1" height="7" fill="url(#fb39)"/><rect x="1167.0" y="400" width="525.0" height="7" fill="url(#fb40)"/><rect x="1168.5" y="407" width="532.7" height="7" fill="url(#fb41)"/><rect x="1170.0" y="414" width="540.5" height="7" fill="url(#fb42)"/><rect x="1171.6" y="421" width="548.2" height="7" fill="url(#fb43)"/><rect x="1173.2" y="428" width="555.8" height="7" fill="url(#fb44)"/><rect x="1174.9" y="435" width="563.4" height="7" fill="url(#fb45)"/><rect x="1176.6" y="442" width="570.9" height="7" fill="url(#fb46)"/><rect x="1178.4" y="449" width="578.4" height="7" fill="url(#fb47)"/><rect x="1180.2" y="456" width="585.9" height="7" fill="url(#fb48)"/><rect x="1182.1" y="463" width="593.3" height="7" fill="url(#fb49)"/><rect x="1184.0" y="470" width="600.6" height="7" fill="url(#fb50)"/><rect x="1186.0" y="477" width="608.0" height="7" fill="url(#fb51)"/><rect x="1188.0" y="484" width="615.2" height="7" fill="url(#fb52)"/><rect x="1190.1" y="491" width="622.4" height="7" fill="url(#fb53)"/><rect x="1192.2" y="498" width="610.7" height="7" fill="url(#fb54)"/><rect x="1194.4" y="505" width="589.1" height="7" fill="url(#fb55)"/><rect x="1196.7" y="512" width="567.5" height="7" fill="url(#fb56)"/><rect x="1199.1" y="519" width="545.8" height="7" fill="url(#fb57)"/><rect x="1201.5" y="526" width="524.0" height="7" fill="url(#fb58)"/><rect x="1204.0" y="533" width="502.1" height="7" fill="url(#fb59)"/><rect x="1206.6" y="540" width="480.2" height="7" fill="url(#fb60)"/><rect x="1209.3" y="547" width="458.1" height="7" fill="url(#fb61)"/><rect x="1212.1" y="554" width="435.9" height="7" fill="url(#fb62)"/><rect x="1215.2" y="561" width="413.6" height="7" fill="url(#fb63)"/><rect x="1218.3" y="568" width="391.1" height="7" fill="url(#fb64)"/><rect x="1221.5" y="575" width="368.5" height="7" fill="url(#fb65)"/><rect x="1224.8" y="582" width="345.8" height="7" fill="url(#fb66)"/><rect x="1228.2" y="589" width="323.1" height="7" fill="url(#fb67)"/><rect x="1231.7" y="596" width="300.2" height="7" fill="url(#fb68)"/><rect x="1235.4" y="603" width="277.2" height="7" fill="url(#fb69)"/><rect x="1239.2" y="610" width="254.0" height="7" fill="url(#fb70)"/><rect x="1243.2" y="617" width="230.6" height="7" fill="url(#fb71)"/><rect x="1247.6" y="624" width="206.9" height="7" fill="url(#fb72)"/><rect x="1252.3" y="631" width="182.8" height="7" fill="url(#fb73)"/><rect x="1257.5" y="638" width="158.3" height="7" fill="url(#fb74)"/><rect x="1263.4" y="645" width="133.0" height="7" fill="url(#fb75)"/><rect x="1270.6" y="652" width="106.5" height="7" fill="url(#fb76)"/><rect x="1279.8" y="659" width="77.9" height="7" fill="url(#fb77)"/><rect x="1290.3" y="666" width="48.1" height="7" fill="url(#fb78)"/><rect x="1296.4" y="673" width="31.1" height="7" fill="url(#fb79)"/></g><g clip-path="url(#tc)"><rect x="1378.2" y="216" width="33.2" height="8" fill="url(#fb80)"/><rect x="1376.3" y="224" width="47.0" height="8" fill="url(#fb81)"/><rect x="1374.4" y="232" width="60.7" height="8" fill="url(#fb82)"/><rect x="1372.4" y="240" width="74.5" height="8" fill="url(#fb83)"/><rect x="1370.5" y="248" width="88.2" height="8" fill="url(#fb84)"/><rect x="1368.6" y="256" width="102.0" height="8" fill="url(#fb85)"/><rect x="1366.7" y="264" width="115.8" height="8" fill="url(#fb86)"/><rect x="1364.7" y="272" width="129.5" height="8" fill="url(#fb87)"/><rect x="1362.8" y="280" width="143.3" height="8" fill="url(#fb88)"/><rect x="1360.9" y="288" width="157.0" height="8" fill="url(#fb89)"/><rect x="1358.9" y="296" width="170.8" height="8" fill="url(#fb90)"/><rect x="1357.0" y="304" width="184.6" height="8" fill="url(#fb91)"/><rect x="1355.1" y="312" width="198.3" height="8" fill="url(#fb92)"/><rect x="1353.2" y="320" width="212.1" height="8" fill="url(#fb93)"/><rect x="1351.2" y="328" width="225.8" height="8" fill="url(#fb94)"/><rect x="1349.3" y="336" width="239.6" height="8" fill="url(#fb95)"/><rect x="1347.4" y="344" width="253.3" height="8" fill="url(#fb96)"/><rect x="1345.5" y="352" width="267.1" height="8" fill="url(#fb97)"/><rect x="1343.5" y="360" width="280.9" height="8" fill="url(#fb98)"/><rect x="1341.6" y="368" width="294.6" height="8" fill="url(#fb99)"/><rect x="1339.7" y="376" width="308.4" height="8" fill="url(#fb100)"/><rect x="1337.8" y="384" width="322.1" height="8" fill="url(#fb101)"/><rect x="1335.8" y="392" width="335.9" height="8" fill="url(#fb102)"/><rect x="1333.9" y="400" width="349.7" height="8" fill="url(#fb103)"/><rect x="1332.0" y="408" width="363.4" height="8" fill="url(#fb104)"/><rect x="1330.1" y="416" width="377.2" height="8" fill="url(#fb105)"/><rect x="1328.1" y="424" width="390.9" height="8" fill="url(#fb106)"/><rect x="1326.2" y="432" width="404.7" height="8" fill="url(#fb107)"/><rect x="1324.3" y="440" width="418.4" height="8" fill="url(#fb108)"/><rect x="1322.4" y="448" width="432.2" height="8" fill="url(#fb109)"/><rect x="1320.4" y="456" width="446.0" height="8" fill="url(#fb110)"/><rect x="1318.5" y="464" width="441.4" height="8" fill="url(#fb111)"/><rect x="1316.6" y="472" width="421.8" height="8" fill="url(#fb112)"/><rect x="1314.7" y="480" width="402.2" height="8" fill="url(#fb113)"/><rect x="1312.7" y="488" width="382.6" height="8" fill="url(#fb114)"/><rect x="1310.8" y="496" width="363.1" height="8" fill="url(#fb115)"/><rect x="1308.9" y="504" width="343.5" height="8" fill="url(#fb116)"/><rect x="1307.0" y="512" width="323.9" height="8" fill="url(#fb117)"/><rect x="1305.0" y="520" width="304.3" height="8" fill="url(#fb118)"/><rect x="1303.1" y="528" width="284.7" height="8" fill="url(#fb119)"/><rect x="1301.2" y="536" width="265.2" height="8" fill="url(#fb120)"/><rect x="1299.3" y="544" width="245.6" height="8" fill="url(#fb121)"/><rect x="1297.3" y="552" width="226.0" height="8" fill="url(#fb122)"/><rect x="1295.4" y="560" width="206.4" height="8" fill="url(#fb123)"/><rect x="1293.5" y="568" width="186.8" height="8" fill="url(#fb124)"/><rect x="1291.5" y="576" width="167.3" height="8" fill="url(#fb125)"/><rect x="1289.6" y="584" width="147.7" height="8" fill="url(#fb126)"/><rect x="1287.7" y="592" width="128.1" height="8" fill="url(#fb127)"/><rect x="1285.8" y="600" width="108.5" height="8" fill="url(#fb128)"/><rect x="1283.8" y="608" width="89.0" height="8" fill="url(#fb129)"/><rect x="1281.9" y="616" width="69.4" height="8" fill="url(#fb130)"/><rect x="1280.0" y="624" width="49.8" height="8" fill="url(#fb131)"/><rect x="1278.1" y="632" width="30.2" height="8" fill="url(#fb132)"/></g><g clip-path="url(#bx)"><g clip-path="url(#ilc)"><rect x="1643.5" y="125" width="145.3" height="10" fill="url(#fb133)"/><rect x="1643.5" y="135" width="157.2" height="10" fill="url(#fb134)"/><rect x="1643.5" y="145" width="169.2" height="10" fill="url(#fb135)"/><rect x="1643.5" y="155" width="181.2" height="10" fill="url(#fb136)"/><rect x="1643.5" y="165" width="193.1" height="10" fill="url(#fb137)"/><rect x="1643.5" y="175" width="205.1" height="10" fill="url(#fb138)"/><rect x="1643.5" y="185" width="217.1" height="10" fill="url(#fb139)"/><rect x="1643.5" y="195" width="229.0" height="10" fill="url(#fb140)"/><rect x="1643.5" y="205" width="240.9" height="10" fill="url(#fb141)"/><rect x="1643.5" y="215" width="246.8" height="10" fill="url(#fb142)"/><rect x="1643.5" y="225" width="246.8" height="10" fill="url(#fb143)"/><rect x="1643.5" y="235" width="246.8" height="10" fill="url(#fb144)"/><rect x="1643.5" y="245" width="246.8" height="10" fill="url(#fb145)"/><rect x="1643.5" y="255" width="246.8" height="10" fill="url(#fb146)"/><rect x="1643.5" y="265" width="246.8" height="10" fill="url(#fb147)"/><rect x="1643.5" y="275" width="246.8" height="10" fill="url(#fb148)"/><rect x="1643.5" y="285" width="246.8" height="10" fill="url(#fb149)"/><rect x="1643.5" y="295" width="246.8" height="10" fill="url(#fb150)"/><rect x="1643.5" y="305" width="246.8" height="10" fill="url(#fb151)"/><rect x="1643.5" y="315" width="246.8" height="10" fill="url(#fb152)"/><rect x="1643.5" y="325" width="246.8" height="10" fill="url(#fb153)"/></g><g clip-path="url(#itc)"><rect x="1643.5" y="125" width="5.2" height="10" fill="url(#fb154)"/><rect x="1643.5" y="135" width="18.5" height="10" fill="url(#fb155)"/><rect x="1643.5" y="145" width="31.8" height="10" fill="url(#fb156)"/><rect x="1643.5" y="155" width="45.1" height="10" fill="url(#fb157)"/><rect x="1643.5" y="165" width="58.5" height="10" fill="url(#fb158)"/><rect x="1643.5" y="175" width="71.8" height="10" fill="url(#fb159)"/><rect x="1643.5" y="185" width="85.1" height="10" fill="url(#fb160)"/><rect x="1643.5" y="195" width="98.4" height="10" fill="url(#fb161)"/><rect x="1643.5" y="205" width="111.7" height="10" fill="url(#fb162)"/><rect x="1643.5" y="215" width="125.0" height="10" fill="url(#fb163)"/><rect x="1643.5" y="225" width="138.3" height="10" fill="url(#fb164)"/><rect x="1643.5" y="235" width="151.7" height="10" fill="url(#fb165)"/><rect x="1643.5" y="245" width="165.0" height="10" fill="url(#fb166)"/><rect x="1643.5" y="255" width="178.3" height="10" fill="url(#fb167)"/><rect x="1643.5" y="265" width="191.6" height="10" fill="url(#fb168)"/><rect x="1643.5" y="275" width="204.9" height="10" fill="url(#fb169)"/><rect x="1643.5" y="285" width="218.2" height="10" fill="url(#fb170)"/><rect x="1643.5" y="295" width="231.5" height="10" fill="url(#fb171)"/><rect x="1643.5" y="305" width="244.9" height="10" fill="url(#fb172)"/><rect x="1643.5" y="315" width="246.8" height="10" fill="url(#fb173)"/><rect x="1643.5" y="325" width="246.8" height="10" fill="url(#fb174)"/></g></g></svg>
<canvas id="cie" class="a" style="left:1160px;top:116px;width:740px;height:562px;" width="740" height="562"></canvas>
<svg class="a" style="left:0;top:0" width="1920" height="1044"><rect x="1160" y="116.5" width="739" height="561.2" fill="none" stroke="#9a9a9a" stroke-width="2"/><line x1="1153" y1="677.7" x2="1160" y2="677.7" stroke="#ddd" stroke-width="2"/><text x="1152.5" y="685.7" font-size="16" fill="#dcdcdc" text-anchor="end" font-weight="normal" >0</text><line x1="1160.0" y1="677.7" x2="1160.0" y2="684.5" stroke="#ddd" stroke-width="2"/><text x="1160.0" y="702.5" font-size="16" fill="#dcdcdc" text-anchor="middle" font-weight="normal" >0</text><line x1="1153" y1="611.0" x2="1160" y2="611.0" stroke="#ddd" stroke-width="2"/><text x="1152.5" y="619.0" font-size="16" fill="#dcdcdc" text-anchor="end" font-weight="normal" >0,1</text><line x1="1247.9" y1="677.7" x2="1247.9" y2="684.5" stroke="#ddd" stroke-width="2"/><text x="1247.9" y="702.5" font-size="16" fill="#dcdcdc" text-anchor="middle" font-weight="normal" >0,1</text><line x1="1153" y1="544.4" x2="1160" y2="544.4" stroke="#ddd" stroke-width="2"/><text x="1152.5" y="552.4" font-size="16" fill="#dcdcdc" text-anchor="end" font-weight="normal" >0,2</text><line x1="1335.8" y1="677.7" x2="1335.8" y2="684.5" stroke="#ddd" stroke-width="2"/><text x="1335.8" y="702.5" font-size="16" fill="#dcdcdc" text-anchor="middle" font-weight="normal" >0,2</text><line x1="1153" y1="477.7" x2="1160" y2="477.7" stroke="#ddd" stroke-width="2"/><text x="1152.5" y="485.7" font-size="16" fill="#dcdcdc" text-anchor="end" font-weight="normal" >0,3</text><line x1="1423.7" y1="677.7" x2="1423.7" y2="684.5" stroke="#ddd" stroke-width="2"/><text x="1423.7" y="702.5" font-size="16" fill="#dcdcdc" text-anchor="middle" font-weight="normal" >0,3</text><line x1="1153" y1="411.1" x2="1160" y2="411.1" stroke="#ddd" stroke-width="2"/><text x="1152.5" y="419.1" font-size="16" fill="#dcdcdc" text-anchor="end" font-weight="normal" >0,4</text><line x1="1511.6" y1="677.7" x2="1511.6" y2="684.5" stroke="#ddd" stroke-width="2"/><text x="1511.6" y="702.5" font-size="16" fill="#dcdcdc" text-anchor="middle" font-weight="normal" >0,4</text><line x1="1153" y1="344.4" x2="1160" y2="344.4" stroke="#ddd" stroke-width="2"/><text x="1152.5" y="352.4" font-size="16" fill="#dcdcdc" text-anchor="end" font-weight="normal" >0,5</text><line x1="1599.5" y1="677.7" x2="1599.5" y2="684.5" stroke="#ddd" stroke-width="2"/><text x="1599.5" y="702.5" font-size="16" fill="#dcdcdc" text-anchor="middle" font-weight="normal" >0,5</text><line x1="1153" y1="277.8" x2="1160" y2="277.8" stroke="#ddd" stroke-width="2"/><text x="1152.5" y="285.8" font-size="16" fill="#dcdcdc" text-anchor="end" font-weight="normal" >0,6</text><line x1="1687.4" y1="677.7" x2="1687.4" y2="684.5" stroke="#ddd" stroke-width="2"/><text x="1687.4" y="702.5" font-size="16" fill="#dcdcdc" text-anchor="middle" font-weight="normal" >0,6</text><line x1="1153" y1="211.1" x2="1160" y2="211.1" stroke="#ddd" stroke-width="2"/><text x="1152.5" y="219.1" font-size="16" fill="#dcdcdc" text-anchor="end" font-weight="normal" >0,7</text><line x1="1775.3" y1="677.7" x2="1775.3" y2="684.5" stroke="#ddd" stroke-width="2"/><text x="1775.3" y="702.5" font-size="16" fill="#dcdcdc" text-anchor="middle" font-weight="normal" >0,7</text><line x1="1153" y1="144.4" x2="1160" y2="144.4" stroke="#ddd" stroke-width="2"/><text x="1152.5" y="152.4" font-size="16" fill="#dcdcdc" text-anchor="end" font-weight="normal" >0,8</text><line x1="1863.2" y1="677.7" x2="1863.2" y2="684.5" stroke="#ddd" stroke-width="2"/><text x="1863.2" y="702.5" font-size="16" fill="#dcdcdc" text-anchor="middle" font-weight="normal" >0,8</text><rect x="1639" y="121.2" width="255.7" height="216.4" fill="none" stroke="#333" stroke-width="4"/><rect x="1642.7" y="124.7" width="248.4" height="209.5" fill="none" stroke="#a0a0a0" stroke-width="1.6"/><rect x="1385.6" y="208.0" width="15" height="15" fill="none" stroke="#fff" stroke-width="1.7"/><rect x="1393.8" y="260.9" width="15" height="15" fill="none" stroke="#fff" stroke-width="1.7"/><rect x="1402.8" y="306.0" width="15" height="15" fill="none" stroke="#fff" stroke-width="1.7"/><rect x="1410.6" y="352.5" width="15" height="15" fill="none" stroke="#fff" stroke-width="1.7"/><rect x="1418.3" y="400.5" width="15" height="15" fill="none" stroke="#fff" stroke-width="1.7"/><rect x="1328.1" y="447.0" width="15" height="15" fill="none" stroke="#fff" stroke-width="1.7"/><rect x="1348.4" y="448.5" width="15" height="15" fill="none" stroke="#fff" stroke-width="1.7"/><rect x="1367.0" y="448.5" width="15" height="15" fill="none" stroke="#fff" stroke-width="1.7"/><rect x="1387.0" y="448.5" width="15" height="15" fill="none" stroke="#fff" stroke-width="1.7"/><rect x="1407.4" y="448.5" width="15" height="15" fill="none" stroke="#fff" stroke-width="1.7"/><rect x="1283.2" y="628.5" width="15" height="15" fill="none" stroke="#fff" stroke-width="1.7"/><rect x="1314.7" y="591.4" width="15" height="15" fill="none" stroke="#fff" stroke-width="1.7"/><rect x="1342.3" y="555.5" width="15" height="15" fill="none" stroke="#fff" stroke-width="1.7"/><rect x="1370.0" y="521.4" width="15" height="15" fill="none" stroke="#fff" stroke-width="1.7"/><rect x="1398.1" y="484.5" width="15" height="15" fill="none" stroke="#fff" stroke-width="1.7"/><rect x="1447.7" y="568.0" width="15" height="15" fill="none" stroke="#fff" stroke-width="1.7"/><rect x="1443.0" y="543.5" width="15" height="15" fill="none" stroke="#fff" stroke-width="1.7"/><rect x="1440.2" y="520.0" width="15" height="15" fill="none" stroke="#fff" stroke-width="1.7"/><rect x="1435.5" y="497.0" width="15" height="15" fill="none" stroke="#fff" stroke-width="1.7"/><rect x="1430.5" y="473.3" width="15" height="15" fill="none" stroke="#fff" stroke-width="1.7"/><rect x="1750.5" y="455.1" width="15" height="15" fill="none" stroke="#fff" stroke-width="1.7"/><rect x="1677.5" y="455.0" width="15" height="15" fill="none" stroke="#fff" stroke-width="1.7"/><rect x="1618.4" y="453.3" width="15" height="15" fill="none" stroke="#fff" stroke-width="1.7"/><rect x="1551.5" y="451.9" width="15" height="15" fill="none" stroke="#fff" stroke-width="1.7"/><rect x="1491.0" y="450.2" width="15" height="15" fill="none" stroke="#fff" stroke-width="1.7"/><rect x="1537.8" y="310.5" width="15" height="15" fill="none" stroke="#fff" stroke-width="1.7"/><rect x="1514.5" y="340.0" width="15" height="15" fill="none" stroke="#fff" stroke-width="1.7"/><rect x="1491.0" y="368.0" width="15" height="15" fill="none" stroke="#fff" stroke-width="1.7"/><rect x="1471.0" y="394.5" width="15" height="15" fill="none" stroke="#fff" stroke-width="1.7"/><rect x="1449.4" y="420.7" width="15" height="15" fill="none" stroke="#fff" stroke-width="1.7"/><circle cx="1399.5" cy="224.9" r="4.8" fill="#0cc00c" stroke="#000" stroke-width="1.5"/><circle cx="1406.8" cy="269.8" r="4.8" fill="#3ac03a" stroke="#000" stroke-width="1.5"/><circle cx="1413.5" cy="316.3" r="4.8" fill="#60c060" stroke="#000" stroke-width="1.5"/><circle cx="1421.1" cy="361.5" r="4.8" fill="#83c083" stroke="#000" stroke-width="1.5"/><circle cx="1429.0" cy="409.3" r="4.8" fill="#9dc09d" stroke="#000" stroke-width="1.5"/><circle cx="1335.7" cy="454.4" r="4.8" fill="#0cc0c0" stroke="#000" stroke-width="1.5"/><circle cx="1355.8" cy="454.4" r="4.8" fill="#3ac0c0" stroke="#000" stroke-width="1.5"/><circle cx="1375.8" cy="456.3" r="4.8" fill="#60c0c0" stroke="#000" stroke-width="1.5"/><circle cx="1396.2" cy="456.1" r="4.8" fill="#83c0c0" stroke="#000" stroke-width="1.5"/><circle cx="1415.0" cy="456.1" r="4.8" fill="#9dc0c0" stroke="#000" stroke-width="1.5"/><circle cx="1286.1" cy="637.5" r="4.8" fill="#0c0cc0" stroke="#000" stroke-width="1.5"/><circle cx="1315.5" cy="601.8" r="4.8" fill="#3a3ac0" stroke="#000" stroke-width="1.5"/><circle cx="1346.6" cy="563.0" r="4.8" fill="#6060c0" stroke="#000" stroke-width="1.5"/><circle cx="1377.5" cy="527.3" r="4.8" fill="#8383c0" stroke="#000" stroke-width="1.5"/><circle cx="1405.4" cy="491.9" r="4.8" fill="#9d9dc0" stroke="#000" stroke-width="1.5"/><circle cx="1451.9" cy="574.0" r="4.8" fill="#c00cc0" stroke="#000" stroke-width="1.5"/><circle cx="1449.0" cy="550.8" r="4.8" fill="#c03ac0" stroke="#000" stroke-width="1.5"/><circle cx="1446.0" cy="527.3" r="4.8" fill="#c060c0" stroke="#000" stroke-width="1.5"/><circle cx="1441.2" cy="502.7" r="4.8" fill="#c083c0" stroke="#000" stroke-width="1.5"/><circle cx="1437.9" cy="479.4" r="4.8" fill="#c09dc0" stroke="#000" stroke-width="1.5"/><circle cx="1749.9" cy="462.5" r="4.8" fill="#c00c0c" stroke="#000" stroke-width="1.5"/><circle cx="1686.5" cy="460.8" r="4.8" fill="#c03a3a" stroke="#000" stroke-width="1.5"/><circle cx="1626.0" cy="459.3" r="4.8" fill="#c06060" stroke="#000" stroke-width="1.5"/><circle cx="1557.6" cy="459.0" r="4.8" fill="#c08383" stroke="#000" stroke-width="1.5"/><circle cx="1496.9" cy="457.7" r="4.8" fill="#c09d9d" stroke="#000" stroke-width="1.5"/><circle cx="1545.3" cy="322.6" r="4.8" fill="#c0c00c" stroke="#000" stroke-width="1.5"/><circle cx="1523.5" cy="348.6" r="4.8" fill="#c0c03a" stroke="#000" stroke-width="1.5"/><circle cx="1500.2" cy="376.9" r="4.8" fill="#c0c060" stroke="#000" stroke-width="1.5"/><circle cx="1478.3" cy="403.3" r="4.8" fill="#c0c083" stroke="#000" stroke-width="1.5"/><circle cx="1456.7" cy="427.8" r="4.8" fill="#c0c09d" stroke="#000" stroke-width="1.5"/><rect x="1427.5" y="450.1" width="15" height="15" fill="none" stroke="#000" stroke-width="1.8"/><circle cx="1435" cy="456.3" r="4.8" fill="#fff" stroke="#000" stroke-width="1.5"/><rect x="1758" y="221" width="15" height="15" fill="none" stroke="#fff" stroke-width="1.7"/><circle cx="1768.3" cy="250.4" r="4.8" fill="#a8a800" stroke="#000" stroke-width="1.5"/></svg>
<script>var LOC=[[0.17411, 0.00496], [0.1738, 0.00492], [0.17334, 0.0048], [0.17258, 0.0048], [0.17141, 0.0051], [0.1703, 0.00579], [0.16888, 0.0069], [0.1669, 0.00856], [0.16441, 0.01086], [0.1611, 0.01379], [0.15664, 0.0177], [0.15099, 0.02274], [0.14396, 0.0297], [0.1355, 0.03988], [0.12412, 0.0578], [0.10959, 0.08684], [0.09129, 0.1327], [0.06871, 0.20072], [0.04539, 0.29498], [0.02346, 0.4127], [0.00817, 0.53842], [0.00386, 0.65482], [0.01387, 0.75019], [0.03885, 0.81202], [0.0743, 0.8338], [0.11416, 0.82621], [0.15472, 0.80586], [0.19288, 0.78163], [0.22962, 0.75433], [0.26578, 0.72432], [0.3016, 0.69231], [0.33736, 0.65885], [0.3731, 0.62445], [0.40874, 0.58961], [0.44406, 0.55471], [0.47877, 0.5202], [0.51249, 0.48659], [0.54479, 0.45443], [0.57515, 0.42423], [0.60293, 0.3965], [0.62704, 0.37249], [0.64823, 0.35139], [0.66576, 0.33401], [0.68008, 0.31975], [0.6915, 0.30834], [0.70061, 0.2993], [0.70792, 0.29203], [0.71403, 0.28593], [0.71903, 0.28093], [0.72303, 0.27695], [0.72599, 0.27401], [0.72827, 0.27173], [0.72997, 0.27003]];
(function(){
var cv=document.getElementById('cie'); if(!cv||!cv.getContext) return;
var ctx=cv.getContext('2d');
var OX=1160, OY=116, X0=1160, SX=879, Y0=676.9, SY=666.57, PW=1.3;
// Catmull-Rom densify locus
(function(){var out=[];var n=LOC.length;for(var i=0;i<n-1;i++){var p0=LOC[Math.max(i-1,0)],p1=LOC[i],p2=LOC[i+1],p3=LOC[Math.min(i+2,n-1)];
for(var t=0;t<8;t++){var u=t/8,u2=u*u,u3=u2*u;out.push([0.5*((2*p1[0])+(-p0[0]+p2[0])*u+(2*p0[0]-5*p1[0]+4*p2[0]-p3[0])*u2+(-p0[0]+3*p1[0]-3*p2[0]+p3[0])*u3),
0.5*((2*p1[1])+(-p0[1]+p2[1])*u+(2*p0[1]-5*p1[1]+4*p2[1]-p3[1])*u2+(-p0[1]+3*p1[1]-3*p2[1]+p3[1])*u3)]);}}
out.push(LOC[n-1]);LOC=out;})();
function rgbAt(x,y,out){
  if(y<1e-4) y=1e-4;
  var X=x/y, Z=(1-x-y)/y;
  var r= 2.4934969*X-0.9313836-0.4027108*Z;
  var g=-0.8294890*X+1.7626641+0.0236247*Z;
  var b= 0.0358458*X-0.0761724+0.9568845*Z;
  var ins=(r>=0&&g>=0&&b>=0);
  if(r<0)r=0; if(g<0)g=0; if(b<0)b=0;
  var m=Math.max(r,g,b); if(m<=0){out[0]=out[1]=out[2]=0;return;}
  r/=m; g/=m; b/=m; if(ins){r=Math.pow(r,PW); g=Math.pow(g,PW); b=Math.pow(b,PW);}
  var k=(ins?255:150);
  out[0]=r*k; out[1]=g*k; out[2]=b*k;
}
function render(w,h,ss,mapx,mapy,locusPath){
  // w,h canvas size; ss supersample
  var W=w*ss, Hh=h*ss;
  var off=document.createElement('canvas'); off.width=W; off.height=Hh;
  var oc=off.getContext('2d');
  var img=oc.createImageData(W,Hh); var d=img.data; var o=[0,0,0];
  for(var j=0;j<Hh;j++){
    var y=mapy((j+0.5)/ss);
    for(var i=0;i<W;i++){
      var x=mapx((i+0.5)/ss);
      rgbAt(x,y,o);
      var p=(j*W+i)*4; d[p]=o[0]; d[p+1]=o[1]; d[p+2]=o[2]; d[p+3]=255;
    }
  }
  oc.putImageData(img,0,0);
  // mask
  var mk=document.createElement('canvas'); mk.width=W; mk.height=Hh;
  var mc=mk.getContext('2d'); mc.scale(ss,ss); mc.beginPath();
  locusPath(mc); mc.closePath(); mc.fillStyle='#fff'; mc.fill();
  oc.globalCompositeOperation='destination-in'; oc.drawImage(mk,0,0);
  return off;
}
// main
var w=740,h=562;
var main=render(w,h,2,function(px){return (px+OX-X0)/SX;},function(py){return (Y0-(py+OY))/SY;},
 function(c){ for(var i=0;i<LOC.length;i++){var p=LOC[i]; var X=X0+p[0]*SX-OX, Y=Y0-p[1]*SY-OY; if(i==0)c.moveTo(X,Y); else c.lineTo(X,Y);} });
ctx.imageSmoothingEnabled=true;
ctx.drawImage(main,0,0,w,h);
// thin purple line
ctx.strokeStyle='rgba(90,20,30,0.8)'; ctx.lineWidth=1;
ctx.beginPath(); ctx.moveTo(X0+0.7347*SX-OX, Y0-0.2653*SY-OY+1); ctx.lineTo(X0+0.1741*SX-OX, Y0-0.005*SY-OY+1); ctx.stroke();
// inset
var ix0=1643.5, iy0=125.5, iw=246.8, ih=207.9, cx=0.4378, cy=0.5359, R=0.049;
var isx=iw/R, isy=ih/R, icx=1765.5, icy=228.4;
var ins=render(Math.ceil(iw),Math.ceil(ih),2,function(px){return cx+(px+ix0-icx)/isx;},function(py){return cy-(py+iy0-icy)/isy;},
 function(c){ for(var i=0;i<LOC.length;i++){var p=LOC[i]; var X=icx+(p[0]-cx)*isx-ix0, Y=icy-(p[1]-cy)*isy-iy0; if(i==0)c.moveTo(X,Y); else c.lineTo(X,Y);} });
ctx.fillStyle='#222';
ctx.drawImage(ins, 0,0,Math.ceil(iw)*2,Math.ceil(ih)*2, ix0-OX, iy0-OY, Math.ceil(iw), Math.ceil(ih));
var fb=document.getElementById('fallback'); if(fb) fb.parentNode.removeChild(fb);
})();
</script>
</body></html>
